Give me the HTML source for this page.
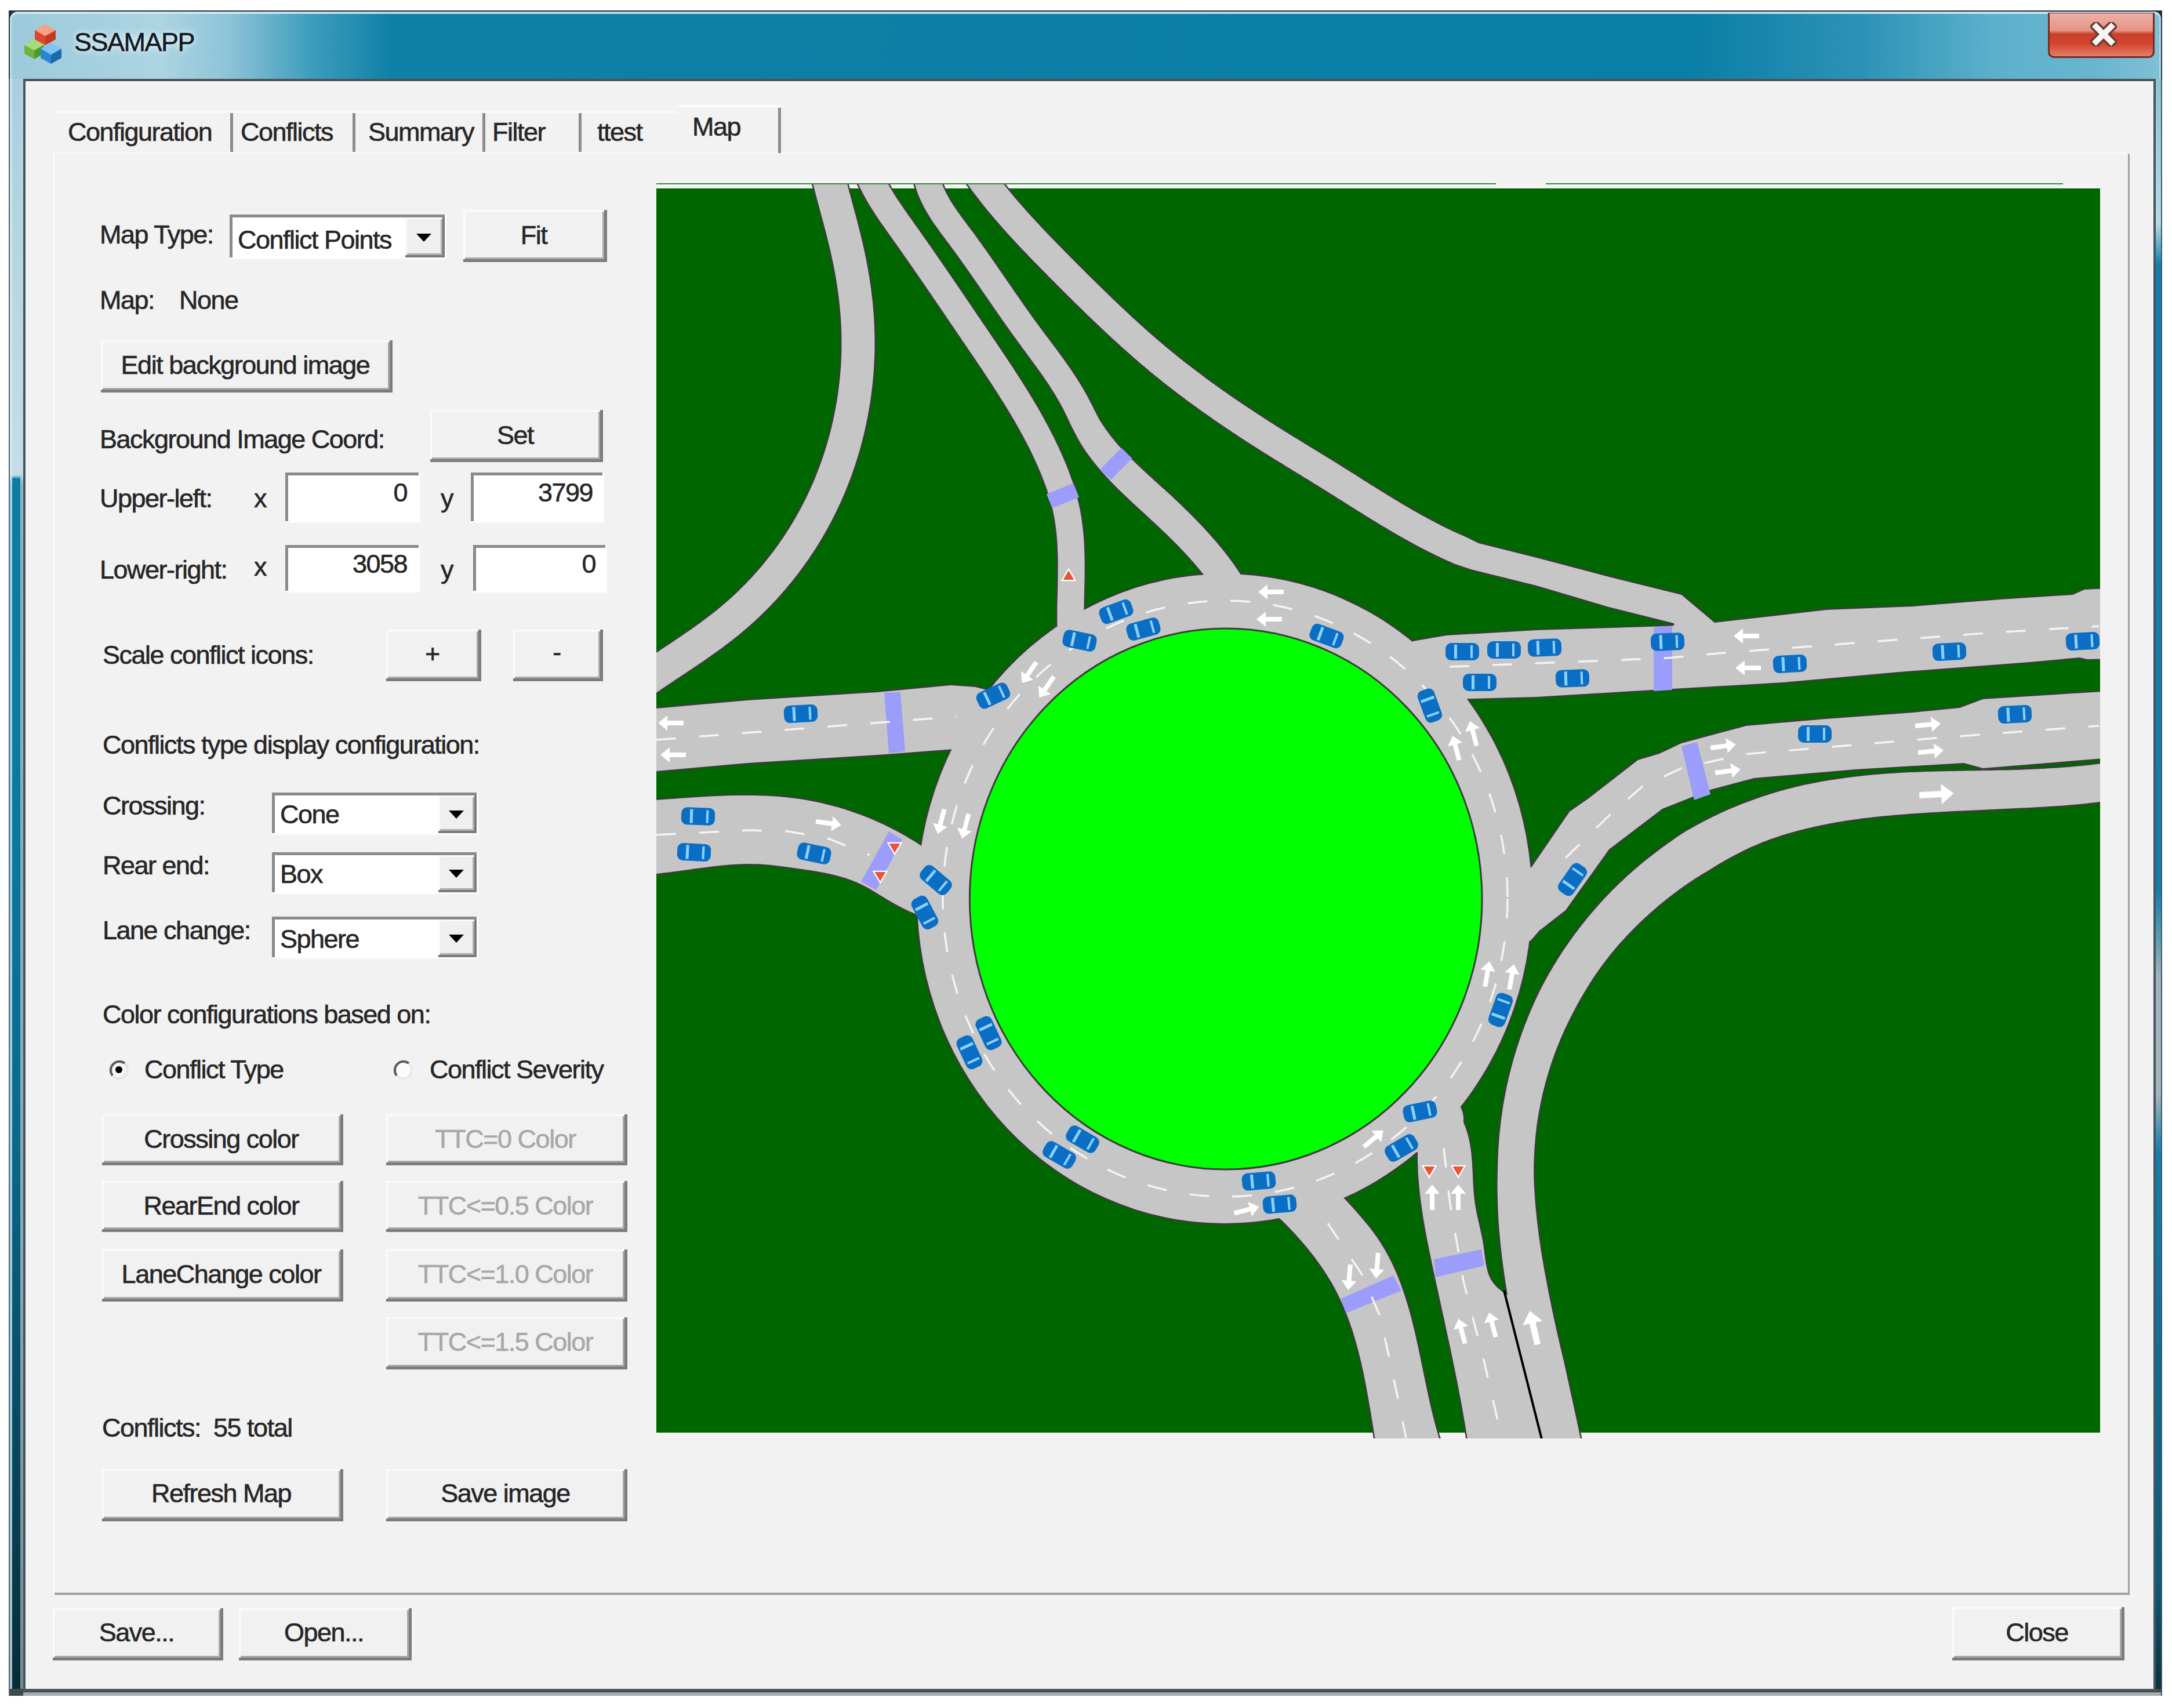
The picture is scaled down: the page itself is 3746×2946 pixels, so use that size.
<!DOCTYPE html>
<html><head><meta charset="utf-8"><style>html,body{margin:0;padding:0;}body{width:3746px;height:2946px;position:relative;overflow:hidden;background:#fff;font-family:"Liberation Sans",sans-serif;}.a{position:absolute;}.t{position:absolute;white-space:pre;-webkit-text-stroke:0.6px currentColor;}</style></head><body>
<div class="a" style="left:15px;top:18px;width:3714px;height:2907px;background:#1d3440;"></div>
<div class="a" style="left:17px;top:20px;width:3710px;height:116px;border-radius:14px 12px 0 0;background:linear-gradient(90deg,#9ccadb 0px,#acd4e2 260px,#8cc3d6 380px,#3d9dbd 520px,#0f80a6 660px,#0a7ea5 2900px,#2d93b6 3200px,#5cb0cc 3420px,#6ab5cf 3600px,#7fc0d6 3710px);"></div>
<div class="a" style="left:17px;top:20px;width:3710px;height:116px;border-radius:14px 12px 0 0;border-top:4px solid rgba(215,235,242,0.85);border-left:3px solid rgba(215,235,242,0.7);border-right:3px solid rgba(215,235,242,0.6);box-sizing:border-box;"></div>
<div class="a" style="left:15px;top:136px;width:2px;height:2789px;background:#50646c;"></div>
<div class="a" style="left:17px;top:136px;width:4px;height:2789px;background:linear-gradient(180deg,#c8e2ec 0px,#d4eaf2 680px,#9fd0e8 700px,#9ccbe0 2400px,#a8bcc4 2780px);"></div>
<div class="a" style="left:21px;top:136px;width:14px;height:2789px;background:linear-gradient(180deg,#a9cfdd 0px,#c4dde6 670px,#c0dce6 684px,#0b7ca2 690px,#097ba1 1200px,#0a6a8c 1800px,#083e50 2500px,#062c38 2780px);"></div>
<div class="a" style="left:35px;top:136px;width:5px;height:2789px;background:linear-gradient(180deg,#b0d2de 0px,#c0dce6 680px,#8eb0c4 700px,#8aa8b8 2000px,#7a8a90 2780px);"></div>
<div class="a" style="left:3718px;top:136px;width:11px;height:2789px;background:linear-gradient(180deg,#8cc4d8 0px,#b8dae6 250px,#1080b0 320px,#0f7fae 1400px,#9fb4bc 1550px,#a4b6bc 1750px,#1080b0 1850px,#0c5a78 2600px,#0b3040 2780px);"></div>
<div class="a" style="left:3727px;top:136px;width:2px;height:2789px;background:#3a5a66;"></div>
<div class="a" style="left:17px;top:2913px;width:3710px;height:6px;background:#44484a;"></div>
<div class="a" style="left:17px;top:2919px;width:3710px;height:6px;background:#a6abad;"></div>
<div class="a" style="left:17px;top:2919px;width:23px;height:6px;background:#3a4a50;"></div>
<div class="a" style="left:40px;top:136px;width:3678px;height:2781px;background:#45565e;"></div>
<div class="a" style="left:44px;top:140px;width:3670px;height:2773px;background:#f2f2f2;"></div>
<div class="t" style="left:128px;top:50.4px;font-size:45px;line-height:45px;color:#111a22;letter-spacing:-1.5px;text-shadow:0 0 14px rgba(255,255,255,0.9),0 0 6px rgba(255,255,255,0.6);">SSAMAPP</div>
<svg class="a" style="left:36px;top:38px" width="76" height="76" viewBox="0 0 76 76"><polygon points="24,14.080000000000002 42.0,4 60,14.080000000000002 42.0,24.160000000000004" fill="#f7a08a"/><polygon points="24,14.080000000000002 42.0,24.160000000000004 42.0,40 24,29.919999999999998" fill="#e2452a"/><polygon points="42.0,24.160000000000004 60,14.080000000000002 60,29.919999999999998 42.0,40" fill="#c73a22"/><polygon points="6,39.52 23.0,30 40,39.52 23.0,49.040000000000006" fill="#a8dc78"/><polygon points="6,39.52 23.0,49.040000000000006 23.0,64 6,54.48" fill="#6cb43c"/><polygon points="23.0,49.040000000000006 40,39.52 40,54.48 23.0,64" fill="#4e9a2a"/><polygon points="34,46.08 52.0,36 70,46.08 52.0,56.160000000000004" fill="#7cc4f4"/><polygon points="34,46.08 52.0,56.160000000000004 52.0,72 34,61.92" fill="#2a86d0"/><polygon points="52.0,56.160000000000004 70,46.08 70,61.92 52.0,72" fill="#1a6ab0"/></svg>
<div class="a" style="left:3532px;top:22px;width:184px;height:78px;border-radius:0 0 10px 10px;background:#7a2a22;"></div>
<div class="a" style="left:3535px;top:23px;width:178px;height:74px;border-radius:0 0 8px 8px;background:linear-gradient(180deg,#eeb0a6 0%,#e49484 40%,#c8402a 48%,#d3442c 70%,#e37d68 100%);"></div>
<svg class="a" style="left:3605px;top:38px" width="46" height="42" viewBox="0 0 46 42"><path d="M10 8 L36 34 M36 8 L10 34" stroke="#6a3a36" stroke-width="17" stroke-linecap="square"/><path d="M10 8 L36 34 M36 8 L10 34" stroke="#fbf4f2" stroke-width="10" stroke-linecap="square"/></svg>
<div class="a" style="left:92px;top:263px;width:3581px;height:2488px;background:#fcfcfc;"></div>
<div class="a" style="left:94px;top:265px;width:3579px;height:2486px;background:#a0a0a0;"></div>
<div class="a" style="left:94px;top:265px;width:3576px;height:2482px;background:#f2f2f2;"></div>
<div class="a" style="left:96px;top:193px;width:1072px;height:70px;background:#f2f2f2;"></div>
<div class="a" style="left:397px;top:194px;width:5px;height:68px;background:#8c8c8c;"></div>
<div class="a" style="left:608px;top:194px;width:5px;height:68px;background:#8c8c8c;"></div>
<div class="a" style="left:832px;top:194px;width:5px;height:68px;background:#8c8c8c;"></div>
<div class="a" style="left:998px;top:194px;width:5px;height:68px;background:#8c8c8c;"></div>
<div class="a" style="left:1342px;top:186px;width:5px;height:78px;background:#8c8c8c;"></div>
<div class="a" style="left:96px;top:192px;width:1072px;height:3px;background:#fafafa;"></div>
<div class="a" style="left:1168px;top:181px;width:177px;height:4px;background:#fafafa;"></div>
<div class="t" style="left:117px;top:205.4px;font-size:45px;line-height:45px;color:#262626;letter-spacing:-1.5px;">Configuration</div>
<div class="t" style="left:415px;top:205.4px;font-size:45px;line-height:45px;color:#262626;letter-spacing:-1.5px;">Conflicts</div>
<div class="t" style="left:635px;top:205.4px;font-size:45px;line-height:45px;color:#262626;letter-spacing:-1.5px;">Summary</div>
<div class="t" style="left:849px;top:205.4px;font-size:45px;line-height:45px;color:#262626;letter-spacing:-1.5px;">Filter</div>
<div class="t" style="left:1030px;top:205.4px;font-size:45px;line-height:45px;color:#262626;letter-spacing:-1.5px;">ttest</div>
<div class="t" style="left:1194px;top:196.4px;font-size:45px;line-height:45px;color:#262626;letter-spacing:-1.5px;">Map</div>
<svg class="a" style="left:1100px;top:300px" width="2560" height="2200" viewBox="1100 300 2560 2200">
<defs><clipPath id="mc"><rect x="1132" y="318" width="2490" height="2163"/></clipPath></defs>
<rect x="1132" y="316" width="1448" height="2" fill="#2f8a3f"/><rect x="2666" y="316" width="892" height="2" fill="#2f8a3f"/>
<rect x="1132" y="318" width="2490" height="7" fill="#f4f4f0"/>
<rect x="1132" y="325" width="2490" height="2146" fill="#006600"/>
<g clip-path="url(#mc)">
<g fill="#3c3c3c" stroke="#3c3c3c" stroke-width="5" stroke-linejoin="round">
<path d="M1397.2,296.5 L1398.4,301.4 L1399.6,306.4 L1400.8,311.3 L1402.0,316.2 L1403.3,321.1 L1404.5,326.1 L1405.8,331.0 L1407.1,335.8 L1408.4,340.7 L1409.7,345.6 L1411.0,350.5 L1412.3,355.3 L1413.6,360.2 L1414.9,365.0 L1416.2,369.9 L1417.5,374.7 L1418.8,379.5 L1420.1,384.3 L1421.4,389.1 L1422.6,393.9 L1423.9,398.7 L1425.1,403.5 L1426.3,408.3 L1427.5,413.1 L1428.7,417.9 L1429.9,422.7 L1431.0,427.4 L1432.2,432.2 L1433.2,436.9 L1434.3,441.7 L1435.3,446.5 L1436.3,451.2 L1437.3,456.0 L1438.3,460.7 L1439.2,465.5 L1440.1,470.3 L1440.9,475.1 L1441.7,479.8 L1442.5,484.6 L1443.3,489.4 L1444.0,494.2 L1444.7,499.0 L1445.4,503.8 L1446.0,508.6 L1446.6,513.4 L1447.2,518.1 L1447.7,522.9 L1448.2,527.8 L1448.7,532.6 L1449.1,537.4 L1449.5,542.2 L1449.9,547.0 L1450.2,551.8 L1450.5,556.6 L1450.8,561.4 L1451.0,566.2 L1451.2,571.0 L1451.3,575.8 L1451.4,580.7 L1451.5,585.5 L1451.5,590.3 L1451.5,595.1 L1451.5,599.9 L1451.4,604.7 L1451.3,609.6 L1451.1,614.4 L1450.9,619.2 L1450.7,624.0 L1450.4,628.9 L1450.1,633.7 L1449.7,638.5 L1449.3,643.3 L1448.9,648.2 L1448.4,653.0 L1447.9,657.8 L1447.4,662.6 L1446.8,667.4 L1446.2,672.2 L1445.6,677.0 L1444.9,681.8 L1444.1,686.6 L1443.4,691.4 L1442.6,696.2 L1441.7,700.9 L1440.9,705.7 L1439.9,710.4 L1439.0,715.2 L1438.0,719.9 L1437.0,724.7 L1435.9,729.4 L1434.8,734.1 L1433.7,738.8 L1432.5,743.5 L1431.3,748.2 L1430.0,752.9 L1428.8,757.6 L1427.4,762.2 L1426.1,766.9 L1424.7,771.5 L1423.3,776.1 L1421.8,780.7 L1420.3,785.3 L1418.7,789.9 L1417.2,794.4 L1415.6,799.0 L1413.9,803.5 L1412.2,808.0 L1410.5,812.6 L1408.7,817.0 L1407.0,821.5 L1405.1,826.0 L1403.3,830.4 L1401.4,834.8 L1399.4,839.2 L1397.5,843.6 L1395.5,848.0 L1393.4,852.3 L1391.3,856.7 L1389.2,861.0 L1387.1,865.3 L1384.9,869.5 L1382.7,873.8 L1380.4,878.0 L1378.1,882.2 L1375.8,886.4 L1373.4,890.6 L1371.1,894.8 L1368.6,898.9 L1366.2,903.0 L1363.7,907.1 L1361.2,911.2 L1358.6,915.2 L1356.0,919.3 L1353.4,923.3 L1350.7,927.2 L1348.0,931.2 L1345.3,935.1 L1342.6,939.1 L1339.8,943.0 L1336.9,946.8 L1334.1,950.7 L1331.2,954.5 L1328.3,958.3 L1325.4,962.1 L1322.4,965.8 L1319.4,969.5 L1316.3,973.2 L1313.3,976.9 L1310.2,980.5 L1307.0,984.2 L1303.9,987.7 L1300.7,991.3 L1297.4,994.9 L1294.2,998.4 L1290.9,1001.8 L1287.6,1005.3 L1284.3,1008.7 L1280.9,1012.1 L1277.5,1015.5 L1274.1,1018.9 L1270.6,1022.2 L1267.1,1025.5 L1263.6,1028.7 L1260.1,1032.0 L1256.5,1035.2 L1252.9,1038.3 L1249.3,1041.5 L1245.6,1044.6 L1241.9,1047.7 L1238.2,1050.7 L1234.5,1053.7 L1230.7,1056.8 L1226.9,1059.7 L1223.0,1062.7 L1219.2,1065.7 L1215.3,1068.6 L1211.3,1071.5 L1207.4,1074.4 L1203.4,1077.3 L1199.4,1080.2 L1195.4,1083.0 L1191.3,1085.9 L1187.3,1088.7 L1183.2,1091.5 L1179.1,1094.3 L1174.9,1097.2 L1170.8,1100.0 L1166.6,1102.8 L1162.5,1105.6 L1158.3,1108.4 L1154.1,1111.2 L1149.9,1114.0 L1145.7,1116.8 L1141.5,1119.6 L1137.3,1122.4 L1133.0,1125.2 L1128.8,1128.0 L1124.6,1130.9 L1120.3,1133.7 L1116.1,1136.6 L1111.9,1139.4 L1107.7,1142.3 L1103.4,1145.2 L1099.2,1148.1 L1095.0,1151.0 L1090.8,1154.0 L1086.6,1156.9 L1082.4,1159.9 L1078.3,1162.9 L1111.7,1209.1 L1115.7,1206.2 L1119.6,1203.4 L1123.6,1200.6 L1127.6,1197.8 L1131.7,1195.0 L1135.7,1192.2 L1139.8,1189.4 L1143.9,1186.6 L1148.0,1183.8 L1152.2,1181.0 L1156.3,1178.2 L1160.5,1175.4 L1164.7,1172.6 L1168.9,1169.8 L1173.1,1167.0 L1177.3,1164.2 L1181.5,1161.4 L1185.8,1158.6 L1190.0,1155.8 L1194.2,1152.9 L1198.5,1150.0 L1202.7,1147.2 L1207.0,1144.3 L1211.3,1141.4 L1215.5,1138.5 L1219.8,1135.5 L1224.0,1132.6 L1228.3,1129.6 L1232.5,1126.6 L1236.7,1123.5 L1241.0,1120.5 L1245.2,1117.4 L1249.4,1114.3 L1253.6,1111.1 L1257.7,1107.9 L1261.9,1104.7 L1266.0,1101.5 L1270.1,1098.2 L1274.2,1094.9 L1278.3,1091.5 L1282.4,1088.1 L1286.4,1084.7 L1290.4,1081.3 L1294.4,1077.8 L1298.3,1074.2 L1302.2,1070.7 L1306.1,1067.1 L1309.9,1063.5 L1313.7,1059.8 L1317.5,1056.1 L1321.2,1052.4 L1324.9,1048.7 L1328.6,1044.9 L1332.2,1041.1 L1335.9,1037.3 L1339.4,1033.4 L1343.0,1029.5 L1346.5,1025.6 L1350.0,1021.6 L1353.4,1017.7 L1356.8,1013.6 L1360.2,1009.6 L1363.5,1005.5 L1366.8,1001.5 L1370.1,997.3 L1373.4,993.2 L1376.6,989.0 L1379.7,984.8 L1382.9,980.6 L1386.0,976.3 L1389.0,972.1 L1392.1,967.8 L1395.1,963.4 L1398.0,959.1 L1400.9,954.7 L1403.8,950.3 L1406.7,945.9 L1409.5,941.4 L1412.2,937.0 L1415.0,932.5 L1417.7,927.9 L1420.3,923.4 L1423.0,918.8 L1425.6,914.2 L1428.1,909.6 L1430.6,905.0 L1433.1,900.4 L1435.5,895.7 L1437.9,891.0 L1440.3,886.3 L1442.6,881.5 L1444.9,876.8 L1447.1,872.0 L1449.3,867.2 L1451.5,862.4 L1453.6,857.5 L1455.7,852.7 L1457.8,847.8 L1459.8,842.9 L1461.7,838.0 L1463.7,833.1 L1465.6,828.2 L1467.4,823.2 L1469.2,818.2 L1471.0,813.3 L1472.7,808.3 L1474.4,803.3 L1476.0,798.2 L1477.6,793.2 L1479.2,788.1 L1480.7,783.1 L1482.2,778.0 L1483.7,772.9 L1485.1,767.8 L1486.4,762.7 L1487.7,757.6 L1489.0,752.4 L1490.3,747.3 L1491.5,742.1 L1492.6,737.0 L1493.8,731.8 L1494.8,726.6 L1495.9,721.4 L1496.9,716.2 L1497.8,711.0 L1498.7,705.8 L1499.6,700.6 L1500.5,695.4 L1501.3,690.1 L1502.0,684.9 L1502.7,679.7 L1503.4,674.4 L1504.0,669.2 L1504.6,663.9 L1505.2,658.7 L1505.7,653.4 L1506.1,648.1 L1506.6,642.9 L1506.9,637.6 L1507.3,632.3 L1507.6,627.1 L1507.8,621.8 L1508.1,616.5 L1508.2,611.2 L1508.4,606.0 L1508.5,600.7 L1508.5,595.4 L1508.5,590.2 L1508.5,584.9 L1508.4,579.6 L1508.3,574.4 L1508.1,569.1 L1508.0,563.9 L1507.7,558.6 L1507.4,553.4 L1507.1,548.1 L1506.8,542.9 L1506.4,537.7 L1505.9,532.4 L1505.5,527.2 L1505.0,522.0 L1504.4,516.8 L1503.8,511.6 L1503.2,506.4 L1502.6,501.3 L1501.9,496.1 L1501.2,490.9 L1500.4,485.7 L1499.6,480.6 L1498.8,475.4 L1497.9,470.3 L1497.1,465.2 L1496.1,460.0 L1495.2,454.9 L1494.2,449.8 L1493.2,444.7 L1492.1,439.6 L1491.1,434.5 L1490.0,429.4 L1488.8,424.4 L1487.7,419.3 L1486.5,414.3 L1485.3,409.3 L1484.1,404.3 L1482.8,399.3 L1481.6,394.3 L1480.3,389.3 L1479.0,384.4 L1477.8,379.5 L1476.5,374.5 L1475.2,369.6 L1473.8,364.8 L1472.5,359.9 L1471.2,355.0 L1469.9,350.2 L1468.6,345.3 L1467.3,340.5 L1466.0,335.7 L1464.7,330.9 L1463.5,326.1 L1462.2,321.3 L1461.0,316.6 L1459.7,311.8 L1458.5,307.1 L1457.3,302.3 L1456.1,297.6 L1455.0,292.9 L1453.9,288.2 L1452.7,283.5 Z"/>
<path d="M1472.3,297.7 L1474.2,302.8 L1476.2,307.9 L1478.3,313.0 L1480.5,317.9 L1482.8,322.8 L1485.1,327.6 L1487.6,332.4 L1490.1,337.1 L1492.7,341.8 L1495.3,346.4 L1498.0,350.9 L1500.7,355.5 L1503.5,359.9 L1506.3,364.3 L1509.1,368.7 L1512.0,373.1 L1514.9,377.4 L1517.8,381.7 L1520.8,385.9 L1523.7,390.1 L1526.7,394.3 L1529.6,398.5 L1532.5,402.6 L1535.5,406.7 L1538.4,410.9 L1541.3,414.9 L1544.2,419.0 L1547.1,423.2 L1550.0,427.3 L1552.9,431.4 L1555.8,435.5 L1558.6,439.6 L1561.5,443.7 L1564.4,447.8 L1567.3,451.9 L1570.1,456.0 L1573.0,460.2 L1575.8,464.3 L1578.7,468.4 L1581.5,472.5 L1584.4,476.7 L1587.2,480.8 L1590.1,484.9 L1592.9,489.0 L1595.8,493.2 L1598.6,497.3 L1601.4,501.5 L1604.3,505.6 L1607.1,509.8 L1609.9,513.9 L1612.8,518.0 L1615.6,522.2 L1618.4,526.4 L1621.3,530.5 L1624.1,534.7 L1626.9,538.8 L1629.8,543.0 L1632.6,547.2 L1635.4,551.3 L1638.2,555.5 L1641.1,559.7 L1643.9,563.8 L1646.7,568.0 L1649.6,572.2 L1652.4,576.4 L1655.3,580.6 L1658.1,584.8 L1660.9,589.0 L1663.8,593.1 L1666.6,597.3 L1669.5,601.5 L1672.3,605.7 L1675.2,609.9 L1678.0,614.1 L1680.9,618.3 L1683.7,622.5 L1686.5,626.7 L1689.4,630.9 L1692.2,635.1 L1695.0,639.3 L1697.8,643.5 L1700.6,647.7 L1703.4,651.9 L1706.1,656.1 L1708.9,660.3 L1711.7,664.5 L1714.4,668.8 L1717.1,673.0 L1719.9,677.2 L1722.6,681.4 L1725.2,685.7 L1727.9,689.9 L1730.6,694.1 L1733.2,698.4 L1735.8,702.6 L1738.4,706.9 L1741.0,711.2 L1743.5,715.4 L1746.1,719.7 L1748.6,724.0 L1751.0,728.3 L1753.5,732.6 L1755.9,736.9 L1758.4,741.2 L1760.7,745.5 L1763.1,749.8 L1765.4,754.2 L1767.7,758.5 L1770.0,762.8 L1772.3,767.2 L1774.5,771.6 L1776.7,775.9 L1778.8,780.3 L1780.9,784.7 L1783.0,789.1 L1785.1,793.5 L1787.1,798.0 L1789.1,802.4 L1791.0,806.8 L1792.9,811.3 L1794.8,815.8 L1796.6,820.2 L1798.4,824.7 L1800.1,829.2 L1801.8,833.7 L1803.4,838.1 L1805.0,842.6 L1806.5,847.1 L1808.0,851.6 L1809.4,856.1 L1810.7,860.6 L1812.0,865.1 L1813.2,869.7 L1814.4,874.2 L1815.5,878.7 L1816.5,883.2 L1817.4,887.8 L1818.3,892.3 L1819.1,896.9 L1819.8,901.5 L1820.5,906.2 L1821.1,910.8 L1821.7,915.5 L1822.2,920.2 L1822.6,924.9 L1823.0,929.7 L1823.4,934.5 L1823.7,939.3 L1823.9,944.1 L1824.1,948.9 L1824.3,953.8 L1824.5,958.7 L1824.6,963.6 L1824.6,968.5 L1824.7,973.4 L1824.7,978.4 L1824.7,983.3 L1824.6,988.3 L1824.6,993.3 L1824.5,998.3 L1824.4,1003.3 L1824.3,1008.4 L1824.2,1013.4 L1824.1,1018.5 L1824.0,1023.6 L1823.8,1028.7 L1823.7,1033.8 L1823.6,1038.9 L1823.5,1044.1 L1823.4,1049.2 L1823.4,1054.4 L1823.3,1059.6 L1823.3,1064.8 L1823.3,1070.0 L1823.4,1075.2 L1823.5,1080.4 L1823.6,1085.6 L1823.8,1090.9 L1824.0,1096.1 L1824.3,1101.4 L1824.7,1106.6 L1825.1,1111.9 L1870.9,1108.1 L1870.6,1103.4 L1870.2,1098.6 L1870.0,1093.9 L1869.8,1089.1 L1869.6,1084.2 L1869.5,1079.4 L1869.4,1074.5 L1869.3,1069.6 L1869.3,1064.7 L1869.3,1059.8 L1869.4,1054.8 L1869.4,1049.9 L1869.5,1044.9 L1869.6,1039.8 L1869.7,1034.8 L1869.8,1029.7 L1869.9,1024.7 L1870.1,1019.6 L1870.2,1014.5 L1870.3,1009.4 L1870.4,1004.2 L1870.5,999.1 L1870.6,993.9 L1870.6,988.7 L1870.7,983.5 L1870.7,978.4 L1870.7,973.2 L1870.6,968.0 L1870.6,962.7 L1870.4,957.5 L1870.3,952.3 L1870.1,947.1 L1869.9,941.8 L1869.6,936.6 L1869.3,931.3 L1868.9,926.1 L1868.4,920.8 L1867.9,915.6 L1867.4,910.3 L1866.7,905.1 L1866.0,899.8 L1865.3,894.6 L1864.4,889.3 L1863.5,884.1 L1862.5,878.8 L1861.4,873.6 L1860.3,868.4 L1859.0,863.2 L1857.7,858.0 L1856.4,852.9 L1854.9,847.8 L1853.4,842.7 L1851.8,837.7 L1850.2,832.6 L1848.5,827.6 L1846.7,822.7 L1844.9,817.7 L1843.1,812.8 L1841.2,807.9 L1839.3,803.0 L1837.3,798.2 L1835.3,793.4 L1833.2,788.6 L1831.1,783.8 L1829.0,779.0 L1826.8,774.3 L1824.7,769.6 L1822.4,764.9 L1820.2,760.2 L1817.9,755.5 L1815.6,750.9 L1813.2,746.3 L1810.8,741.6 L1808.4,737.1 L1806.0,732.5 L1803.5,727.9 L1801.1,723.4 L1798.6,718.8 L1796.0,714.3 L1793.5,709.8 L1790.9,705.3 L1788.3,700.8 L1785.7,696.4 L1783.0,691.9 L1780.4,687.5 L1777.7,683.0 L1775.0,678.6 L1772.3,674.2 L1769.6,669.8 L1766.9,665.5 L1764.1,661.1 L1761.4,656.7 L1758.6,652.4 L1755.8,648.1 L1753.0,643.7 L1750.2,639.4 L1747.4,635.1 L1744.6,630.8 L1741.7,626.5 L1738.9,622.3 L1736.1,618.0 L1733.2,613.7 L1730.4,609.5 L1727.5,605.2 L1724.7,601.0 L1721.8,596.8 L1719.0,592.5 L1716.1,588.3 L1713.2,584.1 L1710.4,579.9 L1707.5,575.7 L1704.7,571.5 L1701.9,567.3 L1699.0,563.1 L1696.2,558.9 L1693.3,554.8 L1690.5,550.6 L1687.7,546.4 L1684.8,542.2 L1682.0,538.0 L1679.1,533.8 L1676.3,529.7 L1673.5,525.5 L1670.6,521.3 L1667.8,517.1 L1665.0,513.0 L1662.1,508.8 L1659.3,504.6 L1656.5,500.5 L1653.6,496.3 L1650.8,492.1 L1647.9,488.0 L1645.1,483.8 L1642.2,479.6 L1639.4,475.5 L1636.5,471.3 L1633.7,467.2 L1630.8,463.0 L1628.0,458.8 L1625.1,454.7 L1622.3,450.5 L1619.4,446.4 L1616.5,442.2 L1613.6,438.1 L1610.8,433.9 L1607.9,429.8 L1605.0,425.6 L1602.1,421.5 L1599.2,417.3 L1596.3,413.2 L1593.4,409.1 L1590.5,404.9 L1587.6,400.8 L1584.7,396.6 L1581.8,392.5 L1578.8,388.4 L1575.9,384.2 L1573.0,380.1 L1570.0,376.0 L1567.1,371.9 L1564.2,367.8 L1561.4,363.7 L1558.6,359.7 L1555.8,355.6 L1553.0,351.6 L1550.3,347.5 L1547.6,343.5 L1545.0,339.5 L1542.4,335.4 L1539.9,331.4 L1537.5,327.3 L1535.1,323.3 L1532.8,319.3 L1530.5,315.2 L1528.4,311.1 L1526.3,307.1 L1524.3,303.0 L1522.4,298.9 L1520.6,294.8 L1518.8,290.6 L1517.2,286.5 L1515.7,282.3 Z"/>
<path d="M1573.6,291.7 L1574.1,297.7 L1575.0,303.7 L1576.0,309.6 L1577.3,315.3 L1578.8,321.0 L1580.5,326.5 L1582.3,331.9 L1584.3,337.2 L1586.5,342.5 L1588.8,347.6 L1591.3,352.6 L1593.8,357.5 L1596.5,362.3 L1599.2,367.1 L1602.1,371.8 L1605.0,376.4 L1607.9,380.9 L1610.9,385.4 L1614.0,389.8 L1617.1,394.1 L1620.2,398.4 L1623.3,402.7 L1626.4,406.9 L1629.5,411.0 L1632.6,415.2 L1635.7,419.3 L1638.7,423.3 L1641.7,427.4 L1644.7,431.4 L1647.7,435.5 L1650.6,439.6 L1653.6,443.7 L1656.5,447.8 L1659.4,451.9 L1662.3,456.0 L1665.3,460.1 L1668.1,464.2 L1671.0,468.3 L1673.9,472.4 L1676.8,476.5 L1679.7,480.7 L1682.5,484.8 L1685.4,488.9 L1688.2,493.1 L1691.1,497.2 L1693.9,501.4 L1696.8,505.5 L1699.6,509.7 L1702.5,513.8 L1705.4,518.0 L1708.2,522.1 L1711.1,526.3 L1713.9,530.4 L1716.8,534.6 L1719.7,538.7 L1722.6,542.9 L1725.5,547.1 L1728.4,551.2 L1731.3,555.3 L1734.2,559.5 L1737.1,563.6 L1740.1,567.8 L1743.0,571.9 L1746.0,576.0 L1749.0,580.2 L1752.0,584.3 L1755.0,588.4 L1758.0,592.5 L1760.9,596.6 L1763.9,600.7 L1766.9,604.8 L1769.9,608.8 L1772.9,612.9 L1775.9,616.9 L1778.9,620.9 L1781.8,625.0 L1784.7,629.0 L1787.7,633.0 L1790.5,637.0 L1793.4,641.1 L1796.3,645.1 L1799.1,649.1 L1801.9,653.2 L1804.6,657.2 L1807.4,661.2 L1810.0,665.3 L1812.7,669.4 L1815.3,673.4 L1817.8,677.5 L1820.3,681.6 L1822.8,685.8 L1825.2,689.9 L1827.6,694.1 L1829.9,698.2 L1832.2,702.4 L1834.4,706.6 L1836.5,710.9 L1838.6,715.2 L1840.8,719.6 L1842.9,724.2 L1845.1,728.8 L1847.3,733.5 L1849.6,738.2 L1852.1,743.0 L1854.6,747.9 L1857.2,752.7 L1859.8,757.5 L1862.5,762.2 L1865.3,766.9 L1868.2,771.5 L1871.1,776.0 L1874.2,780.5 L1877.3,784.8 L1880.5,789.1 L1883.7,793.4 L1887.0,797.6 L1890.4,801.7 L1893.8,805.8 L1897.2,809.9 L1900.7,813.9 L1904.2,817.8 L1907.7,821.7 L1911.3,825.6 L1914.9,829.5 L1918.5,833.3 L1922.2,837.0 L1925.9,840.8 L1929.6,844.4 L1933.3,848.1 L1937.1,851.7 L1940.9,855.2 L1944.7,858.8 L1948.4,862.4 L1952.2,865.9 L1956.0,869.4 L1959.8,872.9 L1963.6,876.4 L1967.3,879.9 L1971.1,883.3 L1974.8,886.8 L1978.6,890.3 L1982.3,893.7 L1986.0,897.2 L1989.7,900.6 L1993.4,904.0 L1997.1,907.5 L2000.8,910.9 L2004.4,914.4 L2008.1,917.8 L2011.7,921.3 L2015.3,924.8 L2018.8,928.3 L2022.4,931.8 L2025.9,935.3 L2029.3,938.8 L2032.8,942.3 L2036.2,945.9 L2039.6,949.4 L2042.9,953.0 L2046.2,956.5 L2049.5,960.1 L2052.7,963.7 L2055.9,967.2 L2059.1,970.8 L2062.2,974.4 L2065.2,978.0 L2068.2,981.7 L2071.2,985.3 L2074.1,988.9 L2077.0,992.6 L2079.8,996.2 L2082.5,999.9 L2085.2,1003.5 L2087.9,1007.2 L2090.5,1010.9 L2092.7,1014.2 L2094.3,1016.9 L2095.4,1019.0 L2096.0,1020.5 L2096.2,1021.6 L2096.3,1022.5 L2096.2,1023.8 L2095.7,1025.9 L2094.4,1029.1 L2141.6,1050.9 L2145.3,1041.5 L2147.5,1031.9 L2148.3,1022.5 L2147.6,1013.4 L2145.6,1005.1 L2142.9,997.8 L2139.7,991.5 L2136.4,986.1 L2133.4,981.5 L2130.5,977.3 L2127.5,973.1 L2124.6,968.9 L2121.5,964.8 L2118.5,960.7 L2115.3,956.6 L2112.2,952.6 L2108.9,948.5 L2105.7,944.5 L2102.4,940.5 L2099.1,936.5 L2095.7,932.6 L2092.3,928.7 L2088.8,924.8 L2085.4,920.9 L2081.9,917.0 L2078.3,913.2 L2074.8,909.3 L2071.2,905.5 L2067.5,901.7 L2063.9,898.0 L2060.2,894.2 L2056.6,890.5 L2052.9,886.7 L2049.1,883.0 L2045.4,879.4 L2041.6,875.7 L2037.9,872.0 L2034.1,868.4 L2030.3,864.8 L2026.5,861.2 L2022.7,857.6 L2018.9,854.1 L2015.0,850.6 L2011.2,847.1 L2007.4,843.6 L2003.5,840.2 L1999.7,836.7 L1995.9,833.3 L1992.1,829.9 L1988.4,826.5 L1984.6,823.1 L1980.9,819.7 L1977.2,816.3 L1973.6,813.0 L1970.0,809.6 L1966.4,806.2 L1962.8,802.8 L1959.3,799.4 L1955.8,796.1 L1952.3,792.7 L1948.9,789.3 L1945.5,785.9 L1942.2,782.5 L1938.9,779.1 L1935.7,775.6 L1932.5,772.2 L1929.4,768.7 L1926.3,765.2 L1923.3,761.7 L1920.4,758.1 L1917.5,754.5 L1914.7,750.9 L1912.0,747.2 L1909.2,743.6 L1906.6,739.9 L1904.0,736.1 L1901.5,732.4 L1899.0,728.5 L1896.7,724.7 L1894.4,720.7 L1892.2,716.5 L1890.0,712.3 L1887.8,707.9 L1885.5,703.4 L1883.2,698.8 L1880.8,694.2 L1878.4,689.5 L1875.9,684.7 L1873.3,680.0 L1870.7,675.4 L1868.1,670.8 L1865.4,666.2 L1862.6,661.7 L1859.8,657.3 L1857.0,652.8 L1854.2,648.4 L1851.3,644.1 L1848.4,639.7 L1845.5,635.5 L1842.5,631.2 L1839.5,626.9 L1836.6,622.7 L1833.6,618.5 L1830.6,614.4 L1827.5,610.2 L1824.5,606.1 L1821.5,602.0 L1818.4,597.9 L1815.4,593.9 L1812.3,589.8 L1809.3,585.8 L1806.3,581.7 L1803.2,577.7 L1800.2,573.7 L1797.2,569.7 L1794.2,565.7 L1791.3,561.7 L1788.3,557.7 L1785.4,553.7 L1782.5,549.7 L1779.6,545.7 L1776.7,541.6 L1773.8,537.6 L1770.9,533.5 L1768.1,529.5 L1765.2,525.4 L1762.4,521.3 L1759.5,517.2 L1756.7,513.1 L1753.8,509.0 L1751.0,504.9 L1748.1,500.8 L1745.3,496.6 L1742.4,492.5 L1739.6,488.3 L1736.7,484.2 L1733.9,480.0 L1731.0,475.9 L1728.2,471.7 L1725.3,467.6 L1722.4,463.4 L1719.5,459.2 L1716.6,455.0 L1713.7,450.9 L1710.8,446.7 L1707.9,442.5 L1705.0,438.3 L1702.0,434.1 L1699.1,429.9 L1696.1,425.7 L1693.1,421.6 L1690.1,417.4 L1687.1,413.2 L1684.0,409.0 L1681.0,404.8 L1677.9,400.6 L1674.8,396.5 L1671.7,392.3 L1668.6,388.2 L1665.5,384.1 L1662.5,380.0 L1659.5,376.0 L1656.5,371.9 L1653.7,367.9 L1650.8,363.9 L1648.1,360.0 L1645.4,356.0 L1642.8,352.0 L1640.3,348.1 L1637.9,344.2 L1635.7,340.2 L1633.5,336.3 L1631.5,332.4 L1629.6,328.4 L1627.8,324.5 L1626.1,320.6 L1624.6,316.6 L1623.3,312.7 L1622.1,308.7 L1621.0,304.7 L1620.1,300.7 L1619.4,296.6 L1618.8,292.5 L1618.4,288.3 Z"/>
<path d="M1659.3,304.0 L1662.2,308.3 L1665.1,312.5 L1668.1,316.8 L1671.1,321.0 L1674.2,325.2 L1677.2,329.4 L1680.3,333.5 L1683.4,337.6 L1686.6,341.7 L1689.7,345.8 L1692.9,349.9 L1696.1,353.9 L1699.4,357.9 L1702.6,361.9 L1705.9,365.9 L1709.2,369.8 L1712.5,373.8 L1715.8,377.7 L1719.2,381.6 L1722.6,385.5 L1725.9,389.3 L1729.3,393.2 L1732.8,397.0 L1736.2,400.9 L1739.6,404.7 L1743.1,408.4 L1746.5,412.2 L1750.0,416.0 L1753.5,419.7 L1757.0,423.5 L1760.5,427.2 L1764.0,430.9 L1767.6,434.6 L1771.1,438.3 L1774.6,442.0 L1778.2,445.7 L1781.7,449.3 L1785.3,453.0 L1788.9,456.6 L1792.4,460.3 L1796.0,463.9 L1799.5,467.5 L1803.1,471.1 L1806.7,474.7 L1810.3,478.4 L1813.8,482.0 L1817.4,485.6 L1821.0,489.2 L1824.5,492.7 L1828.1,496.3 L1831.7,499.9 L1835.3,503.5 L1838.9,507.1 L1842.5,510.7 L1846.1,514.3 L1849.7,517.8 L1853.3,521.4 L1857.0,525.0 L1860.6,528.5 L1864.2,532.1 L1867.9,535.6 L1871.5,539.2 L1875.2,542.7 L1878.8,546.3 L1882.5,549.8 L1886.1,553.3 L1889.8,556.8 L1893.5,560.3 L1897.2,563.8 L1900.9,567.3 L1904.6,570.8 L1908.4,574.3 L1912.1,577.8 L1915.8,581.2 L1919.6,584.7 L1923.3,588.1 L1927.1,591.6 L1930.9,595.0 L1934.7,598.4 L1938.5,601.8 L1942.3,605.2 L1946.1,608.6 L1949.9,612.0 L1953.8,615.4 L1957.6,618.7 L1961.5,622.1 L1965.4,625.4 L1969.2,628.7 L1973.1,632.0 L1977.1,635.3 L1981.0,638.6 L1984.9,641.9 L1988.9,645.1 L1992.9,648.4 L1996.8,651.6 L2000.8,654.8 L2004.8,658.0 L2008.8,661.2 L2012.9,664.4 L2016.9,667.5 L2020.9,670.6 L2025.0,673.8 L2029.1,676.9 L2033.1,680.0 L2037.2,683.1 L2041.3,686.1 L2045.4,689.2 L2049.5,692.2 L2053.7,695.3 L2057.8,698.3 L2061.9,701.3 L2066.1,704.3 L2070.2,707.3 L2074.4,710.2 L2078.6,713.2 L2082.7,716.1 L2086.9,719.1 L2091.1,722.0 L2095.3,724.9 L2099.5,727.8 L2103.7,730.7 L2108.0,733.6 L2112.2,736.4 L2116.4,739.3 L2120.7,742.1 L2124.9,745.0 L2129.2,747.8 L2133.4,750.6 L2137.7,753.4 L2142.0,756.2 L2146.2,759.0 L2150.5,761.7 L2154.8,764.5 L2159.1,767.3 L2163.4,770.0 L2167.7,772.7 L2172.0,775.5 L2176.3,778.2 L2180.6,780.9 L2184.9,783.6 L2189.2,786.3 L2193.5,789.0 L2197.8,791.7 L2202.2,794.3 L2206.5,797.0 L2210.8,799.6 L2215.1,802.3 L2219.4,804.9 L2223.7,807.6 L2228.0,810.2 L2232.3,812.9 L2236.6,815.5 L2240.9,818.1 L2245.2,820.7 L2249.5,823.4 L2253.8,826.0 L2258.1,828.6 L2262.4,831.3 L2266.6,833.9 L2270.9,836.5 L2275.2,839.2 L2279.4,841.8 L2283.7,844.4 L2287.9,847.1 L2292.1,849.7 L2296.4,852.4 L2300.6,855.1 L2304.9,857.7 L2309.1,860.4 L2313.4,863.1 L2317.7,865.8 L2321.9,868.5 L2326.2,871.2 L2330.5,873.9 L2334.7,876.6 L2339.0,879.2 L2343.3,881.9 L2347.6,884.6 L2351.9,887.3 L2356.2,890.0 L2360.5,892.6 L2364.8,895.3 L2369.2,898.0 L2373.5,900.6 L2377.9,903.3 L2382.2,905.9 L2386.6,908.5 L2391.0,911.1 L2395.4,913.8 L2399.8,916.3 L2404.2,918.9 L2408.6,921.5 L2413.0,924.1 L2417.5,926.6 L2422.0,929.1 L2426.5,931.6 L2431.0,934.1 L2435.5,936.6 L2440.0,939.0 L2444.6,941.5 L2449.1,943.9 L2453.7,946.3 L2458.3,948.6 L2462.9,951.0 L2467.6,953.3 L2472.2,955.6 L2476.9,957.9 L2481.6,960.1 L2486.3,962.4 L2491.1,964.5 L2495.8,966.7 L2500.6,968.8 L2505.4,970.9 L2510.2,973.0 L2537.0,982.0 L2650.0,1010.0 L2775.0,1047.0 L2887.0,1075.0 L2890.0,1120.0 L2950.0,1120.0 L2957.0,1074.0 L2900.0,1026.0 L2775.0,995.0 L2650.0,962.0 L2550.0,937.0 L2529.8,927.0 L2525.3,925.1 L2520.8,923.1 L2516.3,921.1 L2511.9,919.1 L2507.4,917.0 L2503.0,915.0 L2498.6,912.8 L2494.2,910.7 L2489.8,908.5 L2485.4,906.4 L2481.1,904.1 L2476.7,901.9 L2472.4,899.6 L2468.0,897.3 L2463.7,895.0 L2459.4,892.7 L2455.1,890.3 L2450.8,887.9 L2446.5,885.5 L2442.2,883.1 L2437.9,880.7 L2433.6,878.2 L2429.3,875.7 L2425.1,873.2 L2420.8,870.7 L2416.5,868.2 L2412.3,865.6 L2408.0,863.1 L2403.8,860.5 L2399.5,857.9 L2395.3,855.3 L2391.1,852.7 L2386.8,850.1 L2382.6,847.5 L2378.3,844.8 L2374.1,842.2 L2369.8,839.5 L2365.6,836.9 L2361.3,834.2 L2357.1,831.5 L2352.8,828.9 L2348.6,826.2 L2344.3,823.5 L2340.1,820.8 L2335.8,818.1 L2331.5,815.4 L2327.3,812.7 L2323.0,810.1 L2318.7,807.4 L2314.4,804.7 L2310.1,802.0 L2305.8,799.3 L2301.5,796.6 L2297.2,794.0 L2292.9,791.3 L2288.6,788.7 L2284.2,786.0 L2279.9,783.4 L2275.6,780.7 L2271.3,778.1 L2267.0,775.5 L2262.7,772.8 L2258.4,770.2 L2254.1,767.6 L2249.8,764.9 L2245.5,762.3 L2241.3,759.7 L2237.0,757.1 L2232.7,754.4 L2228.4,751.8 L2224.2,749.2 L2219.9,746.5 L2215.7,743.9 L2211.4,741.2 L2207.2,738.6 L2202.9,735.9 L2198.7,733.2 L2194.5,730.5 L2190.3,727.9 L2186.1,725.2 L2181.9,722.5 L2177.7,719.8 L2173.5,717.0 L2169.3,714.3 L2165.1,711.6 L2160.9,708.8 L2156.8,706.1 L2152.6,703.3 L2148.5,700.6 L2144.3,697.8 L2140.2,695.0 L2136.1,692.2 L2131.9,689.4 L2127.8,686.6 L2123.7,683.8 L2119.6,680.9 L2115.6,678.1 L2111.5,675.2 L2107.4,672.4 L2103.4,669.5 L2099.3,666.6 L2095.3,663.7 L2091.2,660.8 L2087.2,657.9 L2083.2,654.9 L2079.2,652.0 L2075.2,649.1 L2071.3,646.1 L2067.3,643.1 L2063.3,640.1 L2059.4,637.1 L2055.5,634.1 L2051.5,631.1 L2047.6,628.1 L2043.7,625.0 L2039.8,622.0 L2036.0,618.9 L2032.1,615.8 L2028.3,612.7 L2024.4,609.6 L2020.6,606.5 L2016.8,603.3 L2013.0,600.2 L2009.2,597.0 L2005.4,593.8 L2001.6,590.6 L1997.9,587.4 L1994.1,584.2 L1990.4,580.9 L1986.6,577.7 L1982.9,574.4 L1979.2,571.2 L1975.5,567.9 L1971.8,564.6 L1968.1,561.2 L1964.4,557.9 L1960.7,554.6 L1957.1,551.2 L1953.4,547.9 L1949.7,544.5 L1946.1,541.1 L1942.5,537.7 L1938.8,534.3 L1935.2,530.9 L1931.6,527.5 L1927.9,524.1 L1924.3,520.6 L1920.7,517.2 L1917.1,513.7 L1913.5,510.3 L1909.9,506.8 L1906.3,503.3 L1902.7,499.8 L1899.2,496.3 L1895.6,492.8 L1892.0,489.3 L1888.4,485.8 L1884.9,482.3 L1881.3,478.7 L1877.7,475.2 L1874.2,471.7 L1870.6,468.1 L1867.1,464.6 L1863.5,461.0 L1860.0,457.5 L1856.4,453.9 L1852.9,450.3 L1849.3,446.7 L1845.8,443.2 L1842.2,439.6 L1838.7,436.0 L1835.2,432.4 L1831.6,428.8 L1828.1,425.3 L1824.6,421.7 L1821.1,418.1 L1817.6,414.5 L1814.1,410.9 L1810.6,407.3 L1807.2,403.7 L1803.7,400.1 L1800.3,396.5 L1796.9,392.9 L1793.5,389.2 L1790.1,385.6 L1786.7,382.0 L1783.3,378.3 L1780.0,374.7 L1776.6,371.0 L1773.3,367.4 L1770.0,363.7 L1766.8,360.0 L1763.5,356.3 L1760.3,352.6 L1757.0,348.9 L1753.8,345.2 L1750.7,341.5 L1747.5,337.7 L1744.4,334.0 L1741.3,330.2 L1738.2,326.4 L1735.2,322.6 L1732.1,318.8 L1729.1,315.0 L1726.2,311.2 L1723.2,307.3 L1720.3,303.5 L1717.4,299.6 L1714.6,295.7 L1711.7,291.8 L1708.9,287.9 L1706.2,284.0 L1703.4,280.0 L1700.7,276.0 Z"/>
<path d="M2420,1130 L2437,1106 L2495,1096 L2650,1087 L2875,1080 L2957,1074 L3150,1052 L3300,1046 L3450,1034 L3575,1026 L3595,1017 L3640,1015 L3640,1136 L3600,1137 L3587,1134 L3500,1142 L3275,1159 L3075,1177 L2937,1185 L2850,1190 L2650,1202 L2502,1206 L2450,1230 Z"/>
<path d="M2600,1530 L2642,1495 L2707,1400 L2740,1377 L2825,1311 L2862,1300 L2900,1282 L3012,1252 L3150,1240 L3300,1229 L3380,1221 L3420,1206 L3640,1192 L3640,1307 L3420,1325 L3387,1316 L3300,1321 L3200,1327 L3025,1342 L2950,1362 L2900,1382 L2867,1395 L2775,1465 L2745,1507 L2700,1570 L2655,1605 L2640,1622 L2600,1640 Z"/>
<path d="M2727.2,2487.7 L2726.2,2482.9 L2725.2,2478.0 L2724.2,2473.2 L2723.2,2468.3 L2722.2,2463.4 L2721.1,2458.6 L2720.1,2453.7 L2719.1,2448.8 L2718.0,2444.0 L2717.0,2439.1 L2715.9,2434.2 L2714.9,2429.3 L2713.8,2424.4 L2712.7,2419.6 L2711.7,2414.7 L2710.6,2409.8 L2709.5,2404.9 L2708.4,2400.0 L2707.4,2395.1 L2706.3,2390.2 L2705.2,2385.3 L2704.1,2380.4 L2703.1,2375.5 L2702.0,2370.6 L2700.9,2365.7 L2699.8,2360.8 L2698.8,2355.9 L2697.7,2351.0 L2696.5,2346.1 L2695.3,2341.2 L2694.2,2336.3 L2693.0,2331.4 L2691.9,2326.5 L2690.7,2321.6 L2689.6,2316.8 L2688.5,2311.9 L2687.4,2307.0 L2686.2,2302.1 L2685.1,2297.2 L2684.0,2292.3 L2682.9,2287.4 L2681.9,2282.5 L2680.8,2277.6 L2679.7,2272.7 L2678.7,2267.8 L2677.6,2262.9 L2676.6,2258.1 L2675.6,2253.2 L2674.6,2248.3 L2673.6,2243.4 L2672.6,2238.5 L2671.6,2233.6 L2670.6,2228.7 L2669.7,2223.8 L2668.8,2219.0 L2667.9,2214.1 L2667.0,2209.2 L2666.0,2204.3 L2665.1,2199.4 L2664.2,2194.6 L2663.3,2189.7 L2662.4,2184.8 L2661.6,2180.0 L2660.7,2175.1 L2659.9,2170.2 L2659.1,2165.4 L2658.3,2160.5 L2657.5,2155.7 L2656.8,2150.8 L2656.1,2146.0 L2655.4,2141.1 L2654.7,2136.3 L2654.0,2131.4 L2653.4,2126.6 L2652.8,2121.7 L2652.2,2116.9 L2651.6,2112.0 L2651.0,2107.2 L2650.5,2102.4 L2650.0,2097.5 L2649.5,2092.7 L2649.0,2087.9 L2648.5,2083.1 L2648.1,2078.2 L2647.7,2073.4 L2647.3,2068.6 L2647.0,2063.8 L2646.7,2059.0 L2646.4,2054.2 L2646.1,2049.4 L2645.8,2044.6 L2645.6,2039.8 L2645.5,2035.0 L2645.3,2030.2 L2645.2,2025.4 L2645.1,2020.6 L2645.1,2015.9 L2645.2,2011.1 L2645.3,2006.3 L2645.5,2001.5 L2645.7,1996.8 L2645.9,1992.0 L2646.1,1987.3 L2646.4,1982.5 L2646.7,1977.8 L2647.1,1973.1 L2647.5,1968.3 L2647.9,1963.6 L2648.3,1958.9 L2648.8,1954.2 L2649.4,1949.5 L2649.9,1944.8 L2650.5,1940.1 L2651.2,1935.4 L2651.9,1930.7 L2652.7,1926.0 L2653.5,1921.3 L2654.3,1916.7 L2655.2,1912.0 L2656.1,1907.3 L2657.0,1902.7 L2658.0,1898.0 L2659.0,1893.4 L2660.0,1888.7 L2661.1,1884.1 L2662.3,1879.5 L2663.4,1874.9 L2664.6,1870.3 L2665.9,1865.7 L2667.2,1861.1 L2668.5,1856.5 L2669.8,1851.9 L2671.2,1847.4 L2672.7,1842.8 L2674.1,1838.3 L2675.6,1833.8 L2677.1,1829.2 L2678.7,1824.7 L2680.3,1820.2 L2681.9,1815.8 L2683.6,1811.3 L2685.3,1806.8 L2687.1,1802.4 L2688.9,1798.0 L2690.8,1793.6 L2692.6,1789.2 L2694.5,1784.8 L2696.5,1780.5 L2698.4,1776.1 L2700.4,1771.8 L2702.5,1767.5 L2704.6,1763.2 L2706.7,1758.9 L2708.8,1754.6 L2711.0,1750.4 L2713.2,1746.1 L2715.4,1741.9 L2717.6,1737.7 L2719.9,1733.5 L2722.2,1729.3 L2724.5,1725.1 L2726.8,1721.0 L2729.2,1716.9 L2731.6,1712.8 L2734.1,1708.7 L2736.6,1704.6 L2739.1,1700.6 L2741.6,1696.5 L2744.2,1692.5 L2746.8,1688.6 L2749.4,1684.6 L2752.1,1680.6 L2754.8,1676.7 L2757.6,1672.8 L2760.3,1669.0 L2763.1,1665.1 L2765.9,1661.3 L2768.8,1657.5 L2771.7,1653.7 L2774.6,1649.9 L2777.5,1646.2 L2780.6,1642.5 L2783.6,1638.9 L2786.7,1635.3 L2789.8,1631.6 L2792.9,1628.1 L2796.1,1624.5 L2799.3,1621.0 L2802.5,1617.5 L2805.7,1614.0 L2809.0,1610.5 L2812.3,1607.1 L2815.6,1603.7 L2819.0,1600.3 L2822.4,1596.9 L2825.8,1593.6 L2829.2,1590.3 L2832.7,1587.0 L2836.1,1583.7 L2839.7,1580.5 L2843.2,1577.3 L2846.8,1574.1 L2850.3,1571.0 L2854.0,1567.8 L2857.6,1564.7 L2861.2,1561.6 L2864.9,1558.6 L2868.6,1555.6 L2872.3,1552.5 L2876.0,1549.6 L2879.8,1546.6 L2883.6,1543.7 L2887.4,1540.8 L2891.2,1537.9 L2895.0,1535.1 L2898.9,1532.3 L2902.8,1529.5 L2906.7,1526.8 L2910.6,1524.0 L2914.5,1521.4 L2918.5,1518.7 L2922.5,1516.1 L2926.6,1513.6 L2930.6,1511.1 L2934.6,1508.6 L2938.7,1506.1 L2942.8,1503.7 L2946.8,1501.2 L2950.8,1498.7 L2954.8,1496.2 L2958.9,1493.7 L2962.9,1491.2 L2967.0,1488.8 L2971.1,1486.4 L2975.1,1484.1 L2979.2,1481.8 L2983.4,1479.5 L2987.5,1477.3 L2991.6,1475.1 L2995.8,1472.9 L3000.0,1470.8 L3004.2,1468.7 L3008.4,1466.6 L3012.6,1464.6 L3016.8,1462.6 L3021.0,1460.6 L3025.3,1458.7 L3029.6,1456.9 L3033.8,1455.0 L3038.1,1453.2 L3042.4,1451.5 L3046.8,1449.9 L3051.1,1448.3 L3055.5,1446.7 L3059.9,1445.2 L3064.3,1443.7 L3068.7,1442.2 L3073.1,1440.8 L3077.6,1439.4 L3082.0,1438.1 L3086.5,1436.8 L3091.0,1435.5 L3095.5,1434.2 L3100.0,1433.0 L3104.5,1431.8 L3109.1,1430.7 L3113.6,1429.5 L3118.2,1428.4 L3122.8,1427.4 L3127.4,1426.3 L3132.0,1425.3 L3136.6,1424.3 L3141.2,1423.3 L3145.9,1422.4 L3150.5,1421.4 L3155.2,1420.5 L3159.9,1419.7 L3164.6,1418.8 L3169.3,1418.0 L3174.0,1417.2 L3178.7,1416.4 L3183.5,1415.6 L3188.2,1414.9 L3193.0,1414.2 L3197.7,1413.5 L3202.5,1412.9 L3207.3,1412.2 L3212.1,1411.6 L3216.9,1411.0 L3221.8,1410.4 L3226.6,1409.9 L3231.5,1409.3 L3236.3,1408.8 L3241.2,1408.3 L3246.1,1407.8 L3251.0,1407.3 L3255.9,1406.9 L3260.8,1406.4 L3265.7,1406.0 L3270.6,1405.6 L3275.5,1405.2 L3280.5,1404.8 L3285.4,1404.4 L3290.3,1404.0 L3295.3,1403.6 L3300.3,1403.3 L3305.2,1402.9 L3310.2,1402.6 L3315.2,1402.2 L3320.2,1401.9 L3325.2,1401.6 L3330.2,1401.3 L3335.2,1401.0 L3340.2,1400.7 L3345.3,1400.4 L3350.3,1400.1 L3355.3,1399.9 L3360.4,1399.6 L3365.4,1399.3 L3370.5,1399.1 L3375.5,1398.8 L3380.6,1398.6 L3385.6,1398.4 L3390.7,1398.1 L3395.8,1397.9 L3400.8,1397.7 L3405.9,1397.4 L3411.0,1397.2 L3416.1,1397.0 L3421.1,1396.7 L3426.2,1396.5 L3431.3,1396.3 L3436.4,1396.0 L3441.5,1395.8 L3446.6,1395.6 L3451.7,1395.3 L3456.8,1395.1 L3461.9,1394.8 L3467.0,1394.6 L3472.1,1394.3 L3477.2,1394.0 L3482.3,1393.8 L3487.4,1393.6 L3492.5,1393.4 L3497.6,1393.1 L3502.7,1392.9 L3507.8,1392.6 L3512.9,1392.3 L3518.0,1392.1 L3523.1,1391.8 L3528.2,1391.5 L3533.3,1391.1 L3538.4,1390.8 L3543.5,1390.5 L3548.6,1390.1 L3553.7,1389.7 L3558.8,1389.4 L3563.9,1389.0 L3568.9,1388.5 L3574.0,1388.1 L3579.1,1387.7 L3584.2,1387.2 L3589.3,1386.7 L3594.3,1386.2 L3599.4,1385.7 L3604.5,1385.1 L3609.5,1384.5 L3614.6,1383.9 L3619.6,1383.3 L3624.7,1382.7 L3629.7,1382.0 L3634.8,1381.3 L3639.8,1380.6 L3644.8,1379.9 L3649.9,1379.1 L3640.1,1314.9 L3635.5,1315.5 L3630.7,1316.2 L3626.0,1316.8 L3621.3,1317.5 L3616.6,1318.0 L3611.8,1318.6 L3607.0,1319.2 L3602.3,1319.7 L3597.5,1320.2 L3592.7,1320.7 L3587.9,1321.2 L3583.0,1321.6 L3578.2,1322.1 L3573.4,1322.5 L3568.5,1322.9 L3563.6,1323.3 L3558.8,1323.7 L3553.9,1324.0 L3549.0,1324.4 L3544.1,1324.7 L3539.2,1325.0 L3534.3,1325.3 L3529.3,1325.6 L3524.4,1325.9 L3519.5,1326.1 L3514.5,1326.4 L3509.6,1326.6 L3504.6,1326.9 L3499.6,1327.1 L3494.6,1327.3 L3489.6,1327.5 L3484.6,1327.7 L3479.6,1327.9 L3474.6,1328.1 L3469.6,1328.2 L3464.6,1328.3 L3459.5,1328.4 L3454.5,1328.5 L3449.5,1328.6 L3444.4,1328.7 L3439.4,1328.8 L3434.3,1328.9 L3429.2,1329.0 L3424.2,1329.0 L3419.1,1329.1 L3414.0,1329.2 L3408.9,1329.3 L3403.8,1329.4 L3398.7,1329.4 L3393.6,1329.5 L3388.5,1329.6 L3383.4,1329.7 L3378.3,1329.8 L3373.2,1329.9 L3368.1,1330.0 L3363.0,1330.1 L3357.8,1330.2 L3352.7,1330.3 L3347.6,1330.4 L3342.4,1330.5 L3337.3,1330.7 L3332.2,1330.8 L3327.0,1331.0 L3321.9,1331.1 L3316.8,1331.3 L3311.6,1331.5 L3306.5,1331.7 L3301.3,1331.9 L3296.2,1332.1 L3291.0,1332.3 L3285.9,1332.6 L3280.7,1332.8 L3275.6,1333.1 L3270.4,1333.4 L3265.2,1333.7 L3260.1,1334.1 L3254.9,1334.5 L3249.8,1334.8 L3244.6,1335.3 L3239.5,1335.7 L3234.3,1336.1 L3229.2,1336.6 L3224.0,1337.1 L3218.9,1337.6 L3213.7,1338.1 L3208.6,1338.7 L3203.5,1339.2 L3198.3,1339.8 L3193.2,1340.5 L3188.0,1341.1 L3182.9,1341.8 L3177.8,1342.5 L3172.6,1343.2 L3167.5,1343.9 L3162.4,1344.7 L3157.3,1345.5 L3152.1,1346.3 L3147.0,1347.2 L3141.9,1348.1 L3136.8,1349.0 L3131.7,1349.9 L3126.6,1350.9 L3121.5,1351.9 L3116.4,1353.0 L3111.3,1354.1 L3106.2,1355.2 L3101.2,1356.4 L3096.1,1357.6 L3091.0,1358.9 L3086.0,1360.2 L3080.9,1361.5 L3075.9,1362.9 L3070.9,1364.3 L3065.8,1365.7 L3060.8,1367.2 L3055.8,1368.7 L3050.8,1370.3 L3045.8,1371.9 L3040.8,1373.5 L3035.8,1375.2 L3030.9,1376.9 L3025.9,1378.7 L3021.0,1380.5 L3016.0,1382.4 L3011.1,1384.3 L3006.1,1386.1 L3001.2,1388.0 L2996.3,1390.0 L2991.4,1392.0 L2986.5,1394.0 L2981.6,1396.1 L2976.7,1398.2 L2971.9,1400.4 L2967.1,1402.6 L2962.3,1404.9 L2957.5,1407.2 L2952.7,1409.5 L2948.0,1411.9 L2943.2,1414.3 L2938.5,1416.7 L2933.8,1419.2 L2929.1,1421.7 L2924.4,1424.3 L2919.8,1426.9 L2915.2,1429.5 L2910.6,1432.1 L2906.0,1434.8 L2901.5,1437.7 L2897.0,1440.6 L2892.6,1443.6 L2888.2,1446.6 L2883.9,1449.7 L2879.5,1452.7 L2875.2,1455.8 L2870.9,1459.0 L2866.6,1462.1 L2862.3,1465.3 L2858.0,1468.5 L2853.8,1471.7 L2849.6,1474.9 L2845.4,1478.2 L2841.2,1481.5 L2837.1,1484.8 L2832.9,1488.2 L2828.8,1491.6 L2824.8,1495.0 L2820.7,1498.5 L2816.7,1502.0 L2812.7,1505.5 L2808.7,1509.0 L2804.8,1512.6 L2800.9,1516.2 L2797.0,1519.9 L2793.1,1523.6 L2789.3,1527.3 L2785.5,1531.0 L2781.7,1534.8 L2778.0,1538.6 L2774.3,1542.4 L2770.6,1546.2 L2767.0,1550.1 L2763.3,1554.0 L2759.7,1558.0 L2756.2,1561.9 L2752.7,1565.9 L2749.2,1569.9 L2745.7,1574.0 L2742.3,1578.0 L2738.9,1582.1 L2735.5,1586.3 L2732.2,1590.4 L2728.8,1594.6 L2725.6,1598.8 L2722.3,1603.1 L2719.1,1607.3 L2715.9,1611.6 L2712.8,1615.8 L2709.7,1620.2 L2706.6,1624.5 L2703.5,1628.9 L2700.5,1633.2 L2697.5,1637.6 L2694.6,1642.1 L2691.7,1646.5 L2688.8,1651.0 L2686.0,1655.5 L2683.2,1660.0 L2680.4,1664.5 L2677.7,1669.1 L2675.0,1673.7 L2672.3,1678.3 L2669.7,1682.9 L2667.1,1687.5 L2664.6,1692.2 L2662.1,1696.8 L2659.6,1701.5 L2657.2,1706.3 L2654.8,1711.0 L2652.5,1715.7 L2650.2,1720.5 L2648.0,1725.3 L2645.8,1730.2 L2643.7,1735.0 L2641.5,1739.8 L2639.5,1744.7 L2637.4,1749.6 L2635.4,1754.5 L2633.5,1759.4 L2631.5,1764.3 L2629.6,1769.2 L2627.8,1774.2 L2626.0,1779.1 L2624.2,1784.1 L2622.5,1789.1 L2620.8,1794.1 L2619.1,1799.1 L2617.4,1804.1 L2615.8,1809.1 L2614.3,1814.1 L2612.7,1819.2 L2611.3,1824.2 L2609.8,1829.3 L2608.4,1834.3 L2607.0,1839.4 L2605.7,1844.5 L2604.4,1849.6 L2603.2,1854.7 L2601.9,1859.8 L2600.8,1864.9 L2599.6,1870.0 L2598.5,1875.2 L2597.5,1880.3 L2596.4,1885.4 L2595.5,1890.6 L2594.5,1895.8 L2593.6,1900.9 L2592.7,1906.1 L2591.9,1911.2 L2591.1,1916.4 L2590.4,1921.6 L2589.7,1926.8 L2589.0,1932.0 L2588.4,1937.1 L2587.8,1942.3 L2587.2,1947.5 L2586.6,1952.7 L2586.1,1957.9 L2585.7,1963.1 L2585.3,1968.3 L2584.9,1973.4 L2584.5,1978.6 L2584.2,1983.8 L2584.0,1989.0 L2583.7,1994.2 L2583.5,1999.4 L2583.4,2004.5 L2583.2,2009.7 L2583.1,2014.9 L2583.0,2020.1 L2582.9,2025.3 L2582.8,2030.5 L2582.7,2035.6 L2582.6,2040.8 L2582.6,2046.0 L2582.6,2051.2 L2582.7,2056.4 L2582.8,2061.5 L2582.9,2066.7 L2583.0,2071.9 L2583.2,2077.1 L2583.3,2082.3 L2583.6,2087.4 L2583.8,2092.6 L2584.1,2097.8 L2584.4,2103.0 L2584.7,2108.1 L2585.1,2113.3 L2585.5,2118.5 L2585.9,2123.6 L2586.4,2128.8 L2586.8,2134.0 L2587.3,2139.1 L2587.8,2144.3 L2588.4,2149.4 L2588.9,2154.6 L2589.5,2159.7 L2590.1,2164.9 L2590.7,2170.0 L2591.4,2175.2 L2592.1,2180.3 L2592.7,2185.5 L2593.4,2190.6 L2594.1,2195.7 L2594.9,2200.8 L2595.6,2206.0 L2596.4,2211.1 L2597.2,2216.2 L2598.0,2221.3 L2598.9,2226.4 L2599.8,2231.5 L2600.7,2236.6 L2601.6,2241.7 L2602.5,2246.8 L2603.4,2251.8 L2604.4,2256.9 L2605.3,2262.0 L2606.3,2267.1 L2607.3,2272.1 L2608.3,2277.2 L2609.3,2282.2 L2610.3,2287.3 L2611.4,2292.3 L2612.4,2297.3 L2613.4,2302.4 L2614.5,2307.4 L2615.5,2312.4 L2616.6,2317.4 L2617.7,2322.4 L2618.8,2327.4 L2619.8,2332.4 L2620.9,2337.4 L2622.0,2342.4 L2623.1,2347.4 L2624.2,2352.3 L2625.3,2357.3 L2626.4,2362.3 L2627.5,2367.2 L2628.7,2372.1 L2629.9,2377.1 L2631.2,2382.0 L2632.4,2386.9 L2633.6,2391.8 L2634.8,2396.7 L2636.0,2401.5 L2637.3,2406.4 L2638.5,2411.3 L2639.7,2416.1 L2640.9,2421.0 L2642.1,2425.8 L2643.3,2430.7 L2644.5,2435.5 L2645.7,2440.3 L2646.9,2445.1 L2648.1,2449.9 L2649.3,2454.7 L2650.5,2459.5 L2651.7,2464.3 L2652.8,2469.1 L2654.0,2473.9 L2655.1,2478.6 L2656.3,2483.4 L2657.4,2488.1 L2658.6,2492.8 L2659.7,2497.6 L2660.8,2502.3 Z"/>
<path d="M2420.0,1950.0 L2445.0,1988.0 L2445.0,1994.1 L2445.0,2000.2 L2445.2,2006.3 L2445.4,2012.3 L2445.6,2018.4 L2445.9,2024.4 L2446.3,2030.5 L2446.8,2036.5 L2447.3,2042.6 L2447.8,2048.6 L2448.4,2054.6 L2449.1,2060.6 L2449.8,2066.6 L2450.6,2072.6 L2451.4,2078.6 L2452.2,2084.6 L2453.1,2090.6 L2454.0,2096.6 L2455.0,2102.6 L2456.0,2108.5 L2457.0,2114.5 L2458.1,2120.5 L2459.2,2126.4 L2460.3,2132.4 L2461.4,2138.3 L2462.6,2144.3 L2463.8,2150.2 L2465.0,2156.2 L2466.2,2162.1 L2467.4,2168.1 L2468.7,2174.0 L2469.9,2180.0 L2471.2,2185.9 L2472.5,2191.9 L2473.8,2197.8 L2475.0,2203.8 L2476.3,2209.7 L2477.6,2215.7 L2478.9,2221.6 L2480.2,2227.5 L2481.5,2233.5 L2482.8,2239.4 L2484.1,2245.4 L2485.4,2251.3 L2486.7,2257.3 L2488.0,2263.2 L2489.3,2269.2 L2490.6,2275.1 L2491.9,2281.1 L2493.2,2287.0 L2494.4,2293.0 L2495.7,2298.9 L2497.0,2304.9 L2498.3,2310.8 L2499.6,2316.8 L2500.8,2322.7 L2502.1,2328.7 L2503.3,2334.6 L2504.6,2340.6 L2505.8,2346.5 L2507.0,2352.5 L2508.3,2358.5 L2509.5,2364.4 L2510.7,2370.4 L2511.9,2376.4 L2513.1,2382.3 L2514.2,2388.3 L2515.4,2394.3 L2516.5,2400.2 L2517.7,2406.2 L2518.8,2412.2 L2519.9,2418.1 L2521.0,2424.1 L2522.1,2430.1 L2523.2,2436.1 L2524.2,2442.1 L2525.2,2448.0 L2526.3,2454.0 L2527.3,2460.0 L2528.2,2466.0 L2529.2,2472.0 L2530.2,2478.0 L2531.1,2484.0 L2532.0,2490.0 L2659.0,2490.0 L2628.0,2360.0 L2634.9,2348.3 L2640.6,2337.5 L2645.1,2327.4 L2648.4,2318.2 L2650.6,2309.7 L2651.9,2301.8 L2652.2,2294.6 L2651.7,2288.0 L2650.4,2281.9 L2648.4,2276.3 L2645.7,2271.1 L2642.5,2266.3 L2638.8,2261.9 L2634.6,2257.8 L2630.1,2254.0 L2625.3,2250.3 L2620.2,2246.8 L2615.1,2243.4 L2609.8,2240.1 L2604.5,2236.8 L2599.3,2233.5 L2594.2,2230.1 L2589.4,2226.6 L2584.8,2222.9 L2580.5,2219.0 L2576.7,2214.8 L2573.3,2210.3 L2570.5,2205.5 L2568.2,2200.4 L2566.2,2195.0 L2564.7,2189.3 L2563.4,2183.5 L2562.3,2177.5 L2561.4,2171.4 L2560.6,2165.1 L2559.8,2158.9 L2559.0,2152.6 L2558.1,2146.4 L2557.1,2140.2 L2555.9,2134.0 L2554.6,2128.0 L2553.3,2121.9 L2552.0,2115.9 L2550.6,2109.9 L2549.2,2103.9 L2547.9,2097.9 L2546.6,2092.0 L2545.5,2086.0 L2544.4,2080.0 L2543.5,2074.0 L2542.7,2068.0 L2542.1,2062.0 L2541.6,2055.9 L2541.1,2049.9 L2540.8,2043.8 L2540.4,2037.8 L2540.1,2031.7 L2539.9,2025.6 L2539.6,2019.6 L2539.3,2013.5 L2538.9,2007.4 L2538.5,2001.4 L2538.0,1995.3 L2537.4,1989.3 L2536.7,1983.3 L2535.8,1977.3 L2534.7,1971.3 L2533.5,1965.4 L2532.1,1959.4 L2530.4,1953.5 L2528.6,1947.7 L2526.4,1941.8 L2524.0,1936.0 L2524.1,1928.8 L2523.3,1922.1 L2521.6,1915.7 L2519.1,1909.8 L2515.6,1904.2 L2511.3,1899.1 L2506.1,1894.3 L2500.0,1890.0 Z"/>
<path d="M2170.0,2080.0 L2209.0,2103.0 L2213.4,2107.4 L2217.8,2111.8 L2222.1,2116.2 L2226.4,2120.7 L2230.7,2125.2 L2234.9,2129.8 L2239.0,2134.4 L2243.1,2139.0 L2247.2,2143.7 L2251.2,2148.4 L2255.1,2153.1 L2259.0,2157.9 L2262.8,2162.8 L2266.6,2167.6 L2270.2,2172.5 L2273.8,2177.5 L2277.4,2182.5 L2280.9,2187.5 L2284.3,2192.6 L2287.6,2197.7 L2290.8,2202.9 L2294.0,2208.1 L2297.1,2213.3 L2300.0,2218.6 L2303.0,2224.0 L2305.8,2229.3 L2308.5,2234.8 L2311.1,2240.3 L2313.7,2245.8 L2316.2,2251.3 L2318.6,2256.9 L2320.9,2262.6 L2323.1,2268.3 L2325.3,2274.0 L2327.4,2279.7 L2329.4,2285.5 L2331.4,2291.3 L2333.3,2297.1 L2335.1,2303.0 L2336.9,2308.9 L2338.6,2314.8 L2340.2,2320.7 L2341.8,2326.7 L2343.4,2332.7 L2344.9,2338.7 L2346.4,2344.7 L2347.8,2350.7 L2349.1,2356.7 L2350.5,2362.8 L2351.8,2368.9 L2353.0,2374.9 L2354.2,2381.0 L2355.4,2387.1 L2356.6,2393.2 L2357.7,2399.3 L2358.8,2405.4 L2359.9,2411.5 L2361.0,2417.6 L2362.0,2423.7 L2363.1,2429.7 L2364.1,2435.8 L2365.1,2441.9 L2366.1,2448.0 L2367.1,2454.0 L2368.1,2460.0 L2369.0,2466.1 L2370.0,2472.1 L2371.0,2478.1 L2372.0,2484.0 L2373.0,2490.0 L2485.0,2490.0 L2483.2,2484.3 L2481.4,2478.6 L2479.7,2472.8 L2478.0,2467.0 L2476.3,2461.2 L2474.8,2455.4 L2473.2,2449.5 L2471.7,2443.6 L2470.2,2437.7 L2468.8,2431.7 L2467.4,2425.8 L2466.0,2419.8 L2464.7,2413.8 L2463.4,2407.8 L2462.1,2401.8 L2460.8,2395.7 L2459.5,2389.7 L2458.2,2383.6 L2457.0,2377.5 L2455.7,2371.5 L2454.5,2365.4 L2453.2,2359.3 L2452.0,2353.2 L2450.7,2347.1 L2449.5,2341.0 L2448.2,2334.9 L2446.9,2328.9 L2445.6,2322.8 L2444.3,2316.7 L2442.9,2310.6 L2441.6,2304.6 L2440.2,2298.5 L2438.8,2292.5 L2437.3,2286.5 L2435.8,2280.5 L2434.3,2274.5 L2432.7,2268.5 L2431.1,2262.6 L2429.4,2256.6 L2427.7,2250.7 L2425.9,2244.9 L2424.1,2239.0 L2422.2,2233.2 L2420.2,2227.4 L2418.2,2221.6 L2416.1,2215.8 L2414.0,2210.1 L2411.8,2204.4 L2409.5,2198.8 L2407.1,2193.2 L2404.6,2187.6 L2402.1,2182.1 L2399.5,2176.6 L2396.7,2171.2 L2393.9,2165.8 L2391.0,2160.4 L2388.0,2155.1 L2384.9,2149.9 L2381.7,2144.7 L2378.4,2139.5 L2375.0,2134.4 L2371.4,2129.4 L2367.8,2124.4 L2364.0,2119.4 L2360.1,2114.6 L2356.1,2109.8 L2352.0,2105.0 L2347.6,2099.7 L2343.1,2094.4 L2338.6,2089.2 L2334.0,2084.0 L2329.3,2078.9 L2324.6,2073.8 L2319.8,2068.8 L2315.0,2063.9 L2310.1,2059.0 L2305.2,2054.2 L2300.2,2049.4 L2295.1,2044.7 L2290.0,2040.0 Z"/>
<path d="M1100,1224 L1132,1222 L1289,1208 L1513,1194 L1640,1182 L1682,1185 L1740,1200 L1700,1290 L1645,1292 L1513,1302 L1289,1316 L1132,1330 L1100,1333 Z"/>
<path d="M1100.0,1382.0 L1106.0,1381.6 L1112.0,1381.3 L1118.0,1380.9 L1124.0,1380.5 L1130.1,1380.1 L1136.1,1379.6 L1142.2,1379.2 L1148.2,1378.8 L1154.3,1378.3 L1160.4,1377.9 L1166.5,1377.5 L1172.6,1377.0 L1178.7,1376.6 L1184.8,1376.2 L1190.9,1375.7 L1197.0,1375.3 L1203.1,1374.9 L1209.3,1374.6 L1215.4,1374.2 L1221.5,1373.8 L1227.7,1373.5 L1233.8,1373.2 L1239.9,1373.0 L1246.1,1372.7 L1252.2,1372.5 L1258.4,1372.3 L1264.5,1372.2 L1270.7,1372.0 L1276.8,1372.0 L1282.9,1371.9 L1289.1,1371.9 L1295.2,1372.0 L1301.3,1372.1 L1307.4,1372.2 L1313.5,1372.4 L1319.6,1372.6 L1325.7,1372.9 L1331.8,1373.3 L1337.9,1373.7 L1344.0,1374.1 L1350.1,1374.7 L1356.1,1375.3 L1362.2,1375.9 L1368.2,1376.7 L1374.2,1377.5 L1380.3,1378.3 L1386.3,1379.3 L1392.3,1380.3 L1398.3,1381.4 L1404.2,1382.5 L1410.2,1383.8 L1416.1,1385.0 L1422.0,1386.4 L1427.9,1387.9 L1433.8,1389.4 L1439.7,1390.9 L1445.5,1392.6 L1451.4,1394.3 L1457.2,1396.1 L1463.0,1397.9 L1468.8,1399.9 L1474.5,1401.9 L1480.2,1403.9 L1485.9,1406.0 L1491.6,1408.2 L1497.3,1410.5 L1502.9,1412.8 L1508.5,1415.2 L1514.1,1417.7 L1519.6,1420.2 L1525.1,1422.8 L1530.6,1425.5 L1536.1,1428.2 L1541.5,1431.0 L1546.9,1433.8 L1552.3,1436.8 L1557.7,1439.7 L1563.0,1442.8 L1568.2,1445.9 L1573.5,1449.1 L1578.7,1452.3 L1583.9,1455.6 L1589.0,1459.0 L1640.0,1470.0 L1640.0,1580.0 L1633.6,1581.6 L1627.3,1582.7 L1621.1,1583.3 L1615.1,1583.5 L1609.1,1583.2 L1603.2,1582.5 L1597.4,1581.5 L1591.7,1580.1 L1586.0,1578.5 L1580.4,1576.6 L1574.8,1574.5 L1569.3,1572.2 L1563.9,1569.7 L1558.4,1567.1 L1553.0,1564.3 L1547.7,1561.5 L1542.3,1558.5 L1537.1,1555.5 L1531.8,1552.4 L1526.6,1549.3 L1521.4,1546.1 L1516.2,1542.9 L1511.0,1539.7 L1505.8,1536.6 L1500.6,1533.5 L1495.3,1530.6 L1490.0,1527.7 L1484.6,1525.1 L1479.1,1522.5 L1473.6,1520.2 L1468.0,1518.0 L1462.3,1516.0 L1456.6,1514.1 L1450.8,1512.4 L1445.0,1510.8 L1439.1,1509.2 L1433.2,1507.8 L1427.2,1506.5 L1421.3,1505.3 L1415.2,1504.2 L1409.2,1503.1 L1403.1,1502.1 L1397.0,1501.1 L1390.9,1500.2 L1384.8,1499.3 L1378.7,1498.4 L1372.6,1497.5 L1366.6,1496.7 L1360.5,1495.8 L1354.4,1495.0 L1348.3,1494.2 L1342.3,1493.4 L1336.2,1492.7 L1330.1,1492.1 L1324.1,1491.5 L1318.0,1491.0 L1312.0,1490.6 L1305.9,1490.3 L1299.9,1490.2 L1293.8,1490.1 L1287.8,1490.1 L1281.7,1490.2 L1275.7,1490.4 L1269.6,1490.7 L1263.6,1491.1 L1257.5,1491.5 L1251.5,1492.0 L1245.4,1492.6 L1239.4,1493.2 L1233.3,1493.9 L1227.3,1494.6 L1221.2,1495.4 L1215.2,1496.2 L1209.1,1497.0 L1203.1,1497.8 L1197.0,1498.6 L1191.0,1499.5 L1184.9,1500.3 L1178.9,1501.2 L1172.8,1502.0 L1166.8,1502.8 L1160.7,1503.6 L1154.7,1504.4 L1148.6,1505.1 L1142.5,1505.8 L1136.5,1506.5 L1130.4,1507.1 L1124.3,1507.6 L1118.2,1508.1 L1112.2,1508.4 L1106.1,1508.8 L1100.0,1509.0 Z"/>
<ellipse cx="2112" cy="1550" rx="530" ry="560"/>
</g>
<g fill="#c6c6c6">
<path d="M1397.2,296.5 L1398.4,301.4 L1399.6,306.4 L1400.8,311.3 L1402.0,316.2 L1403.3,321.1 L1404.5,326.1 L1405.8,331.0 L1407.1,335.8 L1408.4,340.7 L1409.7,345.6 L1411.0,350.5 L1412.3,355.3 L1413.6,360.2 L1414.9,365.0 L1416.2,369.9 L1417.5,374.7 L1418.8,379.5 L1420.1,384.3 L1421.4,389.1 L1422.6,393.9 L1423.9,398.7 L1425.1,403.5 L1426.3,408.3 L1427.5,413.1 L1428.7,417.9 L1429.9,422.7 L1431.0,427.4 L1432.2,432.2 L1433.2,436.9 L1434.3,441.7 L1435.3,446.5 L1436.3,451.2 L1437.3,456.0 L1438.3,460.7 L1439.2,465.5 L1440.1,470.3 L1440.9,475.1 L1441.7,479.8 L1442.5,484.6 L1443.3,489.4 L1444.0,494.2 L1444.7,499.0 L1445.4,503.8 L1446.0,508.6 L1446.6,513.4 L1447.2,518.1 L1447.7,522.9 L1448.2,527.8 L1448.7,532.6 L1449.1,537.4 L1449.5,542.2 L1449.9,547.0 L1450.2,551.8 L1450.5,556.6 L1450.8,561.4 L1451.0,566.2 L1451.2,571.0 L1451.3,575.8 L1451.4,580.7 L1451.5,585.5 L1451.5,590.3 L1451.5,595.1 L1451.5,599.9 L1451.4,604.7 L1451.3,609.6 L1451.1,614.4 L1450.9,619.2 L1450.7,624.0 L1450.4,628.9 L1450.1,633.7 L1449.7,638.5 L1449.3,643.3 L1448.9,648.2 L1448.4,653.0 L1447.9,657.8 L1447.4,662.6 L1446.8,667.4 L1446.2,672.2 L1445.6,677.0 L1444.9,681.8 L1444.1,686.6 L1443.4,691.4 L1442.6,696.2 L1441.7,700.9 L1440.9,705.7 L1439.9,710.4 L1439.0,715.2 L1438.0,719.9 L1437.0,724.7 L1435.9,729.4 L1434.8,734.1 L1433.7,738.8 L1432.5,743.5 L1431.3,748.2 L1430.0,752.9 L1428.8,757.6 L1427.4,762.2 L1426.1,766.9 L1424.7,771.5 L1423.3,776.1 L1421.8,780.7 L1420.3,785.3 L1418.7,789.9 L1417.2,794.4 L1415.6,799.0 L1413.9,803.5 L1412.2,808.0 L1410.5,812.6 L1408.7,817.0 L1407.0,821.5 L1405.1,826.0 L1403.3,830.4 L1401.4,834.8 L1399.4,839.2 L1397.5,843.6 L1395.5,848.0 L1393.4,852.3 L1391.3,856.7 L1389.2,861.0 L1387.1,865.3 L1384.9,869.5 L1382.7,873.8 L1380.4,878.0 L1378.1,882.2 L1375.8,886.4 L1373.4,890.6 L1371.1,894.8 L1368.6,898.9 L1366.2,903.0 L1363.7,907.1 L1361.2,911.2 L1358.6,915.2 L1356.0,919.3 L1353.4,923.3 L1350.7,927.2 L1348.0,931.2 L1345.3,935.1 L1342.6,939.1 L1339.8,943.0 L1336.9,946.8 L1334.1,950.7 L1331.2,954.5 L1328.3,958.3 L1325.4,962.1 L1322.4,965.8 L1319.4,969.5 L1316.3,973.2 L1313.3,976.9 L1310.2,980.5 L1307.0,984.2 L1303.9,987.7 L1300.7,991.3 L1297.4,994.9 L1294.2,998.4 L1290.9,1001.8 L1287.6,1005.3 L1284.3,1008.7 L1280.9,1012.1 L1277.5,1015.5 L1274.1,1018.9 L1270.6,1022.2 L1267.1,1025.5 L1263.6,1028.7 L1260.1,1032.0 L1256.5,1035.2 L1252.9,1038.3 L1249.3,1041.5 L1245.6,1044.6 L1241.9,1047.7 L1238.2,1050.7 L1234.5,1053.7 L1230.7,1056.8 L1226.9,1059.7 L1223.0,1062.7 L1219.2,1065.7 L1215.3,1068.6 L1211.3,1071.5 L1207.4,1074.4 L1203.4,1077.3 L1199.4,1080.2 L1195.4,1083.0 L1191.3,1085.9 L1187.3,1088.7 L1183.2,1091.5 L1179.1,1094.3 L1174.9,1097.2 L1170.8,1100.0 L1166.6,1102.8 L1162.5,1105.6 L1158.3,1108.4 L1154.1,1111.2 L1149.9,1114.0 L1145.7,1116.8 L1141.5,1119.6 L1137.3,1122.4 L1133.0,1125.2 L1128.8,1128.0 L1124.6,1130.9 L1120.3,1133.7 L1116.1,1136.6 L1111.9,1139.4 L1107.7,1142.3 L1103.4,1145.2 L1099.2,1148.1 L1095.0,1151.0 L1090.8,1154.0 L1086.6,1156.9 L1082.4,1159.9 L1078.3,1162.9 L1111.7,1209.1 L1115.7,1206.2 L1119.6,1203.4 L1123.6,1200.6 L1127.6,1197.8 L1131.7,1195.0 L1135.7,1192.2 L1139.8,1189.4 L1143.9,1186.6 L1148.0,1183.8 L1152.2,1181.0 L1156.3,1178.2 L1160.5,1175.4 L1164.7,1172.6 L1168.9,1169.8 L1173.1,1167.0 L1177.3,1164.2 L1181.5,1161.4 L1185.8,1158.6 L1190.0,1155.8 L1194.2,1152.9 L1198.5,1150.0 L1202.7,1147.2 L1207.0,1144.3 L1211.3,1141.4 L1215.5,1138.5 L1219.8,1135.5 L1224.0,1132.6 L1228.3,1129.6 L1232.5,1126.6 L1236.7,1123.5 L1241.0,1120.5 L1245.2,1117.4 L1249.4,1114.3 L1253.6,1111.1 L1257.7,1107.9 L1261.9,1104.7 L1266.0,1101.5 L1270.1,1098.2 L1274.2,1094.9 L1278.3,1091.5 L1282.4,1088.1 L1286.4,1084.7 L1290.4,1081.3 L1294.4,1077.8 L1298.3,1074.2 L1302.2,1070.7 L1306.1,1067.1 L1309.9,1063.5 L1313.7,1059.8 L1317.5,1056.1 L1321.2,1052.4 L1324.9,1048.7 L1328.6,1044.9 L1332.2,1041.1 L1335.9,1037.3 L1339.4,1033.4 L1343.0,1029.5 L1346.5,1025.6 L1350.0,1021.6 L1353.4,1017.7 L1356.8,1013.6 L1360.2,1009.6 L1363.5,1005.5 L1366.8,1001.5 L1370.1,997.3 L1373.4,993.2 L1376.6,989.0 L1379.7,984.8 L1382.9,980.6 L1386.0,976.3 L1389.0,972.1 L1392.1,967.8 L1395.1,963.4 L1398.0,959.1 L1400.9,954.7 L1403.8,950.3 L1406.7,945.9 L1409.5,941.4 L1412.2,937.0 L1415.0,932.5 L1417.7,927.9 L1420.3,923.4 L1423.0,918.8 L1425.6,914.2 L1428.1,909.6 L1430.6,905.0 L1433.1,900.4 L1435.5,895.7 L1437.9,891.0 L1440.3,886.3 L1442.6,881.5 L1444.9,876.8 L1447.1,872.0 L1449.3,867.2 L1451.5,862.4 L1453.6,857.5 L1455.7,852.7 L1457.8,847.8 L1459.8,842.9 L1461.7,838.0 L1463.7,833.1 L1465.6,828.2 L1467.4,823.2 L1469.2,818.2 L1471.0,813.3 L1472.7,808.3 L1474.4,803.3 L1476.0,798.2 L1477.6,793.2 L1479.2,788.1 L1480.7,783.1 L1482.2,778.0 L1483.7,772.9 L1485.1,767.8 L1486.4,762.7 L1487.7,757.6 L1489.0,752.4 L1490.3,747.3 L1491.5,742.1 L1492.6,737.0 L1493.8,731.8 L1494.8,726.6 L1495.9,721.4 L1496.9,716.2 L1497.8,711.0 L1498.7,705.8 L1499.6,700.6 L1500.5,695.4 L1501.3,690.1 L1502.0,684.9 L1502.7,679.7 L1503.4,674.4 L1504.0,669.2 L1504.6,663.9 L1505.2,658.7 L1505.7,653.4 L1506.1,648.1 L1506.6,642.9 L1506.9,637.6 L1507.3,632.3 L1507.6,627.1 L1507.8,621.8 L1508.1,616.5 L1508.2,611.2 L1508.4,606.0 L1508.5,600.7 L1508.5,595.4 L1508.5,590.2 L1508.5,584.9 L1508.4,579.6 L1508.3,574.4 L1508.1,569.1 L1508.0,563.9 L1507.7,558.6 L1507.4,553.4 L1507.1,548.1 L1506.8,542.9 L1506.4,537.7 L1505.9,532.4 L1505.5,527.2 L1505.0,522.0 L1504.4,516.8 L1503.8,511.6 L1503.2,506.4 L1502.6,501.3 L1501.9,496.1 L1501.2,490.9 L1500.4,485.7 L1499.6,480.6 L1498.8,475.4 L1497.9,470.3 L1497.1,465.2 L1496.1,460.0 L1495.2,454.9 L1494.2,449.8 L1493.2,444.7 L1492.1,439.6 L1491.1,434.5 L1490.0,429.4 L1488.8,424.4 L1487.7,419.3 L1486.5,414.3 L1485.3,409.3 L1484.1,404.3 L1482.8,399.3 L1481.6,394.3 L1480.3,389.3 L1479.0,384.4 L1477.8,379.5 L1476.5,374.5 L1475.2,369.6 L1473.8,364.8 L1472.5,359.9 L1471.2,355.0 L1469.9,350.2 L1468.6,345.3 L1467.3,340.5 L1466.0,335.7 L1464.7,330.9 L1463.5,326.1 L1462.2,321.3 L1461.0,316.6 L1459.7,311.8 L1458.5,307.1 L1457.3,302.3 L1456.1,297.6 L1455.0,292.9 L1453.9,288.2 L1452.7,283.5 Z"/>
<path d="M1472.3,297.7 L1474.2,302.8 L1476.2,307.9 L1478.3,313.0 L1480.5,317.9 L1482.8,322.8 L1485.1,327.6 L1487.6,332.4 L1490.1,337.1 L1492.7,341.8 L1495.3,346.4 L1498.0,350.9 L1500.7,355.5 L1503.5,359.9 L1506.3,364.3 L1509.1,368.7 L1512.0,373.1 L1514.9,377.4 L1517.8,381.7 L1520.8,385.9 L1523.7,390.1 L1526.7,394.3 L1529.6,398.5 L1532.5,402.6 L1535.5,406.7 L1538.4,410.9 L1541.3,414.9 L1544.2,419.0 L1547.1,423.2 L1550.0,427.3 L1552.9,431.4 L1555.8,435.5 L1558.6,439.6 L1561.5,443.7 L1564.4,447.8 L1567.3,451.9 L1570.1,456.0 L1573.0,460.2 L1575.8,464.3 L1578.7,468.4 L1581.5,472.5 L1584.4,476.7 L1587.2,480.8 L1590.1,484.9 L1592.9,489.0 L1595.8,493.2 L1598.6,497.3 L1601.4,501.5 L1604.3,505.6 L1607.1,509.8 L1609.9,513.9 L1612.8,518.0 L1615.6,522.2 L1618.4,526.4 L1621.3,530.5 L1624.1,534.7 L1626.9,538.8 L1629.8,543.0 L1632.6,547.2 L1635.4,551.3 L1638.2,555.5 L1641.1,559.7 L1643.9,563.8 L1646.7,568.0 L1649.6,572.2 L1652.4,576.4 L1655.3,580.6 L1658.1,584.8 L1660.9,589.0 L1663.8,593.1 L1666.6,597.3 L1669.5,601.5 L1672.3,605.7 L1675.2,609.9 L1678.0,614.1 L1680.9,618.3 L1683.7,622.5 L1686.5,626.7 L1689.4,630.9 L1692.2,635.1 L1695.0,639.3 L1697.8,643.5 L1700.6,647.7 L1703.4,651.9 L1706.1,656.1 L1708.9,660.3 L1711.7,664.5 L1714.4,668.8 L1717.1,673.0 L1719.9,677.2 L1722.6,681.4 L1725.2,685.7 L1727.9,689.9 L1730.6,694.1 L1733.2,698.4 L1735.8,702.6 L1738.4,706.9 L1741.0,711.2 L1743.5,715.4 L1746.1,719.7 L1748.6,724.0 L1751.0,728.3 L1753.5,732.6 L1755.9,736.9 L1758.4,741.2 L1760.7,745.5 L1763.1,749.8 L1765.4,754.2 L1767.7,758.5 L1770.0,762.8 L1772.3,767.2 L1774.5,771.6 L1776.7,775.9 L1778.8,780.3 L1780.9,784.7 L1783.0,789.1 L1785.1,793.5 L1787.1,798.0 L1789.1,802.4 L1791.0,806.8 L1792.9,811.3 L1794.8,815.8 L1796.6,820.2 L1798.4,824.7 L1800.1,829.2 L1801.8,833.7 L1803.4,838.1 L1805.0,842.6 L1806.5,847.1 L1808.0,851.6 L1809.4,856.1 L1810.7,860.6 L1812.0,865.1 L1813.2,869.7 L1814.4,874.2 L1815.5,878.7 L1816.5,883.2 L1817.4,887.8 L1818.3,892.3 L1819.1,896.9 L1819.8,901.5 L1820.5,906.2 L1821.1,910.8 L1821.7,915.5 L1822.2,920.2 L1822.6,924.9 L1823.0,929.7 L1823.4,934.5 L1823.7,939.3 L1823.9,944.1 L1824.1,948.9 L1824.3,953.8 L1824.5,958.7 L1824.6,963.6 L1824.6,968.5 L1824.7,973.4 L1824.7,978.4 L1824.7,983.3 L1824.6,988.3 L1824.6,993.3 L1824.5,998.3 L1824.4,1003.3 L1824.3,1008.4 L1824.2,1013.4 L1824.1,1018.5 L1824.0,1023.6 L1823.8,1028.7 L1823.7,1033.8 L1823.6,1038.9 L1823.5,1044.1 L1823.4,1049.2 L1823.4,1054.4 L1823.3,1059.6 L1823.3,1064.8 L1823.3,1070.0 L1823.4,1075.2 L1823.5,1080.4 L1823.6,1085.6 L1823.8,1090.9 L1824.0,1096.1 L1824.3,1101.4 L1824.7,1106.6 L1825.1,1111.9 L1870.9,1108.1 L1870.6,1103.4 L1870.2,1098.6 L1870.0,1093.9 L1869.8,1089.1 L1869.6,1084.2 L1869.5,1079.4 L1869.4,1074.5 L1869.3,1069.6 L1869.3,1064.7 L1869.3,1059.8 L1869.4,1054.8 L1869.4,1049.9 L1869.5,1044.9 L1869.6,1039.8 L1869.7,1034.8 L1869.8,1029.7 L1869.9,1024.7 L1870.1,1019.6 L1870.2,1014.5 L1870.3,1009.4 L1870.4,1004.2 L1870.5,999.1 L1870.6,993.9 L1870.6,988.7 L1870.7,983.5 L1870.7,978.4 L1870.7,973.2 L1870.6,968.0 L1870.6,962.7 L1870.4,957.5 L1870.3,952.3 L1870.1,947.1 L1869.9,941.8 L1869.6,936.6 L1869.3,931.3 L1868.9,926.1 L1868.4,920.8 L1867.9,915.6 L1867.4,910.3 L1866.7,905.1 L1866.0,899.8 L1865.3,894.6 L1864.4,889.3 L1863.5,884.1 L1862.5,878.8 L1861.4,873.6 L1860.3,868.4 L1859.0,863.2 L1857.7,858.0 L1856.4,852.9 L1854.9,847.8 L1853.4,842.7 L1851.8,837.7 L1850.2,832.6 L1848.5,827.6 L1846.7,822.7 L1844.9,817.7 L1843.1,812.8 L1841.2,807.9 L1839.3,803.0 L1837.3,798.2 L1835.3,793.4 L1833.2,788.6 L1831.1,783.8 L1829.0,779.0 L1826.8,774.3 L1824.7,769.6 L1822.4,764.9 L1820.2,760.2 L1817.9,755.5 L1815.6,750.9 L1813.2,746.3 L1810.8,741.6 L1808.4,737.1 L1806.0,732.5 L1803.5,727.9 L1801.1,723.4 L1798.6,718.8 L1796.0,714.3 L1793.5,709.8 L1790.9,705.3 L1788.3,700.8 L1785.7,696.4 L1783.0,691.9 L1780.4,687.5 L1777.7,683.0 L1775.0,678.6 L1772.3,674.2 L1769.6,669.8 L1766.9,665.5 L1764.1,661.1 L1761.4,656.7 L1758.6,652.4 L1755.8,648.1 L1753.0,643.7 L1750.2,639.4 L1747.4,635.1 L1744.6,630.8 L1741.7,626.5 L1738.9,622.3 L1736.1,618.0 L1733.2,613.7 L1730.4,609.5 L1727.5,605.2 L1724.7,601.0 L1721.8,596.8 L1719.0,592.5 L1716.1,588.3 L1713.2,584.1 L1710.4,579.9 L1707.5,575.7 L1704.7,571.5 L1701.9,567.3 L1699.0,563.1 L1696.2,558.9 L1693.3,554.8 L1690.5,550.6 L1687.7,546.4 L1684.8,542.2 L1682.0,538.0 L1679.1,533.8 L1676.3,529.7 L1673.5,525.5 L1670.6,521.3 L1667.8,517.1 L1665.0,513.0 L1662.1,508.8 L1659.3,504.6 L1656.5,500.5 L1653.6,496.3 L1650.8,492.1 L1647.9,488.0 L1645.1,483.8 L1642.2,479.6 L1639.4,475.5 L1636.5,471.3 L1633.7,467.2 L1630.8,463.0 L1628.0,458.8 L1625.1,454.7 L1622.3,450.5 L1619.4,446.4 L1616.5,442.2 L1613.6,438.1 L1610.8,433.9 L1607.9,429.8 L1605.0,425.6 L1602.1,421.5 L1599.2,417.3 L1596.3,413.2 L1593.4,409.1 L1590.5,404.9 L1587.6,400.8 L1584.7,396.6 L1581.8,392.5 L1578.8,388.4 L1575.9,384.2 L1573.0,380.1 L1570.0,376.0 L1567.1,371.9 L1564.2,367.8 L1561.4,363.7 L1558.6,359.7 L1555.8,355.6 L1553.0,351.6 L1550.3,347.5 L1547.6,343.5 L1545.0,339.5 L1542.4,335.4 L1539.9,331.4 L1537.5,327.3 L1535.1,323.3 L1532.8,319.3 L1530.5,315.2 L1528.4,311.1 L1526.3,307.1 L1524.3,303.0 L1522.4,298.9 L1520.6,294.8 L1518.8,290.6 L1517.2,286.5 L1515.7,282.3 Z"/>
<path d="M1573.6,291.7 L1574.1,297.7 L1575.0,303.7 L1576.0,309.6 L1577.3,315.3 L1578.8,321.0 L1580.5,326.5 L1582.3,331.9 L1584.3,337.2 L1586.5,342.5 L1588.8,347.6 L1591.3,352.6 L1593.8,357.5 L1596.5,362.3 L1599.2,367.1 L1602.1,371.8 L1605.0,376.4 L1607.9,380.9 L1610.9,385.4 L1614.0,389.8 L1617.1,394.1 L1620.2,398.4 L1623.3,402.7 L1626.4,406.9 L1629.5,411.0 L1632.6,415.2 L1635.7,419.3 L1638.7,423.3 L1641.7,427.4 L1644.7,431.4 L1647.7,435.5 L1650.6,439.6 L1653.6,443.7 L1656.5,447.8 L1659.4,451.9 L1662.3,456.0 L1665.3,460.1 L1668.1,464.2 L1671.0,468.3 L1673.9,472.4 L1676.8,476.5 L1679.7,480.7 L1682.5,484.8 L1685.4,488.9 L1688.2,493.1 L1691.1,497.2 L1693.9,501.4 L1696.8,505.5 L1699.6,509.7 L1702.5,513.8 L1705.4,518.0 L1708.2,522.1 L1711.1,526.3 L1713.9,530.4 L1716.8,534.6 L1719.7,538.7 L1722.6,542.9 L1725.5,547.1 L1728.4,551.2 L1731.3,555.3 L1734.2,559.5 L1737.1,563.6 L1740.1,567.8 L1743.0,571.9 L1746.0,576.0 L1749.0,580.2 L1752.0,584.3 L1755.0,588.4 L1758.0,592.5 L1760.9,596.6 L1763.9,600.7 L1766.9,604.8 L1769.9,608.8 L1772.9,612.9 L1775.9,616.9 L1778.9,620.9 L1781.8,625.0 L1784.7,629.0 L1787.7,633.0 L1790.5,637.0 L1793.4,641.1 L1796.3,645.1 L1799.1,649.1 L1801.9,653.2 L1804.6,657.2 L1807.4,661.2 L1810.0,665.3 L1812.7,669.4 L1815.3,673.4 L1817.8,677.5 L1820.3,681.6 L1822.8,685.8 L1825.2,689.9 L1827.6,694.1 L1829.9,698.2 L1832.2,702.4 L1834.4,706.6 L1836.5,710.9 L1838.6,715.2 L1840.8,719.6 L1842.9,724.2 L1845.1,728.8 L1847.3,733.5 L1849.6,738.2 L1852.1,743.0 L1854.6,747.9 L1857.2,752.7 L1859.8,757.5 L1862.5,762.2 L1865.3,766.9 L1868.2,771.5 L1871.1,776.0 L1874.2,780.5 L1877.3,784.8 L1880.5,789.1 L1883.7,793.4 L1887.0,797.6 L1890.4,801.7 L1893.8,805.8 L1897.2,809.9 L1900.7,813.9 L1904.2,817.8 L1907.7,821.7 L1911.3,825.6 L1914.9,829.5 L1918.5,833.3 L1922.2,837.0 L1925.9,840.8 L1929.6,844.4 L1933.3,848.1 L1937.1,851.7 L1940.9,855.2 L1944.7,858.8 L1948.4,862.4 L1952.2,865.9 L1956.0,869.4 L1959.8,872.9 L1963.6,876.4 L1967.3,879.9 L1971.1,883.3 L1974.8,886.8 L1978.6,890.3 L1982.3,893.7 L1986.0,897.2 L1989.7,900.6 L1993.4,904.0 L1997.1,907.5 L2000.8,910.9 L2004.4,914.4 L2008.1,917.8 L2011.7,921.3 L2015.3,924.8 L2018.8,928.3 L2022.4,931.8 L2025.9,935.3 L2029.3,938.8 L2032.8,942.3 L2036.2,945.9 L2039.6,949.4 L2042.9,953.0 L2046.2,956.5 L2049.5,960.1 L2052.7,963.7 L2055.9,967.2 L2059.1,970.8 L2062.2,974.4 L2065.2,978.0 L2068.2,981.7 L2071.2,985.3 L2074.1,988.9 L2077.0,992.6 L2079.8,996.2 L2082.5,999.9 L2085.2,1003.5 L2087.9,1007.2 L2090.5,1010.9 L2092.7,1014.2 L2094.3,1016.9 L2095.4,1019.0 L2096.0,1020.5 L2096.2,1021.6 L2096.3,1022.5 L2096.2,1023.8 L2095.7,1025.9 L2094.4,1029.1 L2141.6,1050.9 L2145.3,1041.5 L2147.5,1031.9 L2148.3,1022.5 L2147.6,1013.4 L2145.6,1005.1 L2142.9,997.8 L2139.7,991.5 L2136.4,986.1 L2133.4,981.5 L2130.5,977.3 L2127.5,973.1 L2124.6,968.9 L2121.5,964.8 L2118.5,960.7 L2115.3,956.6 L2112.2,952.6 L2108.9,948.5 L2105.7,944.5 L2102.4,940.5 L2099.1,936.5 L2095.7,932.6 L2092.3,928.7 L2088.8,924.8 L2085.4,920.9 L2081.9,917.0 L2078.3,913.2 L2074.8,909.3 L2071.2,905.5 L2067.5,901.7 L2063.9,898.0 L2060.2,894.2 L2056.6,890.5 L2052.9,886.7 L2049.1,883.0 L2045.4,879.4 L2041.6,875.7 L2037.9,872.0 L2034.1,868.4 L2030.3,864.8 L2026.5,861.2 L2022.7,857.6 L2018.9,854.1 L2015.0,850.6 L2011.2,847.1 L2007.4,843.6 L2003.5,840.2 L1999.7,836.7 L1995.9,833.3 L1992.1,829.9 L1988.4,826.5 L1984.6,823.1 L1980.9,819.7 L1977.2,816.3 L1973.6,813.0 L1970.0,809.6 L1966.4,806.2 L1962.8,802.8 L1959.3,799.4 L1955.8,796.1 L1952.3,792.7 L1948.9,789.3 L1945.5,785.9 L1942.2,782.5 L1938.9,779.1 L1935.7,775.6 L1932.5,772.2 L1929.4,768.7 L1926.3,765.2 L1923.3,761.7 L1920.4,758.1 L1917.5,754.5 L1914.7,750.9 L1912.0,747.2 L1909.2,743.6 L1906.6,739.9 L1904.0,736.1 L1901.5,732.4 L1899.0,728.5 L1896.7,724.7 L1894.4,720.7 L1892.2,716.5 L1890.0,712.3 L1887.8,707.9 L1885.5,703.4 L1883.2,698.8 L1880.8,694.2 L1878.4,689.5 L1875.9,684.7 L1873.3,680.0 L1870.7,675.4 L1868.1,670.8 L1865.4,666.2 L1862.6,661.7 L1859.8,657.3 L1857.0,652.8 L1854.2,648.4 L1851.3,644.1 L1848.4,639.7 L1845.5,635.5 L1842.5,631.2 L1839.5,626.9 L1836.6,622.7 L1833.6,618.5 L1830.6,614.4 L1827.5,610.2 L1824.5,606.1 L1821.5,602.0 L1818.4,597.9 L1815.4,593.9 L1812.3,589.8 L1809.3,585.8 L1806.3,581.7 L1803.2,577.7 L1800.2,573.7 L1797.2,569.7 L1794.2,565.7 L1791.3,561.7 L1788.3,557.7 L1785.4,553.7 L1782.5,549.7 L1779.6,545.7 L1776.7,541.6 L1773.8,537.6 L1770.9,533.5 L1768.1,529.5 L1765.2,525.4 L1762.4,521.3 L1759.5,517.2 L1756.7,513.1 L1753.8,509.0 L1751.0,504.9 L1748.1,500.8 L1745.3,496.6 L1742.4,492.5 L1739.6,488.3 L1736.7,484.2 L1733.9,480.0 L1731.0,475.9 L1728.2,471.7 L1725.3,467.6 L1722.4,463.4 L1719.5,459.2 L1716.6,455.0 L1713.7,450.9 L1710.8,446.7 L1707.9,442.5 L1705.0,438.3 L1702.0,434.1 L1699.1,429.9 L1696.1,425.7 L1693.1,421.6 L1690.1,417.4 L1687.1,413.2 L1684.0,409.0 L1681.0,404.8 L1677.9,400.6 L1674.8,396.5 L1671.7,392.3 L1668.6,388.2 L1665.5,384.1 L1662.5,380.0 L1659.5,376.0 L1656.5,371.9 L1653.7,367.9 L1650.8,363.9 L1648.1,360.0 L1645.4,356.0 L1642.8,352.0 L1640.3,348.1 L1637.9,344.2 L1635.7,340.2 L1633.5,336.3 L1631.5,332.4 L1629.6,328.4 L1627.8,324.5 L1626.1,320.6 L1624.6,316.6 L1623.3,312.7 L1622.1,308.7 L1621.0,304.7 L1620.1,300.7 L1619.4,296.6 L1618.8,292.5 L1618.4,288.3 Z"/>
<path d="M1659.3,304.0 L1662.2,308.3 L1665.1,312.5 L1668.1,316.8 L1671.1,321.0 L1674.2,325.2 L1677.2,329.4 L1680.3,333.5 L1683.4,337.6 L1686.6,341.7 L1689.7,345.8 L1692.9,349.9 L1696.1,353.9 L1699.4,357.9 L1702.6,361.9 L1705.9,365.9 L1709.2,369.8 L1712.5,373.8 L1715.8,377.7 L1719.2,381.6 L1722.6,385.5 L1725.9,389.3 L1729.3,393.2 L1732.8,397.0 L1736.2,400.9 L1739.6,404.7 L1743.1,408.4 L1746.5,412.2 L1750.0,416.0 L1753.5,419.7 L1757.0,423.5 L1760.5,427.2 L1764.0,430.9 L1767.6,434.6 L1771.1,438.3 L1774.6,442.0 L1778.2,445.7 L1781.7,449.3 L1785.3,453.0 L1788.9,456.6 L1792.4,460.3 L1796.0,463.9 L1799.5,467.5 L1803.1,471.1 L1806.7,474.7 L1810.3,478.4 L1813.8,482.0 L1817.4,485.6 L1821.0,489.2 L1824.5,492.7 L1828.1,496.3 L1831.7,499.9 L1835.3,503.5 L1838.9,507.1 L1842.5,510.7 L1846.1,514.3 L1849.7,517.8 L1853.3,521.4 L1857.0,525.0 L1860.6,528.5 L1864.2,532.1 L1867.9,535.6 L1871.5,539.2 L1875.2,542.7 L1878.8,546.3 L1882.5,549.8 L1886.1,553.3 L1889.8,556.8 L1893.5,560.3 L1897.2,563.8 L1900.9,567.3 L1904.6,570.8 L1908.4,574.3 L1912.1,577.8 L1915.8,581.2 L1919.6,584.7 L1923.3,588.1 L1927.1,591.6 L1930.9,595.0 L1934.7,598.4 L1938.5,601.8 L1942.3,605.2 L1946.1,608.6 L1949.9,612.0 L1953.8,615.4 L1957.6,618.7 L1961.5,622.1 L1965.4,625.4 L1969.2,628.7 L1973.1,632.0 L1977.1,635.3 L1981.0,638.6 L1984.9,641.9 L1988.9,645.1 L1992.9,648.4 L1996.8,651.6 L2000.8,654.8 L2004.8,658.0 L2008.8,661.2 L2012.9,664.4 L2016.9,667.5 L2020.9,670.6 L2025.0,673.8 L2029.1,676.9 L2033.1,680.0 L2037.2,683.1 L2041.3,686.1 L2045.4,689.2 L2049.5,692.2 L2053.7,695.3 L2057.8,698.3 L2061.9,701.3 L2066.1,704.3 L2070.2,707.3 L2074.4,710.2 L2078.6,713.2 L2082.7,716.1 L2086.9,719.1 L2091.1,722.0 L2095.3,724.9 L2099.5,727.8 L2103.7,730.7 L2108.0,733.6 L2112.2,736.4 L2116.4,739.3 L2120.7,742.1 L2124.9,745.0 L2129.2,747.8 L2133.4,750.6 L2137.7,753.4 L2142.0,756.2 L2146.2,759.0 L2150.5,761.7 L2154.8,764.5 L2159.1,767.3 L2163.4,770.0 L2167.7,772.7 L2172.0,775.5 L2176.3,778.2 L2180.6,780.9 L2184.9,783.6 L2189.2,786.3 L2193.5,789.0 L2197.8,791.7 L2202.2,794.3 L2206.5,797.0 L2210.8,799.6 L2215.1,802.3 L2219.4,804.9 L2223.7,807.6 L2228.0,810.2 L2232.3,812.9 L2236.6,815.5 L2240.9,818.1 L2245.2,820.7 L2249.5,823.4 L2253.8,826.0 L2258.1,828.6 L2262.4,831.3 L2266.6,833.9 L2270.9,836.5 L2275.2,839.2 L2279.4,841.8 L2283.7,844.4 L2287.9,847.1 L2292.1,849.7 L2296.4,852.4 L2300.6,855.1 L2304.9,857.7 L2309.1,860.4 L2313.4,863.1 L2317.7,865.8 L2321.9,868.5 L2326.2,871.2 L2330.5,873.9 L2334.7,876.6 L2339.0,879.2 L2343.3,881.9 L2347.6,884.6 L2351.9,887.3 L2356.2,890.0 L2360.5,892.6 L2364.8,895.3 L2369.2,898.0 L2373.5,900.6 L2377.9,903.3 L2382.2,905.9 L2386.6,908.5 L2391.0,911.1 L2395.4,913.8 L2399.8,916.3 L2404.2,918.9 L2408.6,921.5 L2413.0,924.1 L2417.5,926.6 L2422.0,929.1 L2426.5,931.6 L2431.0,934.1 L2435.5,936.6 L2440.0,939.0 L2444.6,941.5 L2449.1,943.9 L2453.7,946.3 L2458.3,948.6 L2462.9,951.0 L2467.6,953.3 L2472.2,955.6 L2476.9,957.9 L2481.6,960.1 L2486.3,962.4 L2491.1,964.5 L2495.8,966.7 L2500.6,968.8 L2505.4,970.9 L2510.2,973.0 L2537.0,982.0 L2650.0,1010.0 L2775.0,1047.0 L2887.0,1075.0 L2890.0,1120.0 L2950.0,1120.0 L2957.0,1074.0 L2900.0,1026.0 L2775.0,995.0 L2650.0,962.0 L2550.0,937.0 L2529.8,927.0 L2525.3,925.1 L2520.8,923.1 L2516.3,921.1 L2511.9,919.1 L2507.4,917.0 L2503.0,915.0 L2498.6,912.8 L2494.2,910.7 L2489.8,908.5 L2485.4,906.4 L2481.1,904.1 L2476.7,901.9 L2472.4,899.6 L2468.0,897.3 L2463.7,895.0 L2459.4,892.7 L2455.1,890.3 L2450.8,887.9 L2446.5,885.5 L2442.2,883.1 L2437.9,880.7 L2433.6,878.2 L2429.3,875.7 L2425.1,873.2 L2420.8,870.7 L2416.5,868.2 L2412.3,865.6 L2408.0,863.1 L2403.8,860.5 L2399.5,857.9 L2395.3,855.3 L2391.1,852.7 L2386.8,850.1 L2382.6,847.5 L2378.3,844.8 L2374.1,842.2 L2369.8,839.5 L2365.6,836.9 L2361.3,834.2 L2357.1,831.5 L2352.8,828.9 L2348.6,826.2 L2344.3,823.5 L2340.1,820.8 L2335.8,818.1 L2331.5,815.4 L2327.3,812.7 L2323.0,810.1 L2318.7,807.4 L2314.4,804.7 L2310.1,802.0 L2305.8,799.3 L2301.5,796.6 L2297.2,794.0 L2292.9,791.3 L2288.6,788.7 L2284.2,786.0 L2279.9,783.4 L2275.6,780.7 L2271.3,778.1 L2267.0,775.5 L2262.7,772.8 L2258.4,770.2 L2254.1,767.6 L2249.8,764.9 L2245.5,762.3 L2241.3,759.7 L2237.0,757.1 L2232.7,754.4 L2228.4,751.8 L2224.2,749.2 L2219.9,746.5 L2215.7,743.9 L2211.4,741.2 L2207.2,738.6 L2202.9,735.9 L2198.7,733.2 L2194.5,730.5 L2190.3,727.9 L2186.1,725.2 L2181.9,722.5 L2177.7,719.8 L2173.5,717.0 L2169.3,714.3 L2165.1,711.6 L2160.9,708.8 L2156.8,706.1 L2152.6,703.3 L2148.5,700.6 L2144.3,697.8 L2140.2,695.0 L2136.1,692.2 L2131.9,689.4 L2127.8,686.6 L2123.7,683.8 L2119.6,680.9 L2115.6,678.1 L2111.5,675.2 L2107.4,672.4 L2103.4,669.5 L2099.3,666.6 L2095.3,663.7 L2091.2,660.8 L2087.2,657.9 L2083.2,654.9 L2079.2,652.0 L2075.2,649.1 L2071.3,646.1 L2067.3,643.1 L2063.3,640.1 L2059.4,637.1 L2055.5,634.1 L2051.5,631.1 L2047.6,628.1 L2043.7,625.0 L2039.8,622.0 L2036.0,618.9 L2032.1,615.8 L2028.3,612.7 L2024.4,609.6 L2020.6,606.5 L2016.8,603.3 L2013.0,600.2 L2009.2,597.0 L2005.4,593.8 L2001.6,590.6 L1997.9,587.4 L1994.1,584.2 L1990.4,580.9 L1986.6,577.7 L1982.9,574.4 L1979.2,571.2 L1975.5,567.9 L1971.8,564.6 L1968.1,561.2 L1964.4,557.9 L1960.7,554.6 L1957.1,551.2 L1953.4,547.9 L1949.7,544.5 L1946.1,541.1 L1942.5,537.7 L1938.8,534.3 L1935.2,530.9 L1931.6,527.5 L1927.9,524.1 L1924.3,520.6 L1920.7,517.2 L1917.1,513.7 L1913.5,510.3 L1909.9,506.8 L1906.3,503.3 L1902.7,499.8 L1899.2,496.3 L1895.6,492.8 L1892.0,489.3 L1888.4,485.8 L1884.9,482.3 L1881.3,478.7 L1877.7,475.2 L1874.2,471.7 L1870.6,468.1 L1867.1,464.6 L1863.5,461.0 L1860.0,457.5 L1856.4,453.9 L1852.9,450.3 L1849.3,446.7 L1845.8,443.2 L1842.2,439.6 L1838.7,436.0 L1835.2,432.4 L1831.6,428.8 L1828.1,425.3 L1824.6,421.7 L1821.1,418.1 L1817.6,414.5 L1814.1,410.9 L1810.6,407.3 L1807.2,403.7 L1803.7,400.1 L1800.3,396.5 L1796.9,392.9 L1793.5,389.2 L1790.1,385.6 L1786.7,382.0 L1783.3,378.3 L1780.0,374.7 L1776.6,371.0 L1773.3,367.4 L1770.0,363.7 L1766.8,360.0 L1763.5,356.3 L1760.3,352.6 L1757.0,348.9 L1753.8,345.2 L1750.7,341.5 L1747.5,337.7 L1744.4,334.0 L1741.3,330.2 L1738.2,326.4 L1735.2,322.6 L1732.1,318.8 L1729.1,315.0 L1726.2,311.2 L1723.2,307.3 L1720.3,303.5 L1717.4,299.6 L1714.6,295.7 L1711.7,291.8 L1708.9,287.9 L1706.2,284.0 L1703.4,280.0 L1700.7,276.0 Z"/>
<path d="M2420,1130 L2437,1106 L2495,1096 L2650,1087 L2875,1080 L2957,1074 L3150,1052 L3300,1046 L3450,1034 L3575,1026 L3595,1017 L3640,1015 L3640,1136 L3600,1137 L3587,1134 L3500,1142 L3275,1159 L3075,1177 L2937,1185 L2850,1190 L2650,1202 L2502,1206 L2450,1230 Z"/>
<path d="M2600,1530 L2642,1495 L2707,1400 L2740,1377 L2825,1311 L2862,1300 L2900,1282 L3012,1252 L3150,1240 L3300,1229 L3380,1221 L3420,1206 L3640,1192 L3640,1307 L3420,1325 L3387,1316 L3300,1321 L3200,1327 L3025,1342 L2950,1362 L2900,1382 L2867,1395 L2775,1465 L2745,1507 L2700,1570 L2655,1605 L2640,1622 L2600,1640 Z"/>
<path d="M2727.2,2487.7 L2726.2,2482.9 L2725.2,2478.0 L2724.2,2473.2 L2723.2,2468.3 L2722.2,2463.4 L2721.1,2458.6 L2720.1,2453.7 L2719.1,2448.8 L2718.0,2444.0 L2717.0,2439.1 L2715.9,2434.2 L2714.9,2429.3 L2713.8,2424.4 L2712.7,2419.6 L2711.7,2414.7 L2710.6,2409.8 L2709.5,2404.9 L2708.4,2400.0 L2707.4,2395.1 L2706.3,2390.2 L2705.2,2385.3 L2704.1,2380.4 L2703.1,2375.5 L2702.0,2370.6 L2700.9,2365.7 L2699.8,2360.8 L2698.8,2355.9 L2697.7,2351.0 L2696.5,2346.1 L2695.3,2341.2 L2694.2,2336.3 L2693.0,2331.4 L2691.9,2326.5 L2690.7,2321.6 L2689.6,2316.8 L2688.5,2311.9 L2687.4,2307.0 L2686.2,2302.1 L2685.1,2297.2 L2684.0,2292.3 L2682.9,2287.4 L2681.9,2282.5 L2680.8,2277.6 L2679.7,2272.7 L2678.7,2267.8 L2677.6,2262.9 L2676.6,2258.1 L2675.6,2253.2 L2674.6,2248.3 L2673.6,2243.4 L2672.6,2238.5 L2671.6,2233.6 L2670.6,2228.7 L2669.7,2223.8 L2668.8,2219.0 L2667.9,2214.1 L2667.0,2209.2 L2666.0,2204.3 L2665.1,2199.4 L2664.2,2194.6 L2663.3,2189.7 L2662.4,2184.8 L2661.6,2180.0 L2660.7,2175.1 L2659.9,2170.2 L2659.1,2165.4 L2658.3,2160.5 L2657.5,2155.7 L2656.8,2150.8 L2656.1,2146.0 L2655.4,2141.1 L2654.7,2136.3 L2654.0,2131.4 L2653.4,2126.6 L2652.8,2121.7 L2652.2,2116.9 L2651.6,2112.0 L2651.0,2107.2 L2650.5,2102.4 L2650.0,2097.5 L2649.5,2092.7 L2649.0,2087.9 L2648.5,2083.1 L2648.1,2078.2 L2647.7,2073.4 L2647.3,2068.6 L2647.0,2063.8 L2646.7,2059.0 L2646.4,2054.2 L2646.1,2049.4 L2645.8,2044.6 L2645.6,2039.8 L2645.5,2035.0 L2645.3,2030.2 L2645.2,2025.4 L2645.1,2020.6 L2645.1,2015.9 L2645.2,2011.1 L2645.3,2006.3 L2645.5,2001.5 L2645.7,1996.8 L2645.9,1992.0 L2646.1,1987.3 L2646.4,1982.5 L2646.7,1977.8 L2647.1,1973.1 L2647.5,1968.3 L2647.9,1963.6 L2648.3,1958.9 L2648.8,1954.2 L2649.4,1949.5 L2649.9,1944.8 L2650.5,1940.1 L2651.2,1935.4 L2651.9,1930.7 L2652.7,1926.0 L2653.5,1921.3 L2654.3,1916.7 L2655.2,1912.0 L2656.1,1907.3 L2657.0,1902.7 L2658.0,1898.0 L2659.0,1893.4 L2660.0,1888.7 L2661.1,1884.1 L2662.3,1879.5 L2663.4,1874.9 L2664.6,1870.3 L2665.9,1865.7 L2667.2,1861.1 L2668.5,1856.5 L2669.8,1851.9 L2671.2,1847.4 L2672.7,1842.8 L2674.1,1838.3 L2675.6,1833.8 L2677.1,1829.2 L2678.7,1824.7 L2680.3,1820.2 L2681.9,1815.8 L2683.6,1811.3 L2685.3,1806.8 L2687.1,1802.4 L2688.9,1798.0 L2690.8,1793.6 L2692.6,1789.2 L2694.5,1784.8 L2696.5,1780.5 L2698.4,1776.1 L2700.4,1771.8 L2702.5,1767.5 L2704.6,1763.2 L2706.7,1758.9 L2708.8,1754.6 L2711.0,1750.4 L2713.2,1746.1 L2715.4,1741.9 L2717.6,1737.7 L2719.9,1733.5 L2722.2,1729.3 L2724.5,1725.1 L2726.8,1721.0 L2729.2,1716.9 L2731.6,1712.8 L2734.1,1708.7 L2736.6,1704.6 L2739.1,1700.6 L2741.6,1696.5 L2744.2,1692.5 L2746.8,1688.6 L2749.4,1684.6 L2752.1,1680.6 L2754.8,1676.7 L2757.6,1672.8 L2760.3,1669.0 L2763.1,1665.1 L2765.9,1661.3 L2768.8,1657.5 L2771.7,1653.7 L2774.6,1649.9 L2777.5,1646.2 L2780.6,1642.5 L2783.6,1638.9 L2786.7,1635.3 L2789.8,1631.6 L2792.9,1628.1 L2796.1,1624.5 L2799.3,1621.0 L2802.5,1617.5 L2805.7,1614.0 L2809.0,1610.5 L2812.3,1607.1 L2815.6,1603.7 L2819.0,1600.3 L2822.4,1596.9 L2825.8,1593.6 L2829.2,1590.3 L2832.7,1587.0 L2836.1,1583.7 L2839.7,1580.5 L2843.2,1577.3 L2846.8,1574.1 L2850.3,1571.0 L2854.0,1567.8 L2857.6,1564.7 L2861.2,1561.6 L2864.9,1558.6 L2868.6,1555.6 L2872.3,1552.5 L2876.0,1549.6 L2879.8,1546.6 L2883.6,1543.7 L2887.4,1540.8 L2891.2,1537.9 L2895.0,1535.1 L2898.9,1532.3 L2902.8,1529.5 L2906.7,1526.8 L2910.6,1524.0 L2914.5,1521.4 L2918.5,1518.7 L2922.5,1516.1 L2926.6,1513.6 L2930.6,1511.1 L2934.6,1508.6 L2938.7,1506.1 L2942.8,1503.7 L2946.8,1501.2 L2950.8,1498.7 L2954.8,1496.2 L2958.9,1493.7 L2962.9,1491.2 L2967.0,1488.8 L2971.1,1486.4 L2975.1,1484.1 L2979.2,1481.8 L2983.4,1479.5 L2987.5,1477.3 L2991.6,1475.1 L2995.8,1472.9 L3000.0,1470.8 L3004.2,1468.7 L3008.4,1466.6 L3012.6,1464.6 L3016.8,1462.6 L3021.0,1460.6 L3025.3,1458.7 L3029.6,1456.9 L3033.8,1455.0 L3038.1,1453.2 L3042.4,1451.5 L3046.8,1449.9 L3051.1,1448.3 L3055.5,1446.7 L3059.9,1445.2 L3064.3,1443.7 L3068.7,1442.2 L3073.1,1440.8 L3077.6,1439.4 L3082.0,1438.1 L3086.5,1436.8 L3091.0,1435.5 L3095.5,1434.2 L3100.0,1433.0 L3104.5,1431.8 L3109.1,1430.7 L3113.6,1429.5 L3118.2,1428.4 L3122.8,1427.4 L3127.4,1426.3 L3132.0,1425.3 L3136.6,1424.3 L3141.2,1423.3 L3145.9,1422.4 L3150.5,1421.4 L3155.2,1420.5 L3159.9,1419.7 L3164.6,1418.8 L3169.3,1418.0 L3174.0,1417.2 L3178.7,1416.4 L3183.5,1415.6 L3188.2,1414.9 L3193.0,1414.2 L3197.7,1413.5 L3202.5,1412.9 L3207.3,1412.2 L3212.1,1411.6 L3216.9,1411.0 L3221.8,1410.4 L3226.6,1409.9 L3231.5,1409.3 L3236.3,1408.8 L3241.2,1408.3 L3246.1,1407.8 L3251.0,1407.3 L3255.9,1406.9 L3260.8,1406.4 L3265.7,1406.0 L3270.6,1405.6 L3275.5,1405.2 L3280.5,1404.8 L3285.4,1404.4 L3290.3,1404.0 L3295.3,1403.6 L3300.3,1403.3 L3305.2,1402.9 L3310.2,1402.6 L3315.2,1402.2 L3320.2,1401.9 L3325.2,1401.6 L3330.2,1401.3 L3335.2,1401.0 L3340.2,1400.7 L3345.3,1400.4 L3350.3,1400.1 L3355.3,1399.9 L3360.4,1399.6 L3365.4,1399.3 L3370.5,1399.1 L3375.5,1398.8 L3380.6,1398.6 L3385.6,1398.4 L3390.7,1398.1 L3395.8,1397.9 L3400.8,1397.7 L3405.9,1397.4 L3411.0,1397.2 L3416.1,1397.0 L3421.1,1396.7 L3426.2,1396.5 L3431.3,1396.3 L3436.4,1396.0 L3441.5,1395.8 L3446.6,1395.6 L3451.7,1395.3 L3456.8,1395.1 L3461.9,1394.8 L3467.0,1394.6 L3472.1,1394.3 L3477.2,1394.0 L3482.3,1393.8 L3487.4,1393.6 L3492.5,1393.4 L3497.6,1393.1 L3502.7,1392.9 L3507.8,1392.6 L3512.9,1392.3 L3518.0,1392.1 L3523.1,1391.8 L3528.2,1391.5 L3533.3,1391.1 L3538.4,1390.8 L3543.5,1390.5 L3548.6,1390.1 L3553.7,1389.7 L3558.8,1389.4 L3563.9,1389.0 L3568.9,1388.5 L3574.0,1388.1 L3579.1,1387.7 L3584.2,1387.2 L3589.3,1386.7 L3594.3,1386.2 L3599.4,1385.7 L3604.5,1385.1 L3609.5,1384.5 L3614.6,1383.9 L3619.6,1383.3 L3624.7,1382.7 L3629.7,1382.0 L3634.8,1381.3 L3639.8,1380.6 L3644.8,1379.9 L3649.9,1379.1 L3640.1,1314.9 L3635.5,1315.5 L3630.7,1316.2 L3626.0,1316.8 L3621.3,1317.5 L3616.6,1318.0 L3611.8,1318.6 L3607.0,1319.2 L3602.3,1319.7 L3597.5,1320.2 L3592.7,1320.7 L3587.9,1321.2 L3583.0,1321.6 L3578.2,1322.1 L3573.4,1322.5 L3568.5,1322.9 L3563.6,1323.3 L3558.8,1323.7 L3553.9,1324.0 L3549.0,1324.4 L3544.1,1324.7 L3539.2,1325.0 L3534.3,1325.3 L3529.3,1325.6 L3524.4,1325.9 L3519.5,1326.1 L3514.5,1326.4 L3509.6,1326.6 L3504.6,1326.9 L3499.6,1327.1 L3494.6,1327.3 L3489.6,1327.5 L3484.6,1327.7 L3479.6,1327.9 L3474.6,1328.1 L3469.6,1328.2 L3464.6,1328.3 L3459.5,1328.4 L3454.5,1328.5 L3449.5,1328.6 L3444.4,1328.7 L3439.4,1328.8 L3434.3,1328.9 L3429.2,1329.0 L3424.2,1329.0 L3419.1,1329.1 L3414.0,1329.2 L3408.9,1329.3 L3403.8,1329.4 L3398.7,1329.4 L3393.6,1329.5 L3388.5,1329.6 L3383.4,1329.7 L3378.3,1329.8 L3373.2,1329.9 L3368.1,1330.0 L3363.0,1330.1 L3357.8,1330.2 L3352.7,1330.3 L3347.6,1330.4 L3342.4,1330.5 L3337.3,1330.7 L3332.2,1330.8 L3327.0,1331.0 L3321.9,1331.1 L3316.8,1331.3 L3311.6,1331.5 L3306.5,1331.7 L3301.3,1331.9 L3296.2,1332.1 L3291.0,1332.3 L3285.9,1332.6 L3280.7,1332.8 L3275.6,1333.1 L3270.4,1333.4 L3265.2,1333.7 L3260.1,1334.1 L3254.9,1334.5 L3249.8,1334.8 L3244.6,1335.3 L3239.5,1335.7 L3234.3,1336.1 L3229.2,1336.6 L3224.0,1337.1 L3218.9,1337.6 L3213.7,1338.1 L3208.6,1338.7 L3203.5,1339.2 L3198.3,1339.8 L3193.2,1340.5 L3188.0,1341.1 L3182.9,1341.8 L3177.8,1342.5 L3172.6,1343.2 L3167.5,1343.9 L3162.4,1344.7 L3157.3,1345.5 L3152.1,1346.3 L3147.0,1347.2 L3141.9,1348.1 L3136.8,1349.0 L3131.7,1349.9 L3126.6,1350.9 L3121.5,1351.9 L3116.4,1353.0 L3111.3,1354.1 L3106.2,1355.2 L3101.2,1356.4 L3096.1,1357.6 L3091.0,1358.9 L3086.0,1360.2 L3080.9,1361.5 L3075.9,1362.9 L3070.9,1364.3 L3065.8,1365.7 L3060.8,1367.2 L3055.8,1368.7 L3050.8,1370.3 L3045.8,1371.9 L3040.8,1373.5 L3035.8,1375.2 L3030.9,1376.9 L3025.9,1378.7 L3021.0,1380.5 L3016.0,1382.4 L3011.1,1384.3 L3006.1,1386.1 L3001.2,1388.0 L2996.3,1390.0 L2991.4,1392.0 L2986.5,1394.0 L2981.6,1396.1 L2976.7,1398.2 L2971.9,1400.4 L2967.1,1402.6 L2962.3,1404.9 L2957.5,1407.2 L2952.7,1409.5 L2948.0,1411.9 L2943.2,1414.3 L2938.5,1416.7 L2933.8,1419.2 L2929.1,1421.7 L2924.4,1424.3 L2919.8,1426.9 L2915.2,1429.5 L2910.6,1432.1 L2906.0,1434.8 L2901.5,1437.7 L2897.0,1440.6 L2892.6,1443.6 L2888.2,1446.6 L2883.9,1449.7 L2879.5,1452.7 L2875.2,1455.8 L2870.9,1459.0 L2866.6,1462.1 L2862.3,1465.3 L2858.0,1468.5 L2853.8,1471.7 L2849.6,1474.9 L2845.4,1478.2 L2841.2,1481.5 L2837.1,1484.8 L2832.9,1488.2 L2828.8,1491.6 L2824.8,1495.0 L2820.7,1498.5 L2816.7,1502.0 L2812.7,1505.5 L2808.7,1509.0 L2804.8,1512.6 L2800.9,1516.2 L2797.0,1519.9 L2793.1,1523.6 L2789.3,1527.3 L2785.5,1531.0 L2781.7,1534.8 L2778.0,1538.6 L2774.3,1542.4 L2770.6,1546.2 L2767.0,1550.1 L2763.3,1554.0 L2759.7,1558.0 L2756.2,1561.9 L2752.7,1565.9 L2749.2,1569.9 L2745.7,1574.0 L2742.3,1578.0 L2738.9,1582.1 L2735.5,1586.3 L2732.2,1590.4 L2728.8,1594.6 L2725.6,1598.8 L2722.3,1603.1 L2719.1,1607.3 L2715.9,1611.6 L2712.8,1615.8 L2709.7,1620.2 L2706.6,1624.5 L2703.5,1628.9 L2700.5,1633.2 L2697.5,1637.6 L2694.6,1642.1 L2691.7,1646.5 L2688.8,1651.0 L2686.0,1655.5 L2683.2,1660.0 L2680.4,1664.5 L2677.7,1669.1 L2675.0,1673.7 L2672.3,1678.3 L2669.7,1682.9 L2667.1,1687.5 L2664.6,1692.2 L2662.1,1696.8 L2659.6,1701.5 L2657.2,1706.3 L2654.8,1711.0 L2652.5,1715.7 L2650.2,1720.5 L2648.0,1725.3 L2645.8,1730.2 L2643.7,1735.0 L2641.5,1739.8 L2639.5,1744.7 L2637.4,1749.6 L2635.4,1754.5 L2633.5,1759.4 L2631.5,1764.3 L2629.6,1769.2 L2627.8,1774.2 L2626.0,1779.1 L2624.2,1784.1 L2622.5,1789.1 L2620.8,1794.1 L2619.1,1799.1 L2617.4,1804.1 L2615.8,1809.1 L2614.3,1814.1 L2612.7,1819.2 L2611.3,1824.2 L2609.8,1829.3 L2608.4,1834.3 L2607.0,1839.4 L2605.7,1844.5 L2604.4,1849.6 L2603.2,1854.7 L2601.9,1859.8 L2600.8,1864.9 L2599.6,1870.0 L2598.5,1875.2 L2597.5,1880.3 L2596.4,1885.4 L2595.5,1890.6 L2594.5,1895.8 L2593.6,1900.9 L2592.7,1906.1 L2591.9,1911.2 L2591.1,1916.4 L2590.4,1921.6 L2589.7,1926.8 L2589.0,1932.0 L2588.4,1937.1 L2587.8,1942.3 L2587.2,1947.5 L2586.6,1952.7 L2586.1,1957.9 L2585.7,1963.1 L2585.3,1968.3 L2584.9,1973.4 L2584.5,1978.6 L2584.2,1983.8 L2584.0,1989.0 L2583.7,1994.2 L2583.5,1999.4 L2583.4,2004.5 L2583.2,2009.7 L2583.1,2014.9 L2583.0,2020.1 L2582.9,2025.3 L2582.8,2030.5 L2582.7,2035.6 L2582.6,2040.8 L2582.6,2046.0 L2582.6,2051.2 L2582.7,2056.4 L2582.8,2061.5 L2582.9,2066.7 L2583.0,2071.9 L2583.2,2077.1 L2583.3,2082.3 L2583.6,2087.4 L2583.8,2092.6 L2584.1,2097.8 L2584.4,2103.0 L2584.7,2108.1 L2585.1,2113.3 L2585.5,2118.5 L2585.9,2123.6 L2586.4,2128.8 L2586.8,2134.0 L2587.3,2139.1 L2587.8,2144.3 L2588.4,2149.4 L2588.9,2154.6 L2589.5,2159.7 L2590.1,2164.9 L2590.7,2170.0 L2591.4,2175.2 L2592.1,2180.3 L2592.7,2185.5 L2593.4,2190.6 L2594.1,2195.7 L2594.9,2200.8 L2595.6,2206.0 L2596.4,2211.1 L2597.2,2216.2 L2598.0,2221.3 L2598.9,2226.4 L2599.8,2231.5 L2600.7,2236.6 L2601.6,2241.7 L2602.5,2246.8 L2603.4,2251.8 L2604.4,2256.9 L2605.3,2262.0 L2606.3,2267.1 L2607.3,2272.1 L2608.3,2277.2 L2609.3,2282.2 L2610.3,2287.3 L2611.4,2292.3 L2612.4,2297.3 L2613.4,2302.4 L2614.5,2307.4 L2615.5,2312.4 L2616.6,2317.4 L2617.7,2322.4 L2618.8,2327.4 L2619.8,2332.4 L2620.9,2337.4 L2622.0,2342.4 L2623.1,2347.4 L2624.2,2352.3 L2625.3,2357.3 L2626.4,2362.3 L2627.5,2367.2 L2628.7,2372.1 L2629.9,2377.1 L2631.2,2382.0 L2632.4,2386.9 L2633.6,2391.8 L2634.8,2396.7 L2636.0,2401.5 L2637.3,2406.4 L2638.5,2411.3 L2639.7,2416.1 L2640.9,2421.0 L2642.1,2425.8 L2643.3,2430.7 L2644.5,2435.5 L2645.7,2440.3 L2646.9,2445.1 L2648.1,2449.9 L2649.3,2454.7 L2650.5,2459.5 L2651.7,2464.3 L2652.8,2469.1 L2654.0,2473.9 L2655.1,2478.6 L2656.3,2483.4 L2657.4,2488.1 L2658.6,2492.8 L2659.7,2497.6 L2660.8,2502.3 Z"/>
<path d="M2420.0,1950.0 L2445.0,1988.0 L2445.0,1994.1 L2445.0,2000.2 L2445.2,2006.3 L2445.4,2012.3 L2445.6,2018.4 L2445.9,2024.4 L2446.3,2030.5 L2446.8,2036.5 L2447.3,2042.6 L2447.8,2048.6 L2448.4,2054.6 L2449.1,2060.6 L2449.8,2066.6 L2450.6,2072.6 L2451.4,2078.6 L2452.2,2084.6 L2453.1,2090.6 L2454.0,2096.6 L2455.0,2102.6 L2456.0,2108.5 L2457.0,2114.5 L2458.1,2120.5 L2459.2,2126.4 L2460.3,2132.4 L2461.4,2138.3 L2462.6,2144.3 L2463.8,2150.2 L2465.0,2156.2 L2466.2,2162.1 L2467.4,2168.1 L2468.7,2174.0 L2469.9,2180.0 L2471.2,2185.9 L2472.5,2191.9 L2473.8,2197.8 L2475.0,2203.8 L2476.3,2209.7 L2477.6,2215.7 L2478.9,2221.6 L2480.2,2227.5 L2481.5,2233.5 L2482.8,2239.4 L2484.1,2245.4 L2485.4,2251.3 L2486.7,2257.3 L2488.0,2263.2 L2489.3,2269.2 L2490.6,2275.1 L2491.9,2281.1 L2493.2,2287.0 L2494.4,2293.0 L2495.7,2298.9 L2497.0,2304.9 L2498.3,2310.8 L2499.6,2316.8 L2500.8,2322.7 L2502.1,2328.7 L2503.3,2334.6 L2504.6,2340.6 L2505.8,2346.5 L2507.0,2352.5 L2508.3,2358.5 L2509.5,2364.4 L2510.7,2370.4 L2511.9,2376.4 L2513.1,2382.3 L2514.2,2388.3 L2515.4,2394.3 L2516.5,2400.2 L2517.7,2406.2 L2518.8,2412.2 L2519.9,2418.1 L2521.0,2424.1 L2522.1,2430.1 L2523.2,2436.1 L2524.2,2442.1 L2525.2,2448.0 L2526.3,2454.0 L2527.3,2460.0 L2528.2,2466.0 L2529.2,2472.0 L2530.2,2478.0 L2531.1,2484.0 L2532.0,2490.0 L2659.0,2490.0 L2628.0,2360.0 L2634.9,2348.3 L2640.6,2337.5 L2645.1,2327.4 L2648.4,2318.2 L2650.6,2309.7 L2651.9,2301.8 L2652.2,2294.6 L2651.7,2288.0 L2650.4,2281.9 L2648.4,2276.3 L2645.7,2271.1 L2642.5,2266.3 L2638.8,2261.9 L2634.6,2257.8 L2630.1,2254.0 L2625.3,2250.3 L2620.2,2246.8 L2615.1,2243.4 L2609.8,2240.1 L2604.5,2236.8 L2599.3,2233.5 L2594.2,2230.1 L2589.4,2226.6 L2584.8,2222.9 L2580.5,2219.0 L2576.7,2214.8 L2573.3,2210.3 L2570.5,2205.5 L2568.2,2200.4 L2566.2,2195.0 L2564.7,2189.3 L2563.4,2183.5 L2562.3,2177.5 L2561.4,2171.4 L2560.6,2165.1 L2559.8,2158.9 L2559.0,2152.6 L2558.1,2146.4 L2557.1,2140.2 L2555.9,2134.0 L2554.6,2128.0 L2553.3,2121.9 L2552.0,2115.9 L2550.6,2109.9 L2549.2,2103.9 L2547.9,2097.9 L2546.6,2092.0 L2545.5,2086.0 L2544.4,2080.0 L2543.5,2074.0 L2542.7,2068.0 L2542.1,2062.0 L2541.6,2055.9 L2541.1,2049.9 L2540.8,2043.8 L2540.4,2037.8 L2540.1,2031.7 L2539.9,2025.6 L2539.6,2019.6 L2539.3,2013.5 L2538.9,2007.4 L2538.5,2001.4 L2538.0,1995.3 L2537.4,1989.3 L2536.7,1983.3 L2535.8,1977.3 L2534.7,1971.3 L2533.5,1965.4 L2532.1,1959.4 L2530.4,1953.5 L2528.6,1947.7 L2526.4,1941.8 L2524.0,1936.0 L2524.1,1928.8 L2523.3,1922.1 L2521.6,1915.7 L2519.1,1909.8 L2515.6,1904.2 L2511.3,1899.1 L2506.1,1894.3 L2500.0,1890.0 Z"/>
<path d="M2170.0,2080.0 L2209.0,2103.0 L2213.4,2107.4 L2217.8,2111.8 L2222.1,2116.2 L2226.4,2120.7 L2230.7,2125.2 L2234.9,2129.8 L2239.0,2134.4 L2243.1,2139.0 L2247.2,2143.7 L2251.2,2148.4 L2255.1,2153.1 L2259.0,2157.9 L2262.8,2162.8 L2266.6,2167.6 L2270.2,2172.5 L2273.8,2177.5 L2277.4,2182.5 L2280.9,2187.5 L2284.3,2192.6 L2287.6,2197.7 L2290.8,2202.9 L2294.0,2208.1 L2297.1,2213.3 L2300.0,2218.6 L2303.0,2224.0 L2305.8,2229.3 L2308.5,2234.8 L2311.1,2240.3 L2313.7,2245.8 L2316.2,2251.3 L2318.6,2256.9 L2320.9,2262.6 L2323.1,2268.3 L2325.3,2274.0 L2327.4,2279.7 L2329.4,2285.5 L2331.4,2291.3 L2333.3,2297.1 L2335.1,2303.0 L2336.9,2308.9 L2338.6,2314.8 L2340.2,2320.7 L2341.8,2326.7 L2343.4,2332.7 L2344.9,2338.7 L2346.4,2344.7 L2347.8,2350.7 L2349.1,2356.7 L2350.5,2362.8 L2351.8,2368.9 L2353.0,2374.9 L2354.2,2381.0 L2355.4,2387.1 L2356.6,2393.2 L2357.7,2399.3 L2358.8,2405.4 L2359.9,2411.5 L2361.0,2417.6 L2362.0,2423.7 L2363.1,2429.7 L2364.1,2435.8 L2365.1,2441.9 L2366.1,2448.0 L2367.1,2454.0 L2368.1,2460.0 L2369.0,2466.1 L2370.0,2472.1 L2371.0,2478.1 L2372.0,2484.0 L2373.0,2490.0 L2485.0,2490.0 L2483.2,2484.3 L2481.4,2478.6 L2479.7,2472.8 L2478.0,2467.0 L2476.3,2461.2 L2474.8,2455.4 L2473.2,2449.5 L2471.7,2443.6 L2470.2,2437.7 L2468.8,2431.7 L2467.4,2425.8 L2466.0,2419.8 L2464.7,2413.8 L2463.4,2407.8 L2462.1,2401.8 L2460.8,2395.7 L2459.5,2389.7 L2458.2,2383.6 L2457.0,2377.5 L2455.7,2371.5 L2454.5,2365.4 L2453.2,2359.3 L2452.0,2353.2 L2450.7,2347.1 L2449.5,2341.0 L2448.2,2334.9 L2446.9,2328.9 L2445.6,2322.8 L2444.3,2316.7 L2442.9,2310.6 L2441.6,2304.6 L2440.2,2298.5 L2438.8,2292.5 L2437.3,2286.5 L2435.8,2280.5 L2434.3,2274.5 L2432.7,2268.5 L2431.1,2262.6 L2429.4,2256.6 L2427.7,2250.7 L2425.9,2244.9 L2424.1,2239.0 L2422.2,2233.2 L2420.2,2227.4 L2418.2,2221.6 L2416.1,2215.8 L2414.0,2210.1 L2411.8,2204.4 L2409.5,2198.8 L2407.1,2193.2 L2404.6,2187.6 L2402.1,2182.1 L2399.5,2176.6 L2396.7,2171.2 L2393.9,2165.8 L2391.0,2160.4 L2388.0,2155.1 L2384.9,2149.9 L2381.7,2144.7 L2378.4,2139.5 L2375.0,2134.4 L2371.4,2129.4 L2367.8,2124.4 L2364.0,2119.4 L2360.1,2114.6 L2356.1,2109.8 L2352.0,2105.0 L2347.6,2099.7 L2343.1,2094.4 L2338.6,2089.2 L2334.0,2084.0 L2329.3,2078.9 L2324.6,2073.8 L2319.8,2068.8 L2315.0,2063.9 L2310.1,2059.0 L2305.2,2054.2 L2300.2,2049.4 L2295.1,2044.7 L2290.0,2040.0 Z"/>
<path d="M1100,1224 L1132,1222 L1289,1208 L1513,1194 L1640,1182 L1682,1185 L1740,1200 L1700,1290 L1645,1292 L1513,1302 L1289,1316 L1132,1330 L1100,1333 Z"/>
<path d="M1100.0,1382.0 L1106.0,1381.6 L1112.0,1381.3 L1118.0,1380.9 L1124.0,1380.5 L1130.1,1380.1 L1136.1,1379.6 L1142.2,1379.2 L1148.2,1378.8 L1154.3,1378.3 L1160.4,1377.9 L1166.5,1377.5 L1172.6,1377.0 L1178.7,1376.6 L1184.8,1376.2 L1190.9,1375.7 L1197.0,1375.3 L1203.1,1374.9 L1209.3,1374.6 L1215.4,1374.2 L1221.5,1373.8 L1227.7,1373.5 L1233.8,1373.2 L1239.9,1373.0 L1246.1,1372.7 L1252.2,1372.5 L1258.4,1372.3 L1264.5,1372.2 L1270.7,1372.0 L1276.8,1372.0 L1282.9,1371.9 L1289.1,1371.9 L1295.2,1372.0 L1301.3,1372.1 L1307.4,1372.2 L1313.5,1372.4 L1319.6,1372.6 L1325.7,1372.9 L1331.8,1373.3 L1337.9,1373.7 L1344.0,1374.1 L1350.1,1374.7 L1356.1,1375.3 L1362.2,1375.9 L1368.2,1376.7 L1374.2,1377.5 L1380.3,1378.3 L1386.3,1379.3 L1392.3,1380.3 L1398.3,1381.4 L1404.2,1382.5 L1410.2,1383.8 L1416.1,1385.0 L1422.0,1386.4 L1427.9,1387.9 L1433.8,1389.4 L1439.7,1390.9 L1445.5,1392.6 L1451.4,1394.3 L1457.2,1396.1 L1463.0,1397.9 L1468.8,1399.9 L1474.5,1401.9 L1480.2,1403.9 L1485.9,1406.0 L1491.6,1408.2 L1497.3,1410.5 L1502.9,1412.8 L1508.5,1415.2 L1514.1,1417.7 L1519.6,1420.2 L1525.1,1422.8 L1530.6,1425.5 L1536.1,1428.2 L1541.5,1431.0 L1546.9,1433.8 L1552.3,1436.8 L1557.7,1439.7 L1563.0,1442.8 L1568.2,1445.9 L1573.5,1449.1 L1578.7,1452.3 L1583.9,1455.6 L1589.0,1459.0 L1640.0,1470.0 L1640.0,1580.0 L1633.6,1581.6 L1627.3,1582.7 L1621.1,1583.3 L1615.1,1583.5 L1609.1,1583.2 L1603.2,1582.5 L1597.4,1581.5 L1591.7,1580.1 L1586.0,1578.5 L1580.4,1576.6 L1574.8,1574.5 L1569.3,1572.2 L1563.9,1569.7 L1558.4,1567.1 L1553.0,1564.3 L1547.7,1561.5 L1542.3,1558.5 L1537.1,1555.5 L1531.8,1552.4 L1526.6,1549.3 L1521.4,1546.1 L1516.2,1542.9 L1511.0,1539.7 L1505.8,1536.6 L1500.6,1533.5 L1495.3,1530.6 L1490.0,1527.7 L1484.6,1525.1 L1479.1,1522.5 L1473.6,1520.2 L1468.0,1518.0 L1462.3,1516.0 L1456.6,1514.1 L1450.8,1512.4 L1445.0,1510.8 L1439.1,1509.2 L1433.2,1507.8 L1427.2,1506.5 L1421.3,1505.3 L1415.2,1504.2 L1409.2,1503.1 L1403.1,1502.1 L1397.0,1501.1 L1390.9,1500.2 L1384.8,1499.3 L1378.7,1498.4 L1372.6,1497.5 L1366.6,1496.7 L1360.5,1495.8 L1354.4,1495.0 L1348.3,1494.2 L1342.3,1493.4 L1336.2,1492.7 L1330.1,1492.1 L1324.1,1491.5 L1318.0,1491.0 L1312.0,1490.6 L1305.9,1490.3 L1299.9,1490.2 L1293.8,1490.1 L1287.8,1490.1 L1281.7,1490.2 L1275.7,1490.4 L1269.6,1490.7 L1263.6,1491.1 L1257.5,1491.5 L1251.5,1492.0 L1245.4,1492.6 L1239.4,1493.2 L1233.3,1493.9 L1227.3,1494.6 L1221.2,1495.4 L1215.2,1496.2 L1209.1,1497.0 L1203.1,1497.8 L1197.0,1498.6 L1191.0,1499.5 L1184.9,1500.3 L1178.9,1501.2 L1172.8,1502.0 L1166.8,1502.8 L1160.7,1503.6 L1154.7,1504.4 L1148.6,1505.1 L1142.5,1505.8 L1136.5,1506.5 L1130.4,1507.1 L1124.3,1507.6 L1118.2,1508.1 L1112.2,1508.4 L1106.1,1508.8 L1100.0,1509.0 Z"/>
<ellipse cx="2112" cy="1550" rx="530" ry="560"/>
</g>
<path d="M2594,2226 L2628,2360 L2661,2490" stroke="#000" stroke-width="4" fill="none"/>
<polygon points="1814.6902893502372,876.418554944766 1804.9505179214236,852.3117747260295 1851.3097106497628,833.581445055234 1861.0494820785764,857.6882252739705" fill="#9c9cfa"/>
<polygon points="1915.807611844575,827.5771644662753 1897.4228355337248,809.1923881554252 1934.192388155425,772.4228355337247 1952.5771644662752,790.8076118445748" fill="#9c9cfa"/>
<polygon points="1525,1195 1553,1194 1561,1296 1533,1299" fill="#9c9cfa"/>
<polygon points="1533,1434 1556,1448 1511,1535 1485,1521" fill="#9c9cfa"/>
<polygon points="2852,1082 2884,1080 2884,1190 2852,1192" fill="#9c9cfa"/>
<polygon points="2900,1287 2927,1280 2950,1370 2922,1380" fill="#9c9cfa"/>
<polygon points="2313,2240 2403,2200 2417,2226 2321,2265" fill="#9c9cfa"/>
<polygon points="2473,2172 2555,2155 2560,2183 2476,2203" fill="#9c9cfa"/>
<ellipse cx="2113" cy="1550" rx="487" ry="514" stroke="#f4f4f4" stroke-width="3.5" fill="none" stroke-dasharray="34 40"/>
<path d="M2500.0,1150.0 L2875.0,1135.0 L2962.0,1127.0 L3425.0,1092.0 L3620.0,1080.0" stroke="#f4f4f4" stroke-width="3.5" fill="none" stroke-dasharray="34 40"/>
<path d="M2700.0,1480.0 L2777.0,1405.0 L2832.0,1357.0 L2900.0,1325.0 L3007.0,1301.0 L3350.0,1272.0 L3620.0,1252.0" stroke="#f4f4f4" stroke-width="3.5" fill="none" stroke-dasharray="34 40"/>
<path d="M1132.0,1276.0 L1650.0,1236.0" stroke="#f4f4f4" stroke-width="3.5" fill="none" stroke-dasharray="34 40"/>
<path d="M1132.0,1440.0 L1290.0,1432.0 L1360.0,1434.0 L1430.0,1447.0 L1500.0,1475.0" stroke="#f4f4f4" stroke-width="3.5" fill="none" stroke-dasharray="34 40"/>
<path d="M2490.0,1980.0 L2500.0,2070.0 L2524.0,2210.0 L2560.0,2350.0 L2590.0,2480.0" stroke="#f4f4f4" stroke-width="3.5" fill="none" stroke-dasharray="34 40"/>
<path d="M2290.0,2110.0 L2350.0,2200.0 L2380.0,2270.0 L2400.0,2360.0 L2425.0,2480.0" stroke="#f4f4f4" stroke-width="3.5" fill="none" stroke-dasharray="34 40"/>
<g transform="translate(3012,1097) rotate(180)"><path d="M-22,-4 L6,-4 L6,-13 L22,0 L6,13 L6,4 L-22,4 Z" fill="#fff"/></g>
<g transform="translate(3015,1152) rotate(180)"><path d="M-22,-4 L6,-4 L6,-13 L22,0 L6,13 L6,4 L-22,4 Z" fill="#fff"/></g>
<g transform="translate(2192,1021) rotate(180)"><path d="M-22,-4 L6,-4 L6,-13 L22,0 L6,13 L6,4 L-22,4 Z" fill="#fff"/></g>
<g transform="translate(2189,1068) rotate(180)"><path d="M-22,-4 L6,-4 L6,-13 L22,0 L6,13 L6,4 L-22,4 Z" fill="#fff"/></g>
<g transform="translate(1157,1247) rotate(180)"><path d="M-22,-4 L6,-4 L6,-13 L22,0 L6,13 L6,4 L-22,4 Z" fill="#fff"/></g>
<g transform="translate(1161,1302) rotate(180)"><path d="M-22,-4 L6,-4 L6,-13 L22,0 L6,13 L6,4 L-22,4 Z" fill="#fff"/></g>
<g transform="translate(1429,1420) rotate(8)"><path d="M-22,-4 L6,-4 L6,-13 L22,0 L6,13 L6,4 L-22,4 Z" fill="#fff"/></g>
<g transform="translate(2972,1287) rotate(-8)"><path d="M-22,-4 L6,-4 L6,-13 L22,0 L6,13 L6,4 L-22,4 Z" fill="#fff"/></g>
<g transform="translate(2980,1330) rotate(-8)"><path d="M-22,-4 L6,-4 L6,-13 L22,0 L6,13 L6,4 L-22,4 Z" fill="#fff"/></g>
<g transform="translate(3325,1250) rotate(-5)"><path d="M-22,-4 L6,-4 L6,-13 L22,0 L6,13 L6,4 L-22,4 Z" fill="#fff"/></g>
<g transform="translate(3330,1296) rotate(-5)"><path d="M-22,-4 L6,-4 L6,-13 L22,0 L6,13 L6,4 L-22,4 Z" fill="#fff"/></g>
<g transform="translate(2327,2203) rotate(95)"><path d="M-22,-4 L6,-4 L6,-13 L22,0 L6,13 L6,4 L-22,4 Z" fill="#fff"/></g>
<g transform="translate(2375,2183) rotate(95)"><path d="M-22,-4 L6,-4 L6,-13 L22,0 L6,13 L6,4 L-22,4 Z" fill="#fff"/></g>
<g transform="translate(2470,2065) rotate(-90)"><path d="M-22,-4 L6,-4 L6,-13 L22,0 L6,13 L6,4 L-22,4 Z" fill="#fff"/></g>
<g transform="translate(2515,2065) rotate(-90)"><path d="M-22,-4 L6,-4 L6,-13 L22,0 L6,13 L6,4 L-22,4 Z" fill="#fff"/></g>
<g transform="translate(2521,2296) rotate(-105)"><path d="M-22,-4 L6,-4 L6,-13 L22,0 L6,13 L6,4 L-22,4 Z" fill="#fff"/></g>
<g transform="translate(2574,2285) rotate(-105)"><path d="M-22,-4 L6,-4 L6,-13 L22,0 L6,13 L6,4 L-22,4 Z" fill="#fff"/></g>
<g transform="translate(1623,1417) rotate(105)"><path d="M-22,-4 L6,-4 L6,-13 L22,0 L6,13 L6,4 L-22,4 Z" fill="#fff"/></g>
<g transform="translate(1665,1425) rotate(105)"><path d="M-22,-4 L6,-4 L6,-13 L22,0 L6,13 L6,4 L-22,4 Z" fill="#fff"/></g>
<g transform="translate(2565,1680) rotate(-80)"><path d="M-22,-4 L6,-4 L6,-13 L22,0 L6,13 L6,4 L-22,4 Z" fill="#fff"/></g>
<g transform="translate(2607,1685) rotate(-80)"><path d="M-22,-4 L6,-4 L6,-13 L22,0 L6,13 L6,4 L-22,4 Z" fill="#fff"/></g>
<g transform="translate(2511,1290) rotate(-105)"><path d="M-22,-4 L6,-4 L6,-13 L22,0 L6,13 L6,4 L-22,4 Z" fill="#fff"/></g>
<g transform="translate(2541,1265) rotate(-105)"><path d="M-22,-4 L6,-4 L6,-13 L22,0 L6,13 L6,4 L-22,4 Z" fill="#fff"/></g>
<g transform="translate(2369,1964) rotate(-40)"><path d="M-22,-4 L6,-4 L6,-13 L22,0 L6,13 L6,4 L-22,4 Z" fill="#fff"/></g>
<g transform="translate(2150,2087) rotate(-15)"><path d="M-22,-4 L6,-4 L6,-13 L22,0 L6,13 L6,4 L-22,4 Z" fill="#fff"/></g>
<g transform="translate(1775,1160) rotate(125)"><path d="M-22,-4 L6,-4 L6,-13 L22,0 L6,13 L6,4 L-22,4 Z" fill="#fff"/></g>
<g transform="translate(1805,1185) rotate(125)"><path d="M-22,-4 L6,-4 L6,-13 L22,0 L6,13 L6,4 L-22,4 Z" fill="#fff"/></g>
<g transform="translate(3340,1370) rotate(-3) scale(1.35)"><path d="M-22,-4 L6,-4 L6,-13 L22,0 L6,13 L6,4 L-22,4 Z" fill="#fff"/></g>
<g transform="translate(2645,2290) rotate(-103) scale(1.35)"><path d="M-22,-4 L6,-4 L6,-13 L22,0 L6,13 L6,4 L-22,4 Z" fill="#fff"/></g>
<g transform="translate(1843,992) rotate(180) scale(1.15)"><path d="M-10,-8 L10,-8 L0,9 Z" fill="#e8543a" stroke="#fff" stroke-width="2"/></g>
<g transform="translate(2465,2020) rotate(0) scale(1.15)"><path d="M-10,-8 L10,-8 L0,9 Z" fill="#e8543a" stroke="#fff" stroke-width="2"/></g>
<g transform="translate(2515,2020) rotate(0) scale(1.15)"><path d="M-10,-8 L10,-8 L0,9 Z" fill="#e8543a" stroke="#fff" stroke-width="2"/></g>
<g transform="translate(1543,1463) rotate(0) scale(1.15)"><path d="M-10,-8 L10,-8 L0,9 Z" fill="#e8543a" stroke="#fff" stroke-width="2"/></g>
<g transform="translate(1518,1512) rotate(0) scale(1.15)"><path d="M-10,-8 L10,-8 L0,9 Z" fill="#e8543a" stroke="#fff" stroke-width="2"/></g>
<ellipse cx="2114.2" cy="1550.5" rx="441.8" ry="466.5" fill="#00ff00" stroke="#3c3c3c" stroke-width="3"/>
<g transform="translate(2522,1124) rotate(0)"><rect x="-29" y="-15" width="58" height="30" rx="10" fill="#0a6fc4"/><rect x="-14" y="-12" width="5" height="24" fill="#8ed0ff"/><rect x="14" y="-11" width="4" height="22" fill="#8ed0ff"/></g>
<g transform="translate(2594,1121) rotate(0)"><rect x="-29" y="-15" width="58" height="30" rx="10" fill="#0a6fc4"/><rect x="-14" y="-12" width="5" height="24" fill="#8ed0ff"/><rect x="14" y="-11" width="4" height="22" fill="#8ed0ff"/></g>
<g transform="translate(2664,1117) rotate(-2)"><rect x="-29" y="-15" width="58" height="30" rx="10" fill="#0a6fc4"/><rect x="-14" y="-12" width="5" height="24" fill="#8ed0ff"/><rect x="14" y="-11" width="4" height="22" fill="#8ed0ff"/></g>
<g transform="translate(2876,1107) rotate(-2)"><rect x="-29" y="-15" width="58" height="30" rx="10" fill="#0a6fc4"/><rect x="-14" y="-12" width="5" height="24" fill="#8ed0ff"/><rect x="14" y="-11" width="4" height="22" fill="#8ed0ff"/></g>
<g transform="translate(2552,1177) rotate(0)"><rect x="-29" y="-15" width="58" height="30" rx="10" fill="#0a6fc4"/><rect x="-14" y="-12" width="5" height="24" fill="#8ed0ff"/><rect x="14" y="-11" width="4" height="22" fill="#8ed0ff"/></g>
<g transform="translate(2712,1170) rotate(-2)"><rect x="-29" y="-15" width="58" height="30" rx="10" fill="#0a6fc4"/><rect x="-14" y="-12" width="5" height="24" fill="#8ed0ff"/><rect x="14" y="-11" width="4" height="22" fill="#8ed0ff"/></g>
<g transform="translate(3087,1145) rotate(-3)"><rect x="-29" y="-15" width="58" height="30" rx="10" fill="#0a6fc4"/><rect x="-14" y="-12" width="5" height="24" fill="#8ed0ff"/><rect x="14" y="-11" width="4" height="22" fill="#8ed0ff"/></g>
<g transform="translate(3362,1124) rotate(-3)"><rect x="-29" y="-15" width="58" height="30" rx="10" fill="#0a6fc4"/><rect x="-14" y="-12" width="5" height="24" fill="#8ed0ff"/><rect x="14" y="-11" width="4" height="22" fill="#8ed0ff"/></g>
<g transform="translate(3130,1266) rotate(0)"><rect x="-29" y="-15" width="58" height="30" rx="10" fill="#0a6fc4"/><rect x="-14" y="-12" width="5" height="24" fill="#8ed0ff"/><rect x="14" y="-11" width="4" height="22" fill="#8ed0ff"/></g>
<g transform="translate(3592,1106) rotate(-3)"><rect x="-29" y="-15" width="58" height="30" rx="10" fill="#0a6fc4"/><rect x="-14" y="-12" width="5" height="24" fill="#8ed0ff"/><rect x="14" y="-11" width="4" height="22" fill="#8ed0ff"/></g>
<g transform="translate(3475,1232) rotate(-3)"><rect x="-29" y="-15" width="58" height="30" rx="10" fill="#0a6fc4"/><rect x="-14" y="-12" width="5" height="24" fill="#8ed0ff"/><rect x="14" y="-11" width="4" height="22" fill="#8ed0ff"/></g>
<g transform="translate(2712,1517) rotate(-55)"><rect x="-29" y="-15" width="58" height="30" rx="10" fill="#0a6fc4"/><rect x="-14" y="-12" width="5" height="24" fill="#8ed0ff"/><rect x="14" y="-11" width="4" height="22" fill="#8ed0ff"/></g>
<g transform="translate(1925,1055) rotate(-20)"><rect x="-29" y="-15" width="58" height="30" rx="10" fill="#0a6fc4"/><rect x="-14" y="-12" width="5" height="24" fill="#8ed0ff"/><rect x="14" y="-11" width="4" height="22" fill="#8ed0ff"/></g>
<g transform="translate(1972,1085) rotate(-15)"><rect x="-29" y="-15" width="58" height="30" rx="10" fill="#0a6fc4"/><rect x="-14" y="-12" width="5" height="24" fill="#8ed0ff"/><rect x="14" y="-11" width="4" height="22" fill="#8ed0ff"/></g>
<g transform="translate(1862,1105) rotate(12)"><rect x="-29" y="-15" width="58" height="30" rx="10" fill="#0a6fc4"/><rect x="-14" y="-12" width="5" height="24" fill="#8ed0ff"/><rect x="14" y="-11" width="4" height="22" fill="#8ed0ff"/></g>
<g transform="translate(1381,1231) rotate(-3)"><rect x="-29" y="-15" width="58" height="30" rx="10" fill="#0a6fc4"/><rect x="-14" y="-12" width="5" height="24" fill="#8ed0ff"/><rect x="14" y="-11" width="4" height="22" fill="#8ed0ff"/></g>
<g transform="translate(1204,1408) rotate(2)"><rect x="-29" y="-15" width="58" height="30" rx="10" fill="#0a6fc4"/><rect x="-14" y="-12" width="5" height="24" fill="#8ed0ff"/><rect x="14" y="-11" width="4" height="22" fill="#8ed0ff"/></g>
<g transform="translate(1197,1470) rotate(3)"><rect x="-29" y="-15" width="58" height="30" rx="10" fill="#0a6fc4"/><rect x="-14" y="-12" width="5" height="24" fill="#8ed0ff"/><rect x="14" y="-11" width="4" height="22" fill="#8ed0ff"/></g>
<g transform="translate(1404,1472) rotate(12)"><rect x="-29" y="-15" width="58" height="30" rx="10" fill="#0a6fc4"/><rect x="-14" y="-12" width="5" height="24" fill="#8ed0ff"/><rect x="14" y="-11" width="4" height="22" fill="#8ed0ff"/></g>
<g transform="translate(1614,1518) rotate(40)"><rect x="-29" y="-15" width="58" height="30" rx="10" fill="#0a6fc4"/><rect x="-14" y="-12" width="5" height="24" fill="#8ed0ff"/><rect x="14" y="-11" width="4" height="22" fill="#8ed0ff"/></g>
<g transform="translate(1595,1574) rotate(62)"><rect x="-29" y="-15" width="58" height="30" rx="10" fill="#0a6fc4"/><rect x="-14" y="-12" width="5" height="24" fill="#8ed0ff"/><rect x="14" y="-11" width="4" height="22" fill="#8ed0ff"/></g>
<g transform="translate(1713,1200) rotate(-25)"><rect x="-29" y="-15" width="58" height="30" rx="10" fill="#0a6fc4"/><rect x="-14" y="-12" width="5" height="24" fill="#8ed0ff"/><rect x="14" y="-11" width="4" height="22" fill="#8ed0ff"/></g>
<g transform="translate(2288,1097) rotate(20)"><rect x="-29" y="-15" width="58" height="30" rx="10" fill="#0a6fc4"/><rect x="-14" y="-12" width="5" height="24" fill="#8ed0ff"/><rect x="14" y="-11" width="4" height="22" fill="#8ed0ff"/></g>
<g transform="translate(2466,1217) rotate(70)"><rect x="-29" y="-15" width="58" height="30" rx="10" fill="#0a6fc4"/><rect x="-14" y="-12" width="5" height="24" fill="#8ed0ff"/><rect x="14" y="-11" width="4" height="22" fill="#8ed0ff"/></g>
<g transform="translate(2588,1742) rotate(-70)"><rect x="-29" y="-15" width="58" height="30" rx="10" fill="#0a6fc4"/><rect x="-14" y="-12" width="5" height="24" fill="#8ed0ff"/><rect x="14" y="-11" width="4" height="22" fill="#8ed0ff"/></g>
<g transform="translate(1705,1782) rotate(65)"><rect x="-29" y="-15" width="58" height="30" rx="10" fill="#0a6fc4"/><rect x="-14" y="-12" width="5" height="24" fill="#8ed0ff"/><rect x="14" y="-11" width="4" height="22" fill="#8ed0ff"/></g>
<g transform="translate(1672,1815) rotate(65)"><rect x="-29" y="-15" width="58" height="30" rx="10" fill="#0a6fc4"/><rect x="-14" y="-12" width="5" height="24" fill="#8ed0ff"/><rect x="14" y="-11" width="4" height="22" fill="#8ed0ff"/></g>
<g transform="translate(1867,1965) rotate(30)"><rect x="-29" y="-15" width="58" height="30" rx="10" fill="#0a6fc4"/><rect x="-14" y="-12" width="5" height="24" fill="#8ed0ff"/><rect x="14" y="-11" width="4" height="22" fill="#8ed0ff"/></g>
<g transform="translate(1827,1992) rotate(30)"><rect x="-29" y="-15" width="58" height="30" rx="10" fill="#0a6fc4"/><rect x="-14" y="-12" width="5" height="24" fill="#8ed0ff"/><rect x="14" y="-11" width="4" height="22" fill="#8ed0ff"/></g>
<g transform="translate(2171,2037) rotate(-5)"><rect x="-29" y="-15" width="58" height="30" rx="10" fill="#0a6fc4"/><rect x="-14" y="-12" width="5" height="24" fill="#8ed0ff"/><rect x="14" y="-11" width="4" height="22" fill="#8ed0ff"/></g>
<g transform="translate(2207,2077) rotate(-5)"><rect x="-29" y="-15" width="58" height="30" rx="10" fill="#0a6fc4"/><rect x="-14" y="-12" width="5" height="24" fill="#8ed0ff"/><rect x="14" y="-11" width="4" height="22" fill="#8ed0ff"/></g>
<g transform="translate(2449,1917) rotate(-12)"><rect x="-29" y="-15" width="58" height="30" rx="10" fill="#0a6fc4"/><rect x="-14" y="-12" width="5" height="24" fill="#8ed0ff"/><rect x="14" y="-11" width="4" height="22" fill="#8ed0ff"/></g>
<g transform="translate(2417,1980) rotate(-30)"><rect x="-29" y="-15" width="58" height="30" rx="10" fill="#0a6fc4"/><rect x="-14" y="-12" width="5" height="24" fill="#8ed0ff"/><rect x="14" y="-11" width="4" height="22" fill="#8ed0ff"/></g>
</g>
</svg>
<div class="t" style="left:172px;top:382.4px;font-size:45px;line-height:45px;color:#262626;letter-spacing:-1.5px;">Map Type:</div>
<div class="a" style="left:396px;top:370px;width:374px;height:77px;background:#fdfdfd;"></div>
<div class="a" style="left:396px;top:370px;width:371px;height:74px;background:#8a8a8a;"></div>
<div class="a" style="left:401px;top:375px;width:366px;height:69px;background:#ffffff;"></div>
<div class="a" style="left:699px;top:375px;width:68px;height:69px;background:#7a7a7a;"></div>
<div class="a" style="left:699px;top:375px;width:64px;height:65px;background:#fafafa;"></div>
<div class="a" style="left:702px;top:378px;width:61px;height:62px;background:#b0b0b0;"></div>
<div class="a" style="left:702px;top:378px;width:58px;height:59px;background:#efefef;"></div>
<div class="a" style="left:718.0px;top:402.5px;width:0;height:0;border-left:13px solid transparent;border-right:13px solid transparent;border-top:14px solid #000;"></div>
<div class="t" style="left:410px;top:391.4px;font-size:45px;line-height:45px;color:#262626;letter-spacing:-1.5px;">Conflict Points</div>
<div class="a" style="left:799px;top:362px;width:248px;height:90px;background:#7c7c7c;"></div>
<div class="a" style="left:799px;top:362px;width:243px;height:85px;background:#fbfbfb;"></div>
<div class="a" style="left:802px;top:365px;width:240px;height:82px;background:#a9a9a9;"></div>
<div class="a" style="left:802px;top:365px;width:237px;height:79px;background:#f4f4f4;"></div>
<div class="a" style="left:803px;top:366px;width:235px;height:77px;background:#f1f1f1;"></div>
<div class="t" style="left:799px;width:243px;text-align:center;top:383.4px;font-size:45px;line-height:45px;color:#262626;letter-spacing:-1.5px;">Fit</div>
<div class="t" style="left:172px;top:495.4px;font-size:45px;line-height:45px;color:#262626;letter-spacing:-1.5px;">Map:</div>
<div class="t" style="left:309px;top:495.4px;font-size:45px;line-height:45px;color:#262626;letter-spacing:-1.5px;">None</div>
<div class="a" style="left:174px;top:587px;width:503px;height:90px;background:#7c7c7c;"></div>
<div class="a" style="left:174px;top:587px;width:498px;height:85px;background:#fbfbfb;"></div>
<div class="a" style="left:177px;top:590px;width:495px;height:82px;background:#a9a9a9;"></div>
<div class="a" style="left:177px;top:590px;width:492px;height:79px;background:#f4f4f4;"></div>
<div class="a" style="left:178px;top:591px;width:490px;height:77px;background:#f1f1f1;"></div>
<div class="t" style="left:174px;width:498px;text-align:center;top:607.4px;font-size:45px;line-height:45px;color:#262626;letter-spacing:-1.5px;">Edit background image</div>
<div class="t" style="left:172px;top:735.4px;font-size:45px;line-height:45px;color:#262626;letter-spacing:-1.5px;">Background Image Coord:</div>
<div class="a" style="left:742px;top:707px;width:298px;height:90px;background:#7c7c7c;"></div>
<div class="a" style="left:742px;top:707px;width:293px;height:85px;background:#fbfbfb;"></div>
<div class="a" style="left:745px;top:710px;width:290px;height:82px;background:#a9a9a9;"></div>
<div class="a" style="left:745px;top:710px;width:287px;height:79px;background:#f4f4f4;"></div>
<div class="a" style="left:746px;top:711px;width:285px;height:77px;background:#f1f1f1;"></div>
<div class="t" style="left:742px;width:293px;text-align:center;top:728.4px;font-size:45px;line-height:45px;color:#262626;letter-spacing:-1.5px;">Set</div>
<div class="t" style="left:172px;top:837.4px;font-size:45px;line-height:45px;color:#262626;letter-spacing:-1.5px;">Upper-left:</div>
<div class="t" style="left:438px;top:837.4px;font-size:45px;line-height:45px;color:#262626;letter-spacing:-1.5px;">x</div>
<div class="a" style="left:492px;top:815px;width:233px;height:87px;background:#fdfdfd;"></div>
<div class="a" style="left:492px;top:815px;width:230px;height:84px;background:#8a8a8a;"></div>
<div class="a" style="left:497px;top:820px;width:225px;height:79px;background:#ffffff;"></div>
<div class="t" style="right:3044px;top:827.4px;font-size:45px;line-height:45px;color:#262626;letter-spacing:-1.5px;">0</div>
<div class="t" style="left:760px;top:837.4px;font-size:45px;line-height:45px;color:#262626;letter-spacing:-1.5px;">y</div>
<div class="a" style="left:812px;top:815px;width:230px;height:87px;background:#fdfdfd;"></div>
<div class="a" style="left:812px;top:815px;width:227px;height:84px;background:#8a8a8a;"></div>
<div class="a" style="left:817px;top:820px;width:222px;height:79px;background:#ffffff;"></div>
<div class="t" style="right:2724px;top:827.4px;font-size:45px;line-height:45px;color:#262626;letter-spacing:-1.5px;">3799</div>
<div class="t" style="left:172px;top:960.4px;font-size:45px;line-height:45px;color:#262626;letter-spacing:-1.5px;">Lower-right:</div>
<div class="t" style="left:438px;top:955.4px;font-size:45px;line-height:45px;color:#262626;letter-spacing:-1.5px;">x</div>
<div class="a" style="left:492px;top:940px;width:233px;height:82px;background:#fdfdfd;"></div>
<div class="a" style="left:492px;top:940px;width:230px;height:79px;background:#8a8a8a;"></div>
<div class="a" style="left:497px;top:945px;width:225px;height:74px;background:#ffffff;"></div>
<div class="t" style="right:3044px;top:950.4px;font-size:45px;line-height:45px;color:#262626;letter-spacing:-1.5px;">3058</div>
<div class="t" style="left:760px;top:960.4px;font-size:45px;line-height:45px;color:#262626;letter-spacing:-1.5px;">y</div>
<div class="a" style="left:816px;top:940px;width:231px;height:82px;background:#fdfdfd;"></div>
<div class="a" style="left:816px;top:940px;width:228px;height:79px;background:#8a8a8a;"></div>
<div class="a" style="left:821px;top:945px;width:223px;height:74px;background:#ffffff;"></div>
<div class="t" style="right:2719px;top:950.4px;font-size:45px;line-height:45px;color:#262626;letter-spacing:-1.5px;">0</div>
<div class="t" style="left:177px;top:1107.4px;font-size:45px;line-height:45px;color:#262626;letter-spacing:-1.5px;">Scale conflict icons:</div>
<div class="a" style="left:666px;top:1086px;width:164px;height:89px;background:#7c7c7c;"></div>
<div class="a" style="left:666px;top:1086px;width:159px;height:84px;background:#fbfbfb;"></div>
<div class="a" style="left:669px;top:1089px;width:156px;height:81px;background:#a9a9a9;"></div>
<div class="a" style="left:669px;top:1089px;width:153px;height:78px;background:#f4f4f4;"></div>
<div class="a" style="left:670px;top:1090px;width:151px;height:76px;background:#f1f1f1;"></div>
<div class="t" style="left:666px;width:159px;text-align:center;top:1105.4px;font-size:45px;line-height:45px;color:#262626;letter-spacing:-1.5px;">+</div>
<div class="a" style="left:885px;top:1086px;width:155px;height:89px;background:#7c7c7c;"></div>
<div class="a" style="left:885px;top:1086px;width:150px;height:84px;background:#fbfbfb;"></div>
<div class="a" style="left:888px;top:1089px;width:147px;height:81px;background:#a9a9a9;"></div>
<div class="a" style="left:888px;top:1089px;width:144px;height:78px;background:#f4f4f4;"></div>
<div class="a" style="left:889px;top:1090px;width:142px;height:76px;background:#f1f1f1;"></div>
<div class="t" style="left:885px;width:150px;text-align:center;top:1102.4px;font-size:45px;line-height:45px;color:#262626;letter-spacing:-1.5px;">-</div>
<div class="t" style="left:177px;top:1262.4px;font-size:45px;line-height:45px;color:#262626;letter-spacing:-1.5px;">Conflicts type display configuration:</div>
<div class="t" style="left:177px;top:1367.4px;font-size:45px;line-height:45px;color:#262626;letter-spacing:-1.5px;">Crossing:</div>
<div class="a" style="left:469px;top:1367px;width:356px;height:73px;background:#fdfdfd;"></div>
<div class="a" style="left:469px;top:1367px;width:353px;height:70px;background:#8a8a8a;"></div>
<div class="a" style="left:474px;top:1372px;width:348px;height:65px;background:#ffffff;"></div>
<div class="a" style="left:756px;top:1372px;width:66px;height:65px;background:#7a7a7a;"></div>
<div class="a" style="left:756px;top:1372px;width:62px;height:61px;background:#fafafa;"></div>
<div class="a" style="left:759px;top:1375px;width:59px;height:58px;background:#b0b0b0;"></div>
<div class="a" style="left:759px;top:1375px;width:56px;height:55px;background:#efefef;"></div>
<div class="a" style="left:774.0px;top:1397.5px;width:0;height:0;border-left:13px solid transparent;border-right:13px solid transparent;border-top:14px solid #000;"></div>
<div class="t" style="left:483px;top:1382.4px;font-size:45px;line-height:45px;color:#262626;letter-spacing:-1.5px;">Cone</div>
<div class="t" style="left:177px;top:1470.4px;font-size:45px;line-height:45px;color:#262626;letter-spacing:-1.5px;">Rear end:</div>
<div class="a" style="left:469px;top:1470px;width:356px;height:72px;background:#fdfdfd;"></div>
<div class="a" style="left:469px;top:1470px;width:353px;height:69px;background:#8a8a8a;"></div>
<div class="a" style="left:474px;top:1475px;width:348px;height:64px;background:#ffffff;"></div>
<div class="a" style="left:756px;top:1475px;width:66px;height:64px;background:#7a7a7a;"></div>
<div class="a" style="left:756px;top:1475px;width:62px;height:60px;background:#fafafa;"></div>
<div class="a" style="left:759px;top:1478px;width:59px;height:57px;background:#b0b0b0;"></div>
<div class="a" style="left:759px;top:1478px;width:56px;height:54px;background:#efefef;"></div>
<div class="a" style="left:774.0px;top:1500.0px;width:0;height:0;border-left:13px solid transparent;border-right:13px solid transparent;border-top:14px solid #000;"></div>
<div class="t" style="left:483px;top:1485.4px;font-size:45px;line-height:45px;color:#262626;letter-spacing:-1.5px;">Box</div>
<div class="t" style="left:177px;top:1582.4px;font-size:45px;line-height:45px;color:#262626;letter-spacing:-1.5px;">Lane change:</div>
<div class="a" style="left:469px;top:1581px;width:356px;height:73px;background:#fdfdfd;"></div>
<div class="a" style="left:469px;top:1581px;width:353px;height:70px;background:#8a8a8a;"></div>
<div class="a" style="left:474px;top:1586px;width:348px;height:65px;background:#ffffff;"></div>
<div class="a" style="left:756px;top:1586px;width:66px;height:65px;background:#7a7a7a;"></div>
<div class="a" style="left:756px;top:1586px;width:62px;height:61px;background:#fafafa;"></div>
<div class="a" style="left:759px;top:1589px;width:59px;height:58px;background:#b0b0b0;"></div>
<div class="a" style="left:759px;top:1589px;width:56px;height:55px;background:#efefef;"></div>
<div class="a" style="left:774.0px;top:1611.5px;width:0;height:0;border-left:13px solid transparent;border-right:13px solid transparent;border-top:14px solid #000;"></div>
<div class="t" style="left:483px;top:1597.4px;font-size:45px;line-height:45px;color:#262626;letter-spacing:-1.5px;">Sphere</div>
<div class="t" style="left:177px;top:1727.4px;font-size:45px;line-height:45px;color:#262626;letter-spacing:-1.5px;">Color configurations based on:</div>
<svg class="a" style="left:185px;top:1825px" width="40" height="40" viewBox="0 0 40 40"><circle cx="20" cy="20" r="15" fill="#f6f6f6" stroke="#e4e4e4" stroke-width="4"/><path d="M9 30 A15 15 0 0 1 30 9" stroke="#5a5a5a" stroke-width="4" fill="none"/><circle cx="20" cy="20" r="6" fill="#000"/></svg>
<div class="t" style="left:249px;top:1822.4px;font-size:45px;line-height:45px;color:#262626;letter-spacing:-1.5px;">Conflict Type</div>
<svg class="a" style="left:675px;top:1825px" width="40" height="40" viewBox="0 0 40 40"><circle cx="20" cy="20" r="15" fill="#fbfbfb" stroke="#e8e8e8" stroke-width="4"/><path d="M9 30 A15 15 0 0 1 30 9" stroke="#5a5a5a" stroke-width="4" fill="none"/></svg>
<div class="t" style="left:741px;top:1822.4px;font-size:45px;line-height:45px;color:#262626;letter-spacing:-1.5px;">Conflict Severity</div>
<div class="a" style="left:176px;top:1922px;width:416px;height:88px;background:#7c7c7c;"></div>
<div class="a" style="left:176px;top:1922px;width:411px;height:83px;background:#fbfbfb;"></div>
<div class="a" style="left:179px;top:1925px;width:408px;height:80px;background:#a9a9a9;"></div>
<div class="a" style="left:179px;top:1925px;width:405px;height:77px;background:#f4f4f4;"></div>
<div class="a" style="left:180px;top:1926px;width:403px;height:75px;background:#f1f1f1;"></div>
<div class="t" style="left:176px;width:411px;text-align:center;top:1942.4px;font-size:45px;line-height:45px;color:#262626;letter-spacing:-1.5px;">Crossing color</div>
<div class="a" style="left:176px;top:2037px;width:416px;height:88px;background:#7c7c7c;"></div>
<div class="a" style="left:176px;top:2037px;width:411px;height:83px;background:#fbfbfb;"></div>
<div class="a" style="left:179px;top:2040px;width:408px;height:80px;background:#a9a9a9;"></div>
<div class="a" style="left:179px;top:2040px;width:405px;height:77px;background:#f4f4f4;"></div>
<div class="a" style="left:180px;top:2041px;width:403px;height:75px;background:#f1f1f1;"></div>
<div class="t" style="left:176px;width:411px;text-align:center;top:2057.4px;font-size:45px;line-height:45px;color:#262626;letter-spacing:-1.5px;">RearEnd color</div>
<div class="a" style="left:176px;top:2155px;width:416px;height:90px;background:#7c7c7c;"></div>
<div class="a" style="left:176px;top:2155px;width:411px;height:85px;background:#fbfbfb;"></div>
<div class="a" style="left:179px;top:2158px;width:408px;height:82px;background:#a9a9a9;"></div>
<div class="a" style="left:179px;top:2158px;width:405px;height:79px;background:#f4f4f4;"></div>
<div class="a" style="left:180px;top:2159px;width:403px;height:77px;background:#f1f1f1;"></div>
<div class="t" style="left:176px;width:411px;text-align:center;top:2175.4px;font-size:45px;line-height:45px;color:#262626;letter-spacing:-1.5px;">LaneChange color</div>
<div class="a" style="left:666px;top:1922px;width:416px;height:88px;background:#7c7c7c;"></div>
<div class="a" style="left:666px;top:1922px;width:411px;height:83px;background:#fbfbfb;"></div>
<div class="a" style="left:669px;top:1925px;width:408px;height:80px;background:#a9a9a9;"></div>
<div class="a" style="left:669px;top:1925px;width:405px;height:77px;background:#f4f4f4;"></div>
<div class="a" style="left:670px;top:1926px;width:403px;height:75px;background:#f1f1f1;"></div>
<div class="t" style="left:666px;width:411px;text-align:center;top:1942.4px;font-size:45px;line-height:45px;color:#a8a8a8;letter-spacing:-1.5px;">TTC=0 Color</div>
<div class="a" style="left:666px;top:2037px;width:416px;height:88px;background:#7c7c7c;"></div>
<div class="a" style="left:666px;top:2037px;width:411px;height:83px;background:#fbfbfb;"></div>
<div class="a" style="left:669px;top:2040px;width:408px;height:80px;background:#a9a9a9;"></div>
<div class="a" style="left:669px;top:2040px;width:405px;height:77px;background:#f4f4f4;"></div>
<div class="a" style="left:670px;top:2041px;width:403px;height:75px;background:#f1f1f1;"></div>
<div class="t" style="left:666px;width:411px;text-align:center;top:2057.4px;font-size:45px;line-height:45px;color:#a8a8a8;letter-spacing:-1.5px;">TTC&lt;=0.5 Color</div>
<div class="a" style="left:666px;top:2155px;width:416px;height:90px;background:#7c7c7c;"></div>
<div class="a" style="left:666px;top:2155px;width:411px;height:85px;background:#fbfbfb;"></div>
<div class="a" style="left:669px;top:2158px;width:408px;height:82px;background:#a9a9a9;"></div>
<div class="a" style="left:669px;top:2158px;width:405px;height:79px;background:#f4f4f4;"></div>
<div class="a" style="left:670px;top:2159px;width:403px;height:77px;background:#f1f1f1;"></div>
<div class="t" style="left:666px;width:411px;text-align:center;top:2175.4px;font-size:45px;line-height:45px;color:#a8a8a8;letter-spacing:-1.5px;">TTC&lt;=1.0 Color</div>
<div class="a" style="left:666px;top:2272px;width:416px;height:90px;background:#7c7c7c;"></div>
<div class="a" style="left:666px;top:2272px;width:411px;height:85px;background:#fbfbfb;"></div>
<div class="a" style="left:669px;top:2275px;width:408px;height:82px;background:#a9a9a9;"></div>
<div class="a" style="left:669px;top:2275px;width:405px;height:79px;background:#f4f4f4;"></div>
<div class="a" style="left:670px;top:2276px;width:403px;height:77px;background:#f1f1f1;"></div>
<div class="t" style="left:666px;width:411px;text-align:center;top:2292.4px;font-size:45px;line-height:45px;color:#a8a8a8;letter-spacing:-1.5px;">TTC&lt;=1.5 Color</div>
<div class="t" style="left:176px;top:2440.4px;font-size:45px;line-height:45px;color:#262626;letter-spacing:-1.5px;">Conflicts:  55 total</div>
<div class="a" style="left:176px;top:2534px;width:416px;height:90px;background:#7c7c7c;"></div>
<div class="a" style="left:176px;top:2534px;width:411px;height:85px;background:#fbfbfb;"></div>
<div class="a" style="left:179px;top:2537px;width:408px;height:82px;background:#a9a9a9;"></div>
<div class="a" style="left:179px;top:2537px;width:405px;height:79px;background:#f4f4f4;"></div>
<div class="a" style="left:180px;top:2538px;width:403px;height:77px;background:#f1f1f1;"></div>
<div class="t" style="left:176px;width:411px;text-align:center;top:2553.4px;font-size:45px;line-height:45px;color:#262626;letter-spacing:-1.5px;">Refresh Map</div>
<div class="a" style="left:666px;top:2534px;width:416px;height:90px;background:#7c7c7c;"></div>
<div class="a" style="left:666px;top:2534px;width:411px;height:85px;background:#fbfbfb;"></div>
<div class="a" style="left:669px;top:2537px;width:408px;height:82px;background:#a9a9a9;"></div>
<div class="a" style="left:669px;top:2537px;width:405px;height:79px;background:#f4f4f4;"></div>
<div class="a" style="left:670px;top:2538px;width:403px;height:77px;background:#f1f1f1;"></div>
<div class="t" style="left:666px;width:411px;text-align:center;top:2553.4px;font-size:45px;line-height:45px;color:#262626;letter-spacing:-1.5px;">Save image</div>
<div class="a" style="left:91px;top:2774px;width:294px;height:90px;background:#7c7c7c;"></div>
<div class="a" style="left:91px;top:2774px;width:289px;height:85px;background:#fbfbfb;"></div>
<div class="a" style="left:94px;top:2777px;width:286px;height:82px;background:#a9a9a9;"></div>
<div class="a" style="left:94px;top:2777px;width:283px;height:79px;background:#f4f4f4;"></div>
<div class="a" style="left:95px;top:2778px;width:281px;height:77px;background:#f1f1f1;"></div>
<div class="t" style="left:91px;width:289px;text-align:center;top:2793.4px;font-size:45px;line-height:45px;color:#262626;letter-spacing:-1.5px;">Save...</div>
<div class="a" style="left:412px;top:2774px;width:298px;height:90px;background:#7c7c7c;"></div>
<div class="a" style="left:412px;top:2774px;width:293px;height:85px;background:#fbfbfb;"></div>
<div class="a" style="left:415px;top:2777px;width:290px;height:82px;background:#a9a9a9;"></div>
<div class="a" style="left:415px;top:2777px;width:287px;height:79px;background:#f4f4f4;"></div>
<div class="a" style="left:416px;top:2778px;width:285px;height:77px;background:#f1f1f1;"></div>
<div class="t" style="left:412px;width:293px;text-align:center;top:2793.4px;font-size:45px;line-height:45px;color:#262626;letter-spacing:-1.5px;">Open...</div>
<div class="a" style="left:3367px;top:2772px;width:297px;height:92px;background:#7c7c7c;"></div>
<div class="a" style="left:3367px;top:2772px;width:292px;height:87px;background:#fbfbfb;"></div>
<div class="a" style="left:3370px;top:2775px;width:289px;height:84px;background:#a9a9a9;"></div>
<div class="a" style="left:3370px;top:2775px;width:286px;height:81px;background:#f4f4f4;"></div>
<div class="a" style="left:3371px;top:2776px;width:284px;height:79px;background:#f1f1f1;"></div>
<div class="t" style="left:3367px;width:292px;text-align:center;top:2793.4px;font-size:45px;line-height:45px;color:#262626;letter-spacing:-1.5px;">Close</div>
</body></html>
